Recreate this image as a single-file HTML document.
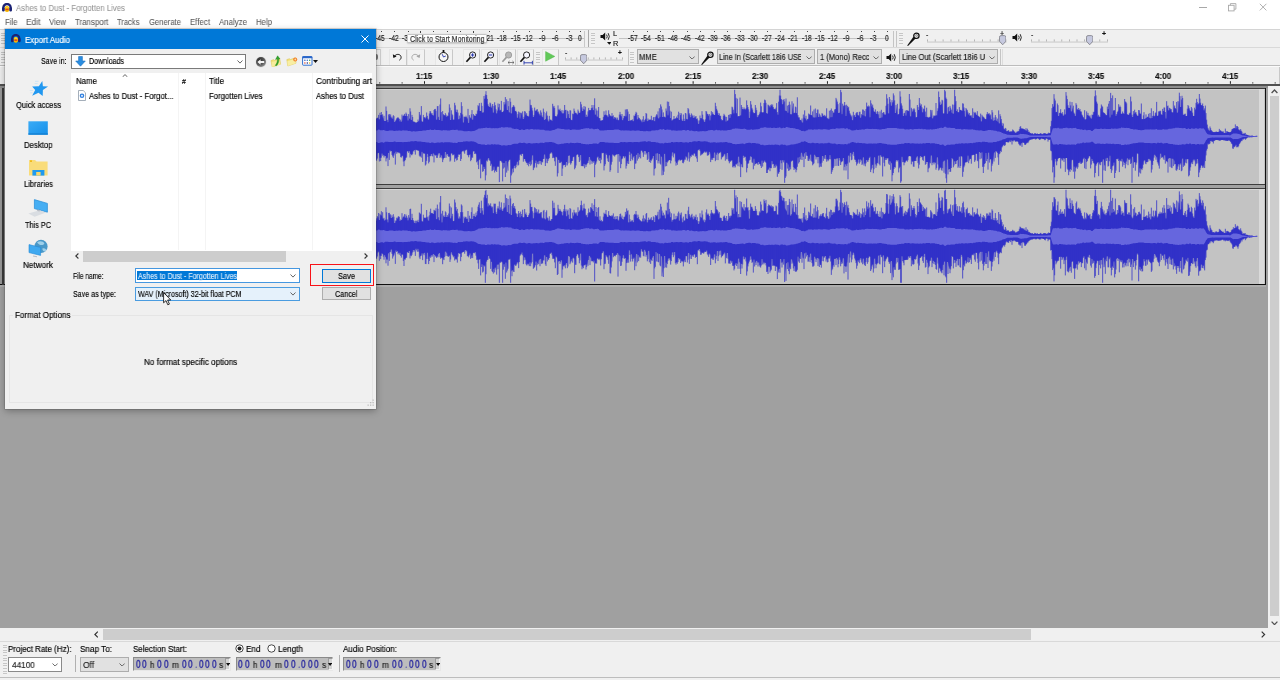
<!DOCTYPE html>
<html><head><meta charset="utf-8"><title>Audacity</title>
<style>
*{box-sizing:border-box;margin:0;padding:0}
html,body{width:1280px;height:680px;overflow:hidden;background:#f0f0f0;font-family:"Liberation Sans",sans-serif;font-size:9px;color:#000}
.a{position:absolute}
.t{position:absolute;white-space:nowrap;line-height:1;will-change:transform;-webkit-text-stroke:0.16px}
#titlebar{left:0;top:0;width:1280px;height:14px;background:#fff}
#menubar{left:0;top:14px;width:1280px;height:15px;background:#fff}
.menu{top:17px;font-size:9px;color:#5a5a5a}
.combo{position:absolute;border:1px solid #adadad;background:#e1e1e1;font-size:9px;line-height:13px;white-space:nowrap;overflow:hidden;padding-left:2px;color:#1a1a1a}
.chev{position:absolute;width:7px;height:4px}
.tb{position:absolute;background:#f0f0f0}
.hl{position:absolute;height:1px;background:#d0d0d0}
.vl{position:absolute;width:1px;background:#b8b8b8}
.btn{position:absolute;width:17.5px;height:17px;background:#f2f2f2;border:1px solid #e6e6e6;border-right-color:#c8c8c8;border-bottom-color:#c0c0c0}
.grab{position:absolute;width:4px;background:repeating-linear-gradient(#f2f2f2 0 1.6px,#c6c6c6 1.6px 2.6px)}
.tc{position:absolute;height:14px;background:#bdbdbd;border:1px solid #8a8a8a;border-right-color:#e8e8e8;border-bottom-color:#e8e8e8;font-size:10px;line-height:12px;white-space:nowrap;color:#222}
.tc b{font-weight:normal;color:#3b3bb5;letter-spacing:1.2px}
#dlg{left:5px;top:29px;width:371px;height:379.8px;background:#f0f0f0;box-shadow:0 0 0 0.6px rgba(60,60,60,.35), 0 2px 7px rgba(0,0,0,.30)}
#dlgtitle{left:0;top:0;width:371px;height:20px;background:#0078d7}
.lbl{font-size:8.5px;color:#000}
.side{font-size:8.5px;color:#000;text-align:center;width:66px}
</style></head><body>
<!-- main window -->
<div class="a" id="titlebar"></div>
<div class="a" id="menubar"></div>
<svg class="a" style="left:1.8px;top:2.9px;" width="10" height="9.2" viewBox="0 0 10 9.2"><path d="M1.3 7.4V4.9A3.7 3.9 0 0 1 8.7 4.9V7.4" fill="none" stroke="#1b2375" stroke-width="2.3" stroke-linecap="butt"/><ellipse cx="5" cy="6" rx="2.4" ry="3" fill="#f5b800"/><ellipse cx="5" cy="4.6" rx="1.6" ry="1.2" fill="#f8cf30"/><ellipse cx="5" cy="6.4" rx="1.7" ry="0.9" fill="#e2481c"/><rect x="0.1" y="4.2" width="2.5" height="4.3" rx="1.1" fill="#1b2375"/><rect x="7.4" y="4.2" width="2.5" height="4.3" rx="1.1" fill="#1b2375"/></svg>
<div class="t" style="left:16.00px;top:4.11px;font-size:8.8px;color:#959595;transform:scaleX(0.8843);transform-origin:0 50%;-webkit-text-stroke:0.05px;">Ashes to Dust - Forgotten Lives</div>
<div class="a" style="left:1199px;top:6.8px;width:7.5px;height:1px;background:#a8a8a8;"></div>
<svg class="a" style="left:1228px;top:3px;" width="9" height="9" viewBox="0 0 9 9"><rect x="0.5" y="2.3" width="5.6" height="5.6" fill="none" stroke="#a8a8a8" stroke-width="0.9"/><path d="M2.4 2.3V0.6H7.9V6.2H6.2" fill="none" stroke="#a8a8a8" stroke-width="0.9"/></svg>
<svg class="a" style="left:1259px;top:3px;" width="9" height="9" viewBox="0 0 9 9"><path d="M0.8 0.8L7.4 7.4M7.4 0.8L0.8 7.4" stroke="#a8a8a8" stroke-width="0.9" fill="none"/></svg>
<div class="t" style="left:5.00px;top:18.11px;font-size:8.8px;color:#585858;transform:scaleX(0.8815);transform-origin:0 50%;-webkit-text-stroke:0.05px;">File</div>
<div class="t" style="left:26.00px;top:18.11px;font-size:8.8px;color:#585858;transform:scaleX(0.9562);transform-origin:0 50%;-webkit-text-stroke:0.05px;">Edit</div>
<div class="t" style="left:49.00px;top:18.11px;font-size:8.8px;color:#585858;transform:scaleX(0.8987);transform-origin:0 50%;-webkit-text-stroke:0.05px;">View</div>
<div class="t" style="left:75.00px;top:18.11px;font-size:8.8px;color:#585858;transform:scaleX(0.8973);transform-origin:0 50%;-webkit-text-stroke:0.05px;">Transport</div>
<div class="t" style="left:117.00px;top:18.11px;font-size:8.8px;color:#585858;transform:scaleX(0.8629);transform-origin:0 50%;-webkit-text-stroke:0.05px;">Tracks</div>
<div class="t" style="left:148.50px;top:18.11px;font-size:8.8px;color:#585858;transform:scaleX(0.8721);transform-origin:0 50%;-webkit-text-stroke:0.05px;">Generate</div>
<div class="t" style="left:189.50px;top:18.11px;font-size:8.8px;color:#585858;transform:scaleX(0.8953);transform-origin:0 50%;-webkit-text-stroke:0.05px;">Effect</div>
<div class="t" style="left:218.50px;top:18.11px;font-size:8.8px;color:#585858;transform:scaleX(0.8943);transform-origin:0 50%;-webkit-text-stroke:0.05px;">Analyze</div>
<div class="t" style="left:255.50px;top:18.11px;font-size:8.8px;color:#585858;transform:scaleX(0.8840);transform-origin:0 50%;-webkit-text-stroke:0.05px;">Help</div>
<div class="a" style="left:0px;top:29px;width:1280px;height:1px;background:#d4d4d4;"></div>
<div class="a" style="left:0px;top:47px;width:1280px;height:1px;background:#d9d9d9;"></div>
<div class="a" style="left:0px;top:66px;width:1280px;height:1px;background:#d4d4d4;"></div>
<div class="a" style="left:376px;top:38px;width:208px;height:1.2px;background:#c2c2c2;"></div>
<div class="t" style="left:375.40px;top:33.91px;font-size:8.8px;color:#1a1a1a;transform:scaleX(0.7705);transform-origin:0 50%;">-45</div>
<div class="a" style="left:380.9px;top:30.8px;width:0.9px;height:1.3px;background:#444;"></div>
<div class="t" style="left:388.70px;top:33.91px;font-size:8.8px;color:#1a1a1a;transform:scaleX(0.7705);transform-origin:0 50%;">-42</div>
<div class="a" style="left:394.2px;top:30.8px;width:0.9px;height:1.3px;background:#444;"></div>
<div class="t" style="left:402.10px;top:33.91px;font-size:8.8px;color:#1a1a1a;transform:scaleX(0.7705);transform-origin:0 50%;">-39</div>
<div class="a" style="left:407.6px;top:30.8px;width:0.9px;height:1.3px;background:#444;"></div>
<div class="t" style="left:483.80px;top:33.91px;font-size:8.8px;color:#1a1a1a;transform:scaleX(0.7705);transform-origin:0 50%;">-21</div>
<div class="a" style="left:489.3px;top:30.8px;width:0.9px;height:1.3px;background:#444;"></div>
<div class="t" style="left:497.30px;top:33.91px;font-size:8.8px;color:#1a1a1a;transform:scaleX(0.7705);transform-origin:0 50%;">-18</div>
<div class="a" style="left:502.8px;top:30.8px;width:0.9px;height:1.3px;background:#444;"></div>
<div class="t" style="left:510.50px;top:33.91px;font-size:8.8px;color:#1a1a1a;transform:scaleX(0.7705);transform-origin:0 50%;">-15</div>
<div class="a" style="left:516px;top:30.8px;width:0.9px;height:1.3px;background:#444;"></div>
<div class="t" style="left:523.10px;top:33.91px;font-size:8.8px;color:#1a1a1a;transform:scaleX(0.7705);transform-origin:0 50%;">-12</div>
<div class="a" style="left:528.6px;top:30.8px;width:0.9px;height:1.3px;background:#444;"></div>
<div class="t" style="left:538.60px;top:33.91px;font-size:8.8px;color:#1a1a1a;transform:scaleX(0.8179);transform-origin:0 50%;">-9</div>
<div class="a" style="left:542.4px;top:30.8px;width:0.9px;height:1.3px;background:#444;"></div>
<div class="t" style="left:551.80px;top:33.91px;font-size:8.8px;color:#1a1a1a;transform:scaleX(0.8179);transform-origin:0 50%;">-6</div>
<div class="a" style="left:555.6px;top:30.8px;width:0.9px;height:1.3px;background:#444;"></div>
<div class="t" style="left:565.60px;top:33.91px;font-size:8.8px;color:#1a1a1a;transform:scaleX(0.8179);transform-origin:0 50%;">-3</div>
<div class="a" style="left:569.4px;top:30.8px;width:0.9px;height:1.3px;background:#444;"></div>
<div class="t" style="left:578.00px;top:33.91px;font-size:8.8px;color:#1a1a1a;transform:scaleX(0.7355);transform-origin:0 50%;">0</div>
<div class="a" style="left:580.4px;top:30.8px;width:0.9px;height:1.3px;background:#444;"></div>
<div class="a" style="left:584px;top:30.5px;width:1px;height:16px;background:#c8c8c8;"></div>
<div class="a" style="left:420px;top:30.8px;width:0.9px;height:2.2px;background:#444;"></div>
<div class="a" style="left:433.4px;top:30.8px;width:0.9px;height:1.3px;background:#444;"></div>
<div class="a" style="left:446.7px;top:30.8px;width:0.9px;height:1.3px;background:#444;"></div>
<div class="a" style="left:460px;top:30.8px;width:0.9px;height:1.3px;background:#444;"></div>
<div class="a" style="left:473.4px;top:30.8px;width:0.9px;height:2.2px;background:#444;"></div>
<div class="a" style="left:406.8px;top:33.6px;width:79.8px;height:9.6px;background:#fff;border:0.6px solid #c4c4c4;border-radius:1.2px;box-shadow:0 0.5px 1.5px rgba(0,0,0,.25)"></div>
<div class="t" style="left:409.50px;top:35.01px;font-size:8.8px;color:#262626;transform:scaleX(0.7975);transform-origin:0 50%;">Click to Start Monitoring</div>
<div class="a" style="left:587.5px;top:30px;width:1.6px;height:17px;background:#a8a8a8;"></div>
<div class="grab" style="left:591px;top:31px;height:15px"></div>
<svg class="a" style="left:599.6px;top:31.8px;" width="11" height="9" viewBox="0 0 11 9"><path d="M0.5 3H2.6L5.2 0.6V8.4L2.6 6H0.5Z" fill="#111"/><path d="M6.6 2.6Q7.8 4.5 6.6 6.4M8.2 1.2Q10.4 4.5 8.2 7.8" fill="none" stroke="#111" stroke-width="0.9"/></svg>
<svg class="a" style="left:606.6px;top:42.1px;" width="4.6" height="2.8" viewBox="0 0 4.6 2.8"><path d="M0 0H4.6L2.3 2.8Z" fill="#111"/></svg>
<div class="t" style="left:613.00px;top:30.37px;font-size:7.4px;color:#222;">L</div>
<div class="t" style="left:612.80px;top:39.57px;font-size:7.4px;color:#222;">R</div>
<div class="a" style="left:619px;top:38px;width:270px;height:1.2px;background:#c2c2c2;"></div>
<div class="t" style="left:627.90px;top:33.91px;font-size:8.8px;color:#1a1a1a;transform:scaleX(0.7705);transform-origin:0 50%;">-57</div>
<div class="a" style="left:633.4px;top:30.8px;width:0.9px;height:1.3px;background:#444;"></div>
<div class="t" style="left:641.26px;top:33.91px;font-size:8.8px;color:#1a1a1a;transform:scaleX(0.7705);transform-origin:0 50%;">-54</div>
<div class="a" style="left:646.76px;top:30.8px;width:0.9px;height:1.3px;background:#444;"></div>
<div class="t" style="left:654.62px;top:33.91px;font-size:8.8px;color:#1a1a1a;transform:scaleX(0.7705);transform-origin:0 50%;">-51</div>
<div class="a" style="left:660.12px;top:30.8px;width:0.9px;height:1.3px;background:#444;"></div>
<div class="t" style="left:667.98px;top:33.91px;font-size:8.8px;color:#1a1a1a;transform:scaleX(0.7705);transform-origin:0 50%;">-48</div>
<div class="a" style="left:673.48px;top:30.8px;width:0.9px;height:1.3px;background:#444;"></div>
<div class="t" style="left:681.34px;top:33.91px;font-size:8.8px;color:#1a1a1a;transform:scaleX(0.7705);transform-origin:0 50%;">-45</div>
<div class="a" style="left:686.84px;top:30.8px;width:0.9px;height:1.3px;background:#444;"></div>
<div class="t" style="left:694.70px;top:33.91px;font-size:8.8px;color:#1a1a1a;transform:scaleX(0.7705);transform-origin:0 50%;">-42</div>
<div class="a" style="left:700.2px;top:30.8px;width:0.9px;height:1.3px;background:#444;"></div>
<div class="t" style="left:708.06px;top:33.91px;font-size:8.8px;color:#1a1a1a;transform:scaleX(0.7705);transform-origin:0 50%;">-39</div>
<div class="a" style="left:713.56px;top:30.8px;width:0.9px;height:1.3px;background:#444;"></div>
<div class="t" style="left:721.42px;top:33.91px;font-size:8.8px;color:#1a1a1a;transform:scaleX(0.7705);transform-origin:0 50%;">-36</div>
<div class="a" style="left:726.92px;top:30.8px;width:0.9px;height:1.3px;background:#444;"></div>
<div class="t" style="left:734.78px;top:33.91px;font-size:8.8px;color:#1a1a1a;transform:scaleX(0.7705);transform-origin:0 50%;">-33</div>
<div class="a" style="left:740.28px;top:30.8px;width:0.9px;height:1.3px;background:#444;"></div>
<div class="t" style="left:748.14px;top:33.91px;font-size:8.8px;color:#1a1a1a;transform:scaleX(0.7705);transform-origin:0 50%;">-30</div>
<div class="a" style="left:753.64px;top:30.8px;width:0.9px;height:1.3px;background:#444;"></div>
<div class="t" style="left:761.50px;top:33.91px;font-size:8.8px;color:#1a1a1a;transform:scaleX(0.7705);transform-origin:0 50%;">-27</div>
<div class="a" style="left:767px;top:30.8px;width:0.9px;height:1.3px;background:#444;"></div>
<div class="t" style="left:774.86px;top:33.91px;font-size:8.8px;color:#1a1a1a;transform:scaleX(0.7705);transform-origin:0 50%;">-24</div>
<div class="a" style="left:780.36px;top:30.8px;width:0.9px;height:1.3px;background:#444;"></div>
<div class="t" style="left:788.22px;top:33.91px;font-size:8.8px;color:#1a1a1a;transform:scaleX(0.7705);transform-origin:0 50%;">-21</div>
<div class="a" style="left:793.72px;top:30.8px;width:0.9px;height:1.3px;background:#444;"></div>
<div class="t" style="left:801.58px;top:33.91px;font-size:8.8px;color:#1a1a1a;transform:scaleX(0.7705);transform-origin:0 50%;">-18</div>
<div class="a" style="left:807.08px;top:30.8px;width:0.9px;height:1.3px;background:#444;"></div>
<div class="t" style="left:814.94px;top:33.91px;font-size:8.8px;color:#1a1a1a;transform:scaleX(0.7705);transform-origin:0 50%;">-15</div>
<div class="a" style="left:820.44px;top:30.8px;width:0.9px;height:1.3px;background:#444;"></div>
<div class="t" style="left:828.30px;top:33.91px;font-size:8.8px;color:#1a1a1a;transform:scaleX(0.7705);transform-origin:0 50%;">-12</div>
<div class="a" style="left:833.8px;top:30.8px;width:0.9px;height:1.3px;background:#444;"></div>
<div class="t" style="left:843.36px;top:33.91px;font-size:8.8px;color:#1a1a1a;transform:scaleX(0.8179);transform-origin:0 50%;">-9</div>
<div class="a" style="left:847.16px;top:30.8px;width:0.9px;height:1.3px;background:#444;"></div>
<div class="t" style="left:856.72px;top:33.91px;font-size:8.8px;color:#1a1a1a;transform:scaleX(0.8179);transform-origin:0 50%;">-6</div>
<div class="a" style="left:860.52px;top:30.8px;width:0.9px;height:1.3px;background:#444;"></div>
<div class="t" style="left:870.08px;top:33.91px;font-size:8.8px;color:#1a1a1a;transform:scaleX(0.8179);transform-origin:0 50%;">-3</div>
<div class="a" style="left:873.88px;top:30.8px;width:0.9px;height:1.3px;background:#444;"></div>
<div class="t" style="left:884.60px;top:33.91px;font-size:8.8px;color:#1a1a1a;transform:scaleX(0.7355);transform-origin:0 50%;">0</div>
<div class="a" style="left:887px;top:30.8px;width:0.9px;height:1.3px;background:#444;"></div>
<div class="a" style="left:893px;top:30.5px;width:1px;height:16px;background:#c4c4c4;"></div>
<div class="a" style="left:895.5px;top:30.5px;width:1px;height:16px;background:#c4c4c4;"></div>
<div class="grab" style="left:898.5px;top:31px;height:15px"></div>
<svg class="a" style="left:905.5px;top:30.8px;" width="15" height="15" viewBox="0 0 15 15"><path d="M1.2 14.6L2 14.9L9.6 7.6L7.6 5.6Z" fill="#111"/><circle cx="10.4" cy="4.8" r="2.7" fill="#d8d8d8" stroke="#111" stroke-width="1.2"/><path d="M8.8 3.6L11.6 6.4M9.9 2.9L12.3 5.3" stroke="#555" stroke-width="0.5"/></svg>
<div class="t" style="left:926.30px;top:30.76px;font-size:7px;color:#111;">-</div>
<svg class="a" style="left:926.5px;top:37.5px;" width="80.5" height="5" viewBox="0 0 80.5 5"><rect x="0.0" y="1.4" width="0.8" height="2.2" fill="#a8a8a8"/><rect x="7.8" y="1.4" width="0.8" height="2.2" fill="#a8a8a8"/><rect x="15.7" y="1.4" width="0.8" height="2.2" fill="#a8a8a8"/><rect x="23.6" y="1.4" width="0.8" height="2.2" fill="#a8a8a8"/><rect x="31.4" y="1.4" width="0.8" height="2.2" fill="#a8a8a8"/><rect x="39.2" y="1.4" width="0.8" height="2.2" fill="#a8a8a8"/><rect x="47.1" y="1.4" width="0.8" height="2.2" fill="#a8a8a8"/><rect x="55.0" y="1.4" width="0.8" height="2.2" fill="#a8a8a8"/><rect x="62.8" y="1.4" width="0.8" height="2.2" fill="#a8a8a8"/><rect x="70.7" y="1.4" width="0.8" height="2.2" fill="#a8a8a8"/><rect x="78.5" y="1.4" width="0.8" height="2.2" fill="#a8a8a8"/><rect x="0" y="3.6" width="79.5" height="0.9" fill="#c4c4c4"/></svg><svg class="a" style="left:998.9px;top:34.9px;" width="7.4" height="10.4" viewBox="0 0 7.4 10.4"><path d="M0.5 2.2Q0.5 0.6 2 0.6H5.4Q6.9 0.6 6.9 2.2V6.2L3.7 9.8L0.5 6.2Z" fill="#c6c9df" stroke="#7c7c84" stroke-width="0.8"/></svg>
<div class="t" style="left:1000.30px;top:30.16px;font-size:7px;color:#111;">+</div>
<svg class="a" style="left:1011.5px;top:32.5px;" width="11" height="9" viewBox="0 0 11 9"><path d="M0.5 3H2.6L5.2 0.6V8.4L2.6 6H0.5Z" fill="#111"/><path d="M6.6 2.6Q7.8 4.5 6.6 6.4M8.2 1.2Q10.4 4.5 8.2 7.8" fill="none" stroke="#111" stroke-width="0.9"/></svg>
<div class="t" style="left:1030.50px;top:30.76px;font-size:7px;color:#111;">-</div>
<svg class="a" style="left:1030.5px;top:37.5px;" width="78" height="5" viewBox="0 0 78 5"><rect x="0.0" y="1.4" width="0.8" height="2.2" fill="#a8a8a8"/><rect x="7.6" y="1.4" width="0.8" height="2.2" fill="#a8a8a8"/><rect x="15.2" y="1.4" width="0.8" height="2.2" fill="#a8a8a8"/><rect x="22.8" y="1.4" width="0.8" height="2.2" fill="#a8a8a8"/><rect x="30.4" y="1.4" width="0.8" height="2.2" fill="#a8a8a8"/><rect x="38.0" y="1.4" width="0.8" height="2.2" fill="#a8a8a8"/><rect x="45.6" y="1.4" width="0.8" height="2.2" fill="#a8a8a8"/><rect x="53.2" y="1.4" width="0.8" height="2.2" fill="#a8a8a8"/><rect x="60.8" y="1.4" width="0.8" height="2.2" fill="#a8a8a8"/><rect x="68.4" y="1.4" width="0.8" height="2.2" fill="#a8a8a8"/><rect x="76.0" y="1.4" width="0.8" height="2.2" fill="#a8a8a8"/><rect x="0" y="3.6" width="77" height="0.9" fill="#c4c4c4"/></svg><svg class="a" style="left:1086px;top:34.9px;" width="7.4" height="10.4" viewBox="0 0 7.4 10.4"><path d="M0.5 2.2Q0.5 0.6 2 0.6H5.4Q6.9 0.6 6.9 2.2V6.2L3.7 9.8L0.5 6.2Z" fill="#c6c9df" stroke="#7c7c84" stroke-width="0.8"/></svg>
<div class="t" style="left:1102.00px;top:30.16px;font-size:7px;color:#111;font-weight:bold;">+</div>
<div class="a" style="left:376px;top:48.5px;width:4.5px;height:17px;background:#f2f2f2;border:1px solid #cfcfcf;border-left:none"></div>
<div class="a" style="left:376.3px;top:54px;width:1.4px;height:6px;background:#777;border-radius:0 2px 2px 0"></div>
<div class="grab" style="left:0.5px;top:31px;height:15px"></div>
<div class="grab" style="left:0.5px;top:49.5px;height:15px"></div>
<div class="btn" style="left:389px;top:48.5px"></div>
<div class="btn" style="left:407px;top:48.5px"></div>
<div class="btn" style="left:435px;top:48.5px"></div>
<div class="btn" style="left:462.5px;top:48.5px"></div>
<div class="btn" style="left:480.5px;top:48.5px"></div>
<div class="btn" style="left:498.5px;top:48.5px"></div>
<div class="btn" style="left:516.5px;top:48.5px"></div>
<svg class="a" style="left:391px;top:50.2px;" width="13" height="12" viewBox="0 0 13 12"><path d="M3.4 6.2C5.4 3.6 9.2 3.8 10 6.6C10.4 8.2 9.6 9.4 8.4 10.2" fill="none" stroke="#111" stroke-width="0.95"/><path d="M1.8 4.2L2.4 8L5.6 6.4Z" fill="#111"/></svg>
<svg class="a" style="left:409px;top:50.2px;" width="13" height="12" viewBox="0 0 13 12"><path d="M9.6 6.2C7.6 3.6 3.8 3.8 3 6.6C2.6 8.2 3.4 9.4 4.6 10.2" fill="none" stroke="#a4a4a4" stroke-width="0.95"/><path d="M11.2 4.2L10.6 8L7.4 6.4Z" fill="#a4a4a4"/></svg>
<svg class="a" style="left:437px;top:49px;" width="13" height="14" viewBox="0 0 13 14"><circle cx="6.5" cy="8" r="4.5" fill="#f6f6f6" stroke="#111" stroke-width="1"/><path d="M6.5 8L5.2 5.2M6.5 8L8.8 7" stroke="#2233aa" stroke-width="0.9"/><rect x="5.6" y="1" width="1.8" height="2.4" fill="#111"/></svg>
<svg class="a" style="left:463.5px;top:49.5px;" width="15" height="15" viewBox="0 0 15 15"><circle cx="8.6" cy="5" r="3.1" fill="#f6f6ff" stroke="#111" stroke-width="0.9"/><path d="M6.4 7.4L2.4 11.8" stroke="#111" stroke-width="1.6"/><path d="M6.9 5H10.3M8.6 3.3V6.7" stroke="#2233aa" stroke-width="1"/></svg>
<svg class="a" style="left:481.5px;top:49.5px;" width="15" height="15" viewBox="0 0 15 15"><circle cx="8.6" cy="5" r="3.1" fill="#f6f6ff" stroke="#111" stroke-width="0.9"/><path d="M6.4 7.4L2.4 11.8" stroke="#111" stroke-width="1.6"/><path d="M6.9 5H10.3" stroke="#2233aa" stroke-width="1"/></svg>
<svg class="a" style="left:499.5px;top:49.5px;" width="15" height="15" viewBox="0 0 15 15"><circle cx="8.6" cy="5" r="3.1" fill="#b8b8b8" stroke="#999" stroke-width="0.9"/><path d="M6.4 7.4L2.4 11.8" stroke="#999" stroke-width="1.6"/><path d="M8 12.5H14M8 12.5L9.6 11M8 12.5L9.6 14M14 12.5L12.4 11M14 12.5L12.4 14" stroke="#555" stroke-width="0.7" fill="none"/></svg>
<svg class="a" style="left:517.5px;top:49.5px;" width="15" height="15" viewBox="0 0 15 15"><circle cx="8.6" cy="5" r="3.1" fill="#f6f6ff" stroke="#111" stroke-width="0.9"/><path d="M6.4 7.4L2.4 11.8" stroke="#111" stroke-width="1.6"/><path d="M6 12.8H14.4M6 10.8V14.6M14.4 10.8V14.6" stroke="#2233aa" stroke-width="0.9" fill="none"/></svg>
<div class="grab" style="left:536px;top:49.5px;height:15px"></div>
<div class="btn" style="left:541.5px;top:48.5px"></div>
<svg class="a" style="left:545.4px;top:51.2px;" width="11" height="11" viewBox="0 0 11 11"><path d="M0.6 0.6L9.8 5.4L0.6 10.2Z" fill="#62c95a" stroke="#52b84a" stroke-width="0.5"/></svg>
<div class="t" style="left:565.00px;top:49.36px;font-size:7px;color:#111;">-</div>
<svg class="a" style="left:565px;top:56.4px;" width="59" height="5" viewBox="0 0 59 5"><rect x="0.0" y="1.4" width="0.8" height="2.2" fill="#a8a8a8"/><rect x="5.7" y="1.4" width="0.8" height="2.2" fill="#a8a8a8"/><rect x="11.4" y="1.4" width="0.8" height="2.2" fill="#a8a8a8"/><rect x="17.1" y="1.4" width="0.8" height="2.2" fill="#a8a8a8"/><rect x="22.8" y="1.4" width="0.8" height="2.2" fill="#a8a8a8"/><rect x="28.5" y="1.4" width="0.8" height="2.2" fill="#a8a8a8"/><rect x="34.2" y="1.4" width="0.8" height="2.2" fill="#a8a8a8"/><rect x="39.9" y="1.4" width="0.8" height="2.2" fill="#a8a8a8"/><rect x="45.6" y="1.4" width="0.8" height="2.2" fill="#a8a8a8"/><rect x="51.3" y="1.4" width="0.8" height="2.2" fill="#a8a8a8"/><rect x="57.0" y="1.4" width="0.8" height="2.2" fill="#a8a8a8"/><rect x="0" y="3.6" width="58" height="0.9" fill="#c4c4c4"/></svg><svg class="a" style="left:579.5px;top:53.8px;" width="7.4" height="10.4" viewBox="0 0 7.4 10.4"><path d="M0.5 2.2Q0.5 0.6 2 0.6H5.4Q6.9 0.6 6.9 2.2V6.2L3.7 9.8L0.5 6.2Z" fill="#c6c9df" stroke="#7c7c84" stroke-width="0.8"/></svg>
<div class="t" style="left:617.60px;top:50.40px;font-size:6.5px;color:#111;font-weight:bold;">+</div>
<div class="a" style="left:627.5px;top:48.5px;width:1px;height:17px;background:#c4c4c4;"></div>
<div class="grab" style="left:629.5px;top:49.5px;height:15px"></div>
<div class="combo" style="left:636.5px;top:49.2px;width:62px;height:15.2px"></div>
<div class="t" style="left:639.30px;top:53.11px;font-size:8.8px;color:#1a1a1a;transform:scaleX(0.8621);transform-origin:0 50%;">MME</div>
<svg class="a" style="left:689.3px;top:55.8px;" width="6.2" height="3.6" viewBox="0 0 6.2 3.6"><path d="M0.5 0.5L3.1 3.1L5.7 0.5" fill="none" stroke="#5a5a5a" stroke-width="0.9"/></svg>
<svg class="a" style="left:700.2px;top:49.8px;" width="15" height="15" viewBox="0 0 15 15"><path d="M1.2 14.6L2 14.9L9.6 7.6L7.6 5.6Z" fill="#111"/><circle cx="10.4" cy="4.8" r="2.7" fill="#d8d8d8" stroke="#111" stroke-width="1.2"/><path d="M8.8 3.6L11.6 6.4M9.9 2.9L12.3 5.3" stroke="#555" stroke-width="0.5"/></svg>
<div class="combo" style="left:716.5px;top:49.2px;width:98.7px;height:15.2px"></div>
<div class="t" style="left:719.30px;top:53.11px;font-size:8.8px;color:#1a1a1a;transform:scaleX(0.8266);transform-origin:0 50%;">Line In (Scarlett 18i6 USB</div>
<svg class="a" style="left:806px;top:55.8px;" width="6.2" height="3.6" viewBox="0 0 6.2 3.6"><path d="M0.5 0.5L3.1 3.1L5.7 0.5" fill="none" stroke="#5a5a5a" stroke-width="0.9"/></svg>
<div class="a" style="left:801.3px;top:51px;width:3.5px;height:12px;background:#e1e1e1;"></div>
<div class="combo" style="left:817px;top:49.2px;width:65px;height:15.2px"></div>
<div class="t" style="left:819.80px;top:53.11px;font-size:8.8px;color:#1a1a1a;transform:scaleX(0.8578);transform-origin:0 50%;">1 (Mono) Recc</div>
<svg class="a" style="left:872.8px;top:55.8px;" width="6.2" height="3.6" viewBox="0 0 6.2 3.6"><path d="M0.5 0.5L3.1 3.1L5.7 0.5" fill="none" stroke="#5a5a5a" stroke-width="0.9"/></svg>
<div class="a" style="left:868.5px;top:51px;width:3px;height:12px;background:#e1e1e1;"></div>
<svg class="a" style="left:885.5px;top:52.5px;" width="11" height="9" viewBox="0 0 11 9"><path d="M0.5 3H2.6L5.2 0.6V8.4L2.6 6H0.5Z" fill="#111"/><path d="M6.6 2.6Q7.8 4.5 6.6 6.4M8.2 1.2Q10.4 4.5 8.2 7.8" fill="none" stroke="#111" stroke-width="0.9"/></svg>
<div class="combo" style="left:899px;top:49.2px;width:98.7px;height:15.2px"></div>
<div class="t" style="left:901.80px;top:53.11px;font-size:8.8px;color:#1a1a1a;transform:scaleX(0.8634);transform-origin:0 50%;">Line Out (Scarlett 18i6 U</div>
<svg class="a" style="left:988.5px;top:55.8px;" width="6.2" height="3.6" viewBox="0 0 6.2 3.6"><path d="M0.5 0.5L3.1 3.1L5.7 0.5" fill="none" stroke="#5a5a5a" stroke-width="0.9"/></svg>
<div class="a" style="left:999.5px;top:48.5px;width:1px;height:17px;background:#c4c4c4;"></div>
<div class="a" style="left:1001.5px;top:48.5px;width:1px;height:17px;background:#dcdcdc;"></div>
<div class="a" style="left:0px;top:67px;width:1280px;height:17px;background:#eeeeee;"></div>
<div class="a" style="left:0px;top:66px;width:1280px;height:1.2px;background:#fafafa;"></div>
<div class="a" style="left:0px;top:65px;width:1280px;height:1px;background:#bcbcbc;"></div>
<div class="a" style="left:1279px;top:67px;width:1px;height:17px;background:#c8c8c8;"></div>
<svg class="a" style="left:0;top:0" width="1280" height="90" viewBox="0 0 1280 90"><rect x="379.23" y="82.2" width="1" height="1.4" fill="#444"/><rect x="401.61" y="82.2" width="1" height="1.4" fill="#444"/><rect x="424.00" y="81.2" width="1" height="2.6" fill="#222"/><rect x="446.39" y="82.2" width="1" height="1.4" fill="#444"/><rect x="468.77" y="82.2" width="1" height="1.4" fill="#444"/><rect x="491.16" y="81.2" width="1" height="2.6" fill="#222"/><rect x="513.54" y="82.2" width="1" height="1.4" fill="#444"/><rect x="535.93" y="82.2" width="1" height="1.4" fill="#444"/><rect x="558.32" y="81.2" width="1" height="2.6" fill="#222"/><rect x="580.70" y="82.2" width="1" height="1.4" fill="#444"/><rect x="603.09" y="82.2" width="1" height="1.4" fill="#444"/><rect x="625.47" y="81.2" width="1" height="2.6" fill="#222"/><rect x="647.86" y="82.2" width="1" height="1.4" fill="#444"/><rect x="670.25" y="82.2" width="1" height="1.4" fill="#444"/><rect x="692.63" y="81.2" width="1" height="2.6" fill="#222"/><rect x="715.02" y="82.2" width="1" height="1.4" fill="#444"/><rect x="737.40" y="82.2" width="1" height="1.4" fill="#444"/><rect x="759.79" y="81.2" width="1" height="2.6" fill="#222"/><rect x="782.18" y="82.2" width="1" height="1.4" fill="#444"/><rect x="804.56" y="82.2" width="1" height="1.4" fill="#444"/><rect x="826.95" y="81.2" width="1" height="2.6" fill="#222"/><rect x="849.33" y="82.2" width="1" height="1.4" fill="#444"/><rect x="871.72" y="82.2" width="1" height="1.4" fill="#444"/><rect x="894.11" y="81.2" width="1" height="2.6" fill="#222"/><rect x="916.49" y="82.2" width="1" height="1.4" fill="#444"/><rect x="938.88" y="82.2" width="1" height="1.4" fill="#444"/><rect x="961.26" y="81.2" width="1" height="2.6" fill="#222"/><rect x="983.65" y="82.2" width="1" height="1.4" fill="#444"/><rect x="1006.04" y="82.2" width="1" height="1.4" fill="#444"/><rect x="1028.42" y="81.2" width="1" height="2.6" fill="#222"/><rect x="1050.81" y="82.2" width="1" height="1.4" fill="#444"/><rect x="1073.19" y="82.2" width="1" height="1.4" fill="#444"/><rect x="1095.58" y="81.2" width="1" height="2.6" fill="#222"/><rect x="1117.97" y="82.2" width="1" height="1.4" fill="#444"/><rect x="1140.35" y="82.2" width="1" height="1.4" fill="#444"/><rect x="1162.74" y="81.2" width="1" height="2.6" fill="#222"/><rect x="1185.12" y="82.2" width="1" height="1.4" fill="#444"/><rect x="1207.51" y="82.2" width="1" height="1.4" fill="#444"/><rect x="1229.90" y="81.2" width="1" height="2.6" fill="#222"/><rect x="1252.28" y="82.2" width="1" height="1.4" fill="#444"/><rect x="1274.67" y="82.2" width="1" height="1.4" fill="#444"/></svg>
<div class="t" style="left:416.10px;top:71.52px;font-size:9px;color:#111;transform:scaleX(0.8993);transform-origin:0 50%;font-weight:bold;">1:15</div>
<div class="t" style="left:483.26px;top:71.52px;font-size:9px;color:#111;transform:scaleX(0.8993);transform-origin:0 50%;font-weight:bold;">1:30</div>
<div class="t" style="left:550.42px;top:71.52px;font-size:9px;color:#111;transform:scaleX(0.8993);transform-origin:0 50%;font-weight:bold;">1:45</div>
<div class="t" style="left:617.57px;top:71.52px;font-size:9px;color:#111;transform:scaleX(0.8993);transform-origin:0 50%;font-weight:bold;">2:00</div>
<div class="t" style="left:684.73px;top:71.52px;font-size:9px;color:#111;transform:scaleX(0.8993);transform-origin:0 50%;font-weight:bold;">2:15</div>
<div class="t" style="left:751.89px;top:71.52px;font-size:9px;color:#111;transform:scaleX(0.8993);transform-origin:0 50%;font-weight:bold;">2:30</div>
<div class="t" style="left:819.05px;top:71.52px;font-size:9px;color:#111;transform:scaleX(0.8993);transform-origin:0 50%;font-weight:bold;">2:45</div>
<div class="t" style="left:886.21px;top:71.52px;font-size:9px;color:#111;transform:scaleX(0.8993);transform-origin:0 50%;font-weight:bold;">3:00</div>
<div class="t" style="left:953.36px;top:71.52px;font-size:9px;color:#111;transform:scaleX(0.8993);transform-origin:0 50%;font-weight:bold;">3:15</div>
<div class="t" style="left:1020.52px;top:71.52px;font-size:9px;color:#111;transform:scaleX(0.8993);transform-origin:0 50%;font-weight:bold;">3:30</div>
<div class="t" style="left:1087.68px;top:71.52px;font-size:9px;color:#111;transform:scaleX(0.8993);transform-origin:0 50%;font-weight:bold;">3:45</div>
<div class="t" style="left:1154.84px;top:71.52px;font-size:9px;color:#111;transform:scaleX(0.8993);transform-origin:0 50%;font-weight:bold;">4:00</div>
<div class="t" style="left:1222.00px;top:71.52px;font-size:9px;color:#111;transform:scaleX(0.8993);transform-origin:0 50%;font-weight:bold;">4:15</div>
<div class="a" style="left:0px;top:84px;width:1280px;height:544px;background:#a0a0a0;"></div>
<div class="a" style="left:0px;top:84px;width:1280px;height:1.9px;background:#505050;"></div>
<div class="a" style="left:0px;top:85.9px;width:1268.4px;height:1.8px;background:#8e8e8e;"></div>
<div class="a" style="left:0px;top:87.7px;width:1266px;height:1.2px;background:#3c3c3c;"></div>
<div class="a" style="left:0px;top:88.9px;width:1265px;height:95px;background:#c3c3c3;"></div>
<div class="a" style="left:0px;top:188.8px;width:1265px;height:95.4px;background:#c3c3c3;"></div>
<div class="a" style="left:0px;top:88.9px;width:1265px;height:0.9px;background:#cfcfcf;"></div>
<div class="a" style="left:0px;top:188.8px;width:1265px;height:0.9px;background:#d6d6d6;"></div>
<div class="a" style="left:1258.5px;top:89px;width:5.5px;height:95px;background:#dadada;"></div>
<div class="a" style="left:1258.5px;top:189px;width:5.5px;height:95px;background:#dadada;"></div>
<div class="a" style="left:0px;top:183.9px;width:1266px;height:1.2px;background:#3e3e3e;"></div>
<div class="a" style="left:0px;top:185.1px;width:1266px;height:2.7px;background:#a2a2a2;"></div>
<div class="a" style="left:0px;top:187.8px;width:1266px;height:1.1px;background:#3e3e3e;"></div>
<div class="a" style="left:0px;top:283.9px;width:1266px;height:1.4px;background:#101010;"></div>
<div class="a" style="left:1264.5px;top:88px;width:1.6px;height:197.3px;background:#101010;"></div>
<div class="a" style="left:0px;top:285.3px;width:1266px;height:1.8px;background:#adadad;"></div>
<div class="a" style="left:0px;top:88px;width:5px;height:196px;background:#989898;"></div>
<div class="a" style="left:2.4px;top:88px;width:1.5px;height:196.5px;background:#3a3a3a;"></div>
<svg class="a" style="left:0;top:0" width="1280" height="290" viewBox="0 0 1280 290"><polygon points="376.0,119.3 376.7,119.3 377.3,118.2 378.0,117.9 378.7,119.5 379.3,119.5 380.0,119.5 380.7,115.1 381.3,115.1 382.0,114.8 382.7,117.4 383.3,117.4 384.0,120.9 384.7,120.9 385.3,120.9 386.0,120.9 386.7,119.8 387.3,122.2 388.0,122.2 388.7,122.2 389.3,115.5 390.0,115.5 390.7,117.6 391.3,117.6 392.0,118.7 392.7,118.7 393.3,118.7 394.0,121.9 394.7,121.9 395.3,121.9 396.0,120.9 396.7,119.8 397.3,118.4 398.0,118.1 398.7,118.9 399.3,121.5 400.0,121.5 400.7,121.8 401.3,121.8 402.0,121.8 402.7,116.1 403.3,116.1 404.0,115.9 404.7,116.0 405.3,116.0 406.0,116.0 406.7,116.1 407.3,120.4 408.0,120.4 408.7,120.4 409.3,118.6 410.0,118.6 410.7,119.9 411.3,119.9 412.0,119.9 412.7,121.5 413.3,121.5 414.0,122.1 414.7,122.1 415.3,123.0 416.0,123.0 416.7,123.0 417.3,122.3 418.0,122.0 418.7,121.3 419.3,121.3 420.0,115.2 420.7,115.2 421.3,121.1 422.0,121.9 422.7,121.9 423.3,121.9 424.0,117.4 424.7,118.5 425.3,118.5 426.0,118.5 426.7,116.7 427.3,118.6 428.0,119.8 428.7,119.8 429.3,119.8 430.0,113.5 430.7,113.3 431.3,113.3 432.0,114.9 432.7,115.6 433.3,115.6 434.0,115.6 434.7,110.0 435.3,110.8 436.0,119.8 436.7,119.8 437.3,119.8 438.0,116.8 438.7,120.0 439.3,120.0 440.0,120.0 440.7,112.1 441.3,121.1 442.0,121.1 442.7,121.1 443.3,115.0 444.0,115.6 444.7,115.6 445.3,115.6 446.0,116.8 446.7,116.8 447.3,116.8 448.0,116.2 448.7,116.2 449.3,112.5 450.0,120.1 450.7,120.1 451.3,120.1 452.0,115.1 452.7,119.7 453.3,119.7 454.0,119.7 454.7,119.6 455.3,109.6 456.0,112.2 456.7,112.2 457.3,112.6 458.0,119.3 458.7,119.3 459.3,119.3 460.0,118.2 460.7,118.2 461.3,112.9 462.0,114.4 462.7,122.4 463.3,122.4 464.0,122.4 464.7,117.2 465.3,117.2 466.0,117.2 466.7,118.5 467.3,118.5 468.0,122.9 468.7,122.9 469.3,122.9 470.0,118.3 470.7,118.3 471.3,118.3 472.0,119.8 472.7,119.8 473.3,119.8 474.0,115.8 474.7,115.9 475.3,115.9 476.0,115.9 476.7,114.2 477.3,114.2 478.0,110.5 478.7,106.1 479.3,111.0 480.0,111.0 480.7,111.0 481.3,110.9 482.0,112.7 482.7,112.7 483.3,112.7 484.0,112.4 484.7,98.8 485.3,98.8 486.0,95.0 486.7,98.9 487.3,104.3 488.0,106.0 488.7,107.0 489.3,107.0 490.0,107.0 490.7,107.6 491.3,107.6 492.0,107.6 492.7,112.7 493.3,112.7 494.0,112.7 494.7,106.0 495.3,109.3 496.0,113.6 496.7,113.6 497.3,113.6 498.0,110.5 498.7,107.2 499.3,110.6 500.0,110.6 500.7,110.6 501.3,112.2 502.0,112.2 502.7,112.2 503.3,112.0 504.0,110.9 504.7,104.5 505.3,104.5 506.0,102.0 506.7,110.1 507.3,110.1 508.0,110.1 508.7,112.5 509.3,112.5 510.0,112.5 510.7,113.6 511.3,113.6 512.0,113.6 512.7,107.6 513.3,106.9 514.0,107.1 514.7,111.1 515.3,111.1 516.0,112.1 516.7,117.7 517.3,117.7 518.0,117.7 518.7,114.1 519.3,118.4 520.0,118.4 520.7,118.4 521.3,114.3 522.0,114.3 522.7,119.0 523.3,119.0 524.0,119.0 524.7,116.9 525.3,114.7 526.0,114.7 526.7,115.9 527.3,115.9 528.0,116.7 528.7,116.7 529.3,116.7 530.0,110.9 530.7,105.2 531.3,107.8 532.0,110.5 532.7,117.1 533.3,117.1 534.0,117.1 534.7,115.1 535.3,110.7 536.0,110.7 536.7,110.7 537.3,112.2 538.0,112.2 538.7,113.7 539.3,115.6 540.0,115.6 540.7,115.6 541.3,115.5 542.0,117.3 542.7,117.3 543.3,117.3 544.0,119.9 544.7,119.9 545.3,119.9 546.0,119.1 546.7,115.6 547.3,119.6 548.0,121.5 548.7,121.5 549.3,121.5 550.0,120.1 550.7,120.1 551.3,120.9 552.0,120.9 552.7,120.9 553.3,106.0 554.0,107.9 554.7,116.0 555.3,116.2 556.0,116.5 556.7,116.5 557.3,116.5 558.0,114.5 558.7,110.2 559.3,110.2 560.0,110.8 560.7,111.5 561.3,111.5 562.0,113.6 562.7,113.6 563.3,113.6 564.0,113.5 564.7,110.4 565.3,110.1 566.0,118.2 566.7,118.2 567.3,118.2 568.0,114.0 568.7,118.0 569.3,118.0 570.0,118.0 570.7,119.8 571.3,120.2 572.0,120.2 572.7,120.2 573.3,114.3 574.0,114.3 574.7,112.8 575.3,112.8 576.0,113.5 576.7,114.6 577.3,114.6 578.0,114.6 578.7,113.0 579.3,113.0 580.0,113.0 580.7,112.6 581.3,107.3 582.0,111.1 582.7,111.1 583.3,111.1 584.0,109.7 584.7,109.7 585.3,117.0 586.0,117.0 586.7,117.0 587.3,116.7 588.0,116.7 588.7,111.4 589.3,110.4 590.0,110.4 590.7,110.4 591.3,110.1 592.0,108.0 592.7,110.2 593.3,110.2 594.0,110.2 594.7,114.7 595.3,114.7 596.0,114.7 596.7,116.7 597.3,116.7 598.0,116.7 598.7,118.0 599.3,118.2 600.0,120.7 600.7,120.8 601.3,120.8 602.0,120.8 602.7,120.2 603.3,120.2 604.0,116.9 604.7,115.1 605.3,115.1 606.0,115.3 606.7,115.5 607.3,117.2 608.0,117.2 608.7,117.2 609.3,115.1 610.0,116.1 610.7,116.5 611.3,116.5 612.0,116.5 612.7,115.7 613.3,118.7 614.0,118.7 614.7,118.7 615.3,117.7 616.0,119.6 616.7,119.6 617.3,119.7 618.0,120.3 618.7,120.3 619.3,120.3 620.0,114.6 620.7,116.3 621.3,116.3 622.0,120.3 622.7,120.3 623.3,120.3 624.0,118.2 624.7,116.1 625.3,116.6 626.0,116.6 626.7,116.6 627.3,111.5 628.0,121.1 628.7,121.1 629.3,121.1 630.0,120.8 630.7,120.8 631.3,120.6 632.0,120.6 632.7,121.3 633.3,121.3 634.0,121.3 634.7,116.1 635.3,116.1 636.0,113.8 636.7,119.4 637.3,119.4 638.0,119.4 638.7,118.0 639.3,119.4 640.0,119.4 640.7,120.5 641.3,122.2 642.0,122.2 642.7,122.2 643.3,121.9 644.0,121.9 644.7,121.9 645.3,120.2 646.0,118.8 646.7,121.2 647.3,121.2 648.0,121.2 648.7,119.8 649.3,119.8 650.0,119.8 650.7,119.8 651.3,120.4 652.0,120.4 652.7,120.4 653.3,120.2 654.0,121.2 654.7,121.2 655.3,121.2 656.0,117.1 656.7,115.6 657.3,114.5 658.0,118.6 658.7,118.6 659.3,118.6 660.0,117.1 660.7,117.1 661.3,109.5 662.0,117.1 662.7,117.1 663.3,117.1 664.0,116.8 664.7,117.6 665.3,117.6 666.0,117.6 666.7,110.7 667.3,115.4 668.0,115.4 668.7,115.4 669.3,110.7 670.0,118.1 670.7,118.1 671.3,120.8 672.0,120.8 672.7,120.8 673.3,119.7 674.0,119.2 674.7,118.8 675.3,118.8 676.0,118.8 676.7,118.2 677.3,118.2 678.0,118.2 678.7,120.1 679.3,120.1 680.0,120.1 680.7,115.0 681.3,119.6 682.0,121.1 682.7,121.1 683.3,121.1 684.0,120.9 684.7,120.9 685.3,120.9 686.0,118.9 686.7,119.5 687.3,119.5 688.0,119.5 688.7,113.3 689.3,115.0 690.0,117.3 690.7,117.3 691.3,117.3 692.0,115.7 692.7,117.9 693.3,117.9 694.0,117.9 694.7,117.2 695.3,117.2 696.0,118.9 696.7,118.9 697.3,120.5 698.0,123.9 698.7,123.9 699.3,123.9 700.0,120.4 700.7,118.4 701.3,118.4 702.0,118.4 702.7,119.3 703.3,120.4 704.0,122.1 704.7,122.1 705.3,122.1 706.0,119.3 706.7,113.8 707.3,114.1 708.0,115.7 708.7,115.7 709.3,120.4 710.0,120.4 710.7,120.4 711.3,115.5 712.0,114.3 712.7,114.3 713.3,114.9 714.0,114.9 714.7,114.9 715.3,114.7 716.0,108.8 716.7,110.5 717.3,112.9 718.0,115.1 718.7,115.1 719.3,115.9 720.0,115.9 720.7,119.1 721.3,120.4 722.0,120.4 722.7,120.4 723.3,120.3 724.0,115.8 724.7,116.6 725.3,121.5 726.0,121.5 726.7,121.5 727.3,120.8 728.0,120.8 728.7,120.2 729.3,118.0 730.0,118.0 730.7,118.0 731.3,114.4 732.0,114.4 732.7,109.7 733.3,113.5 734.0,113.5 734.7,113.5 735.3,97.8 736.0,113.3 736.7,113.3 737.3,116.5 738.0,116.5 738.7,116.5 739.3,116.2 740.0,116.2 740.7,115.4 741.3,115.4 742.0,109.1 742.7,109.3 743.3,109.3 744.0,109.3 744.7,109.6 745.3,109.6 746.0,109.6 746.7,108.4 747.3,107.1 748.0,109.3 748.7,117.9 749.3,117.9 750.0,117.9 750.7,111.7 751.3,107.8 752.0,109.5 752.7,112.3 753.3,113.3 754.0,113.3 754.7,113.3 755.3,113.0 756.0,110.1 756.7,117.2 757.3,117.2 758.0,117.2 758.7,115.1 759.3,115.0 760.0,113.7 760.7,111.8 761.3,112.1 762.0,112.7 762.7,112.7 763.3,112.7 764.0,112.2 764.7,103.0 765.3,102.8 766.0,113.0 766.7,113.8 767.3,113.8 768.0,113.8 768.7,105.8 769.3,107.6 770.0,107.6 770.7,107.6 771.3,105.8 772.0,105.8 772.7,107.1 773.3,109.3 774.0,109.3 774.7,109.6 775.3,109.6 776.0,109.6 776.7,112.1 777.3,114.7 778.0,114.7 778.7,114.7 779.3,101.7 780.0,95.6 780.7,99.1 781.3,99.8 782.0,104.2 782.7,104.2 783.3,104.2 784.0,101.4 784.7,110.7 785.3,110.7 786.0,111.1 786.7,111.1 787.3,112.7 788.0,112.7 788.7,112.7 789.3,104.9 790.0,114.3 790.7,114.4 791.3,114.4 792.0,114.4 792.7,104.9 793.3,113.2 794.0,113.2 794.7,113.2 795.3,112.7 796.0,113.1 796.7,113.1 797.3,115.2 798.0,117.5 798.7,117.5 799.3,119.8 800.0,120.2 800.7,120.2 801.3,120.2 802.0,122.4 802.7,122.4 803.3,122.4 804.0,117.5 804.7,118.6 805.3,118.6 806.0,120.5 806.7,120.5 807.3,120.5 808.0,119.2 808.7,119.2 809.3,115.1 810.0,115.1 810.7,115.1 811.3,115.5 812.0,115.5 812.7,117.6 813.3,117.6 814.0,117.6 814.7,117.6 815.3,117.6 816.0,117.5 816.7,117.5 817.3,113.0 818.0,117.0 818.7,117.0 819.3,117.0 820.0,116.5 820.7,117.2 821.3,117.2 822.0,117.2 822.7,115.5 823.3,116.0 824.0,116.0 824.7,116.5 825.3,116.5 826.0,116.5 826.7,118.1 827.3,118.1 828.0,119.2 828.7,119.2 829.3,119.2 830.0,117.3 830.7,117.3 831.3,117.2 832.0,117.2 832.7,117.2 833.3,112.8 834.0,112.8 834.7,112.8 835.3,109.5 836.0,109.0 836.7,101.6 837.3,104.2 838.0,113.1 838.7,113.1 839.3,113.1 840.0,112.7 840.7,102.8 841.3,114.3 842.0,114.3 842.7,114.3 843.3,106.0 844.0,106.0 844.7,105.3 845.3,116.0 846.0,116.0 846.7,116.0 847.3,107.8 848.0,107.8 848.7,110.7 849.3,113.3 850.0,114.6 850.7,116.6 851.3,116.6 852.0,120.3 852.7,120.3 853.3,120.3 854.0,115.6 854.7,117.0 855.3,117.0 856.0,117.0 856.7,113.3 857.3,114.9 858.0,115.6 858.7,115.6 859.3,115.6 860.0,117.7 860.7,117.7 861.3,117.7 862.0,115.2 862.7,115.2 863.3,115.5 864.0,115.5 864.7,116.6 865.3,116.6 866.0,116.6 866.7,109.0 867.3,107.0 868.0,107.0 868.7,107.0 869.3,117.2 870.0,117.2 870.7,117.2 871.3,106.4 872.0,106.4 872.7,107.8 873.3,111.1 874.0,111.9 874.7,111.9 875.3,112.3 876.0,113.9 876.7,113.9 877.3,113.9 878.0,114.3 878.7,118.3 879.3,118.3 880.0,118.3 880.7,117.7 881.3,117.7 882.0,117.6 882.7,117.6 883.3,113.0 884.0,114.5 884.7,114.7 885.3,114.7 886.0,114.7 886.7,105.8 887.3,103.8 888.0,113.5 888.7,113.5 889.3,113.5 890.0,102.2 890.7,105.8 891.3,105.8 892.0,105.8 892.7,102.4 893.3,102.4 894.0,100.3 894.7,113.0 895.3,113.0 896.0,113.0 896.7,106.8 897.3,114.4 898.0,114.4 898.7,114.4 899.3,114.1 900.0,108.7 900.7,103.3 901.3,105.6 902.0,108.8 902.7,115.9 903.3,115.9 904.0,115.9 904.7,113.3 905.3,115.8 906.0,115.8 906.7,115.8 907.3,110.6 908.0,111.2 908.7,111.2 909.3,111.2 910.0,116.5 910.7,116.5 911.3,116.5 912.0,111.5 912.7,111.5 913.3,111.5 914.0,109.4 914.7,112.2 915.3,117.6 916.0,117.6 916.7,117.6 917.3,117.1 918.0,110.0 918.7,110.0 919.3,110.0 920.0,105.6 920.7,105.6 921.3,107.3 922.0,112.4 922.7,112.4 923.3,112.4 924.0,109.0 924.7,111.6 925.3,117.1 926.0,117.1 926.7,117.1 927.3,117.4 928.0,117.8 928.7,117.8 929.3,117.8 930.0,117.0 930.7,117.0 931.3,110.1 932.0,118.5 932.7,118.5 933.3,118.5 934.0,116.3 934.7,116.0 935.3,116.0 936.0,115.6 936.7,115.5 937.3,115.5 938.0,110.8 938.7,108.3 939.3,101.7 940.0,104.9 940.7,104.9 941.3,104.9 942.0,103.7 942.7,113.5 943.3,113.5 944.0,113.5 944.7,113.5 945.3,97.6 946.0,99.1 946.7,113.7 947.3,113.7 948.0,113.7 948.7,111.2 949.3,111.2 950.0,111.2 950.7,109.6 951.3,112.7 952.0,112.7 952.7,113.8 953.3,113.8 954.0,113.8 954.7,104.8 955.3,101.1 956.0,111.1 956.7,111.1 957.3,112.0 958.0,112.4 958.7,112.4 959.3,112.4 960.0,109.9 960.7,110.2 961.3,111.0 962.0,111.0 962.7,111.0 963.3,107.4 964.0,110.9 964.7,116.8 965.3,116.8 966.0,116.8 966.7,110.2 967.3,112.4 968.0,114.5 968.7,114.5 969.3,115.8 970.0,115.8 970.7,115.8 971.3,117.6 972.0,117.6 972.7,118.1 973.3,118.1 974.0,118.1 974.7,113.0 975.3,113.6 976.0,115.1 976.7,115.1 977.3,115.6 978.0,116.2 978.7,116.8 979.3,117.6 980.0,117.6 980.7,121.6 981.3,121.6 982.0,121.6 982.7,116.8 983.3,117.4 984.0,118.4 984.7,119.0 985.3,119.3 986.0,119.3 986.7,119.3 987.3,114.3 988.0,114.3 988.7,114.3 989.3,115.6 990.0,115.6 990.7,119.4 991.3,119.4 992.0,119.4 992.7,120.8 993.3,120.8 994.0,120.8 994.7,119.9 995.3,119.9 996.0,120.7 996.7,120.7 997.3,121.7 998.0,121.7 998.7,123.6 999.3,123.6 1000.0,123.6 1000.7,119.1 1001.3,122.9 1002.0,125.8 1002.7,125.8 1003.3,128.6 1004.0,129.4 1004.7,129.4 1005.3,129.4 1006.0,131.1 1006.7,131.2 1007.3,131.2 1008.0,131.2 1008.7,131.8 1009.3,131.8 1010.0,131.8 1010.7,131.8 1011.3,131.5 1012.0,131.5 1012.7,131.4 1013.3,131.1 1014.0,131.4 1014.7,132.6 1015.3,132.9 1016.0,132.9 1016.7,132.9 1017.3,131.7 1018.0,131.4 1018.7,131.4 1019.3,131.4 1020.0,129.1 1020.7,128.5 1021.3,128.5 1022.0,128.6 1022.7,128.7 1023.3,129.3 1024.0,129.3 1024.7,130.3 1025.3,130.3 1026.0,130.7 1026.7,130.7 1027.3,130.7 1028.0,131.9 1028.7,131.9 1029.3,132.9 1030.0,133.0 1030.7,133.7 1031.3,133.7 1032.0,133.7 1032.7,134.1 1033.3,134.3 1034.0,134.3 1034.7,134.3 1035.3,133.6 1036.0,134.0 1036.7,134.0 1037.3,134.1 1038.0,134.1 1038.7,134.1 1039.3,134.0 1040.0,134.0 1040.7,133.6 1041.3,134.3 1042.0,134.3 1042.7,134.3 1043.3,134.2 1044.0,133.6 1044.7,133.6 1045.3,133.7 1046.0,134.1 1046.7,134.1 1047.3,134.1 1048.0,133.7 1048.7,133.7 1049.3,133.2 1050.0,133.2 1050.7,133.1 1051.3,126.3 1052.0,120.8 1052.7,108.1 1053.3,106.6 1054.0,106.6 1054.7,100.5 1055.3,112.3 1056.0,112.3 1056.7,112.3 1057.3,111.9 1058.0,115.9 1058.7,115.9 1059.3,115.9 1060.0,113.0 1060.7,112.9 1061.3,114.0 1062.0,114.0 1062.7,115.7 1063.3,115.7 1064.0,115.7 1064.7,114.6 1065.3,114.6 1066.0,114.6 1066.7,99.1 1067.3,105.2 1068.0,107.8 1068.7,108.0 1069.3,108.0 1070.0,108.0 1070.7,111.6 1071.3,111.6 1072.0,111.6 1072.7,106.9 1073.3,112.6 1074.0,113.7 1074.7,115.9 1075.3,115.9 1076.0,115.9 1076.7,108.9 1077.3,110.1 1078.0,110.1 1078.7,110.1 1079.3,110.1 1080.0,111.6 1080.7,111.6 1081.3,114.6 1082.0,115.5 1082.7,117.0 1083.3,118.2 1084.0,118.2 1084.7,119.5 1085.3,119.5 1086.0,119.5 1086.7,119.1 1087.3,115.1 1088.0,115.5 1088.7,116.1 1089.3,116.1 1090.0,117.6 1090.7,118.7 1091.3,118.7 1092.0,118.7 1092.7,115.0 1093.3,115.0 1094.0,111.8 1094.7,111.7 1095.3,96.3 1096.0,101.6 1096.7,103.6 1097.3,116.5 1098.0,116.5 1098.7,116.5 1099.3,116.9 1100.0,116.9 1100.7,116.9 1101.3,108.5 1102.0,106.8 1102.7,112.3 1103.3,112.8 1104.0,113.0 1104.7,114.1 1105.3,115.1 1106.0,115.2 1106.7,115.2 1107.3,115.2 1108.0,109.1 1108.7,109.1 1109.3,117.6 1110.0,117.6 1110.7,117.6 1111.3,114.8 1112.0,114.8 1112.7,114.8 1113.3,110.8 1114.0,110.8 1114.7,110.4 1115.3,116.1 1116.0,116.1 1116.7,116.1 1117.3,114.1 1118.0,112.0 1118.7,110.9 1119.3,107.2 1120.0,107.2 1120.7,113.9 1121.3,113.9 1122.0,113.9 1122.7,113.5 1123.3,113.9 1124.0,113.9 1124.7,113.9 1125.3,101.9 1126.0,103.3 1126.7,114.1 1127.3,115.1 1128.0,115.1 1128.7,115.1 1129.3,114.7 1130.0,113.3 1130.7,112.6 1131.3,114.7 1132.0,116.9 1132.7,116.9 1133.3,116.9 1134.0,113.8 1134.7,113.8 1135.3,112.5 1136.0,114.3 1136.7,115.6 1137.3,116.0 1138.0,116.0 1138.7,116.0 1139.3,112.9 1140.0,114.0 1140.7,114.0 1141.3,119.3 1142.0,119.3 1142.7,119.3 1143.3,119.2 1144.0,118.9 1144.7,118.9 1145.3,118.9 1146.0,118.3 1146.7,117.4 1147.3,117.4 1148.0,116.9 1148.7,117.8 1149.3,117.8 1150.0,118.3 1150.7,118.3 1151.3,118.3 1152.0,118.0 1152.7,118.0 1153.3,115.9 1154.0,116.3 1154.7,116.3 1155.3,116.3 1156.0,112.9 1156.7,115.9 1157.3,115.9 1158.0,115.9 1158.7,115.6 1159.3,111.6 1160.0,111.6 1160.7,114.2 1161.3,115.0 1162.0,115.0 1162.7,115.0 1163.3,111.1 1164.0,111.1 1164.7,112.0 1165.3,118.4 1166.0,118.4 1166.7,118.4 1167.3,106.1 1168.0,110.5 1168.7,110.5 1169.3,110.5 1170.0,109.1 1170.7,109.2 1171.3,112.1 1172.0,112.4 1172.7,112.4 1173.3,112.4 1174.0,106.6 1174.7,108.0 1175.3,109.0 1176.0,109.0 1176.7,112.8 1177.3,112.8 1178.0,112.8 1178.7,101.5 1179.3,101.5 1180.0,106.9 1180.7,106.9 1181.3,106.9 1182.0,99.5 1182.7,115.1 1183.3,115.1 1184.0,115.1 1184.7,114.6 1185.3,116.0 1186.0,116.0 1186.7,116.0 1187.3,116.0 1188.0,108.7 1188.7,108.3 1189.3,110.2 1190.0,111.0 1190.7,111.0 1191.3,111.0 1192.0,112.6 1192.7,115.8 1193.3,115.9 1194.0,115.9 1194.7,115.9 1195.3,109.6 1196.0,109.6 1196.7,102.8 1197.3,104.5 1198.0,104.5 1198.7,104.5 1199.3,103.3 1200.0,102.7 1200.7,105.1 1201.3,105.2 1202.0,105.2 1202.7,106.0 1203.3,110.2 1204.0,110.2 1204.7,110.2 1205.3,113.1 1206.0,119.7 1206.7,124.6 1207.3,127.9 1208.0,129.5 1208.7,130.8 1209.3,130.8 1210.0,130.8 1210.7,130.1 1211.3,130.9 1212.0,131.7 1212.7,132.1 1213.3,132.3 1214.0,132.3 1214.7,132.3 1215.3,132.3 1216.0,131.8 1216.7,131.9 1217.3,131.9 1218.0,131.9 1218.7,131.8 1219.3,131.8 1220.0,130.3 1220.7,131.1 1221.3,131.3 1222.0,131.7 1222.7,131.7 1223.3,132.8 1224.0,132.9 1224.7,132.9 1225.3,133.0 1226.0,133.0 1226.7,133.0 1227.3,131.8 1228.0,131.8 1228.7,132.0 1229.3,132.3 1230.0,132.3 1230.7,132.3 1231.3,132.0 1232.0,130.7 1232.7,129.1 1233.3,128.9 1234.0,128.2 1234.7,128.2 1235.3,128.6 1236.0,128.6 1236.7,128.6 1237.3,127.0 1238.0,129.5 1238.7,129.7 1239.3,130.8 1240.0,130.8 1240.7,130.8 1241.3,131.7 1242.0,133.6 1242.7,133.9 1243.3,133.9 1244.0,133.9 1244.7,133.4 1245.3,134.9 1246.0,134.9 1246.7,135.0 1247.3,135.1 1248.0,135.5 1248.7,135.6 1249.3,135.6 1250.0,135.7 1250.7,135.7 1251.3,135.7 1252.0,135.8 1252.7,135.8 1253.3,135.9 1254.0,135.9 1254.7,135.9 1255.3,135.9 1256.0,135.8 1256.7,135.8 1257.3,135.8 1257.3,136.8 1256.7,136.8 1256.0,136.8 1255.3,136.8 1254.7,136.8 1254.0,136.9 1253.3,136.9 1252.7,136.9 1252.0,137.0 1251.3,137.3 1250.7,137.3 1250.0,137.3 1249.3,137.4 1248.7,137.3 1248.0,137.3 1247.3,137.3 1246.7,137.7 1246.0,138.3 1245.3,138.4 1244.7,138.4 1244.0,138.4 1243.3,138.7 1242.7,139.4 1242.0,139.4 1241.3,140.8 1240.7,140.8 1240.0,142.2 1239.3,143.3 1238.7,144.2 1238.0,146.2 1237.3,146.7 1236.7,144.7 1236.0,144.7 1235.3,144.7 1234.7,146.2 1234.0,146.8 1233.3,146.8 1232.7,144.1 1232.0,143.5 1231.3,142.0 1230.7,141.1 1230.0,140.6 1229.3,140.6 1228.7,140.6 1228.0,140.7 1227.3,140.8 1226.7,140.5 1226.0,140.5 1225.3,140.2 1224.7,140.2 1224.0,140.1 1223.3,140.1 1222.7,140.0 1222.0,140.0 1221.3,140.0 1220.7,140.3 1220.0,140.4 1219.3,140.3 1218.7,140.3 1218.0,140.3 1217.3,140.0 1216.7,140.0 1216.0,140.0 1215.3,140.1 1214.7,140.2 1214.0,140.6 1213.3,141.1 1212.7,141.5 1212.0,140.7 1211.3,140.7 1210.7,140.7 1210.0,141.1 1209.3,143.4 1208.7,143.6 1208.0,143.6 1207.3,143.6 1206.7,148.8 1206.0,150.6 1205.3,155.4 1204.7,161.1 1204.0,165.6 1203.3,165.6 1202.7,165.9 1202.0,165.2 1201.3,165.2 1200.7,165.2 1200.0,167.8 1199.3,170.1 1198.7,163.3 1198.0,158.9 1197.3,158.9 1196.7,158.9 1196.0,163.6 1195.3,159.5 1194.7,159.5 1194.0,159.5 1193.3,159.8 1192.7,159.8 1192.0,162.1 1191.3,162.1 1190.7,163.6 1190.0,167.3 1189.3,170.7 1188.7,159.1 1188.0,159.1 1187.3,159.1 1186.7,159.2 1186.0,159.2 1185.3,159.2 1184.7,162.7 1184.0,165.2 1183.3,158.5 1182.7,158.5 1182.0,158.5 1181.3,163.6 1180.7,163.6 1180.0,163.6 1179.3,164.2 1178.7,164.2 1178.0,164.2 1177.3,166.5 1176.7,169.3 1176.0,164.1 1175.3,164.1 1174.7,160.6 1174.0,160.6 1173.3,158.8 1172.7,158.8 1172.0,158.8 1171.3,158.5 1170.7,158.5 1170.0,157.9 1169.3,157.9 1168.7,157.9 1168.0,158.7 1167.3,161.4 1166.7,161.0 1166.0,161.0 1165.3,155.2 1164.7,155.2 1164.0,155.2 1163.3,156.8 1162.7,156.8 1162.0,156.8 1161.3,153.6 1160.7,153.6 1160.0,153.6 1159.3,159.3 1158.7,163.6 1158.0,162.1 1157.3,157.3 1156.7,157.3 1156.0,155.8 1155.3,154.7 1154.7,154.7 1154.0,154.7 1153.3,157.6 1152.7,160.9 1152.0,165.0 1151.3,160.6 1150.7,160.6 1150.0,159.3 1149.3,158.8 1148.7,158.8 1148.0,158.8 1147.3,161.7 1146.7,161.9 1146.0,161.9 1145.3,160.2 1144.7,160.2 1144.0,160.2 1143.3,161.3 1142.7,164.7 1142.0,168.3 1141.3,169.0 1140.7,168.3 1140.0,168.3 1139.3,168.3 1138.7,154.1 1138.0,153.3 1137.3,153.3 1136.7,153.3 1136.0,162.7 1135.3,162.0 1134.7,162.0 1134.0,162.0 1133.3,156.8 1132.7,156.8 1132.0,156.8 1131.3,163.2 1130.7,158.5 1130.0,158.5 1129.3,158.5 1128.7,159.6 1128.0,158.2 1127.3,158.2 1126.7,158.2 1126.0,161.6 1125.3,162.9 1124.7,162.9 1124.0,161.6 1123.3,161.6 1122.7,158.7 1122.0,158.7 1121.3,158.7 1120.7,160.2 1120.0,160.2 1119.3,160.2 1118.7,158.5 1118.0,158.5 1117.3,158.5 1116.7,158.9 1116.0,158.9 1115.3,170.6 1114.7,162.4 1114.0,162.4 1113.3,162.4 1112.7,165.5 1112.0,166.3 1111.3,169.0 1110.7,155.7 1110.0,155.7 1109.3,155.7 1108.7,161.3 1108.0,157.8 1107.3,157.8 1106.7,157.8 1106.0,158.4 1105.3,158.4 1104.7,165.4 1104.0,159.3 1103.3,159.3 1102.7,159.3 1102.0,161.5 1101.3,161.5 1100.7,162.1 1100.0,162.8 1099.3,162.8 1098.7,162.0 1098.0,162.0 1097.3,162.0 1096.7,162.9 1096.0,164.2 1095.3,165.8 1094.7,163.4 1094.0,163.3 1093.3,161.1 1092.7,159.0 1092.0,159.0 1091.3,159.0 1090.7,156.7 1090.0,156.1 1089.3,156.1 1088.7,156.1 1088.0,157.9 1087.3,158.9 1086.7,161.1 1086.0,159.0 1085.3,159.0 1084.7,157.7 1084.0,157.7 1083.3,157.7 1082.7,159.2 1082.0,162.6 1081.3,162.8 1080.7,161.5 1080.0,161.5 1079.3,161.5 1078.7,163.0 1078.0,163.0 1077.3,166.5 1076.7,166.5 1076.0,166.5 1075.3,168.1 1074.7,166.6 1074.0,166.6 1073.3,159.7 1072.7,159.7 1072.0,159.7 1071.3,160.3 1070.7,169.1 1070.0,169.1 1069.3,171.1 1068.7,169.9 1068.0,168.8 1067.3,157.9 1066.7,157.9 1066.0,157.9 1065.3,157.9 1064.7,158.4 1064.0,158.3 1063.3,158.3 1062.7,158.3 1062.0,158.5 1061.3,158.5 1060.7,157.8 1060.0,157.8 1059.3,157.8 1058.7,158.0 1058.0,158.2 1057.3,159.0 1056.7,161.3 1056.0,158.8 1055.3,158.8 1054.7,158.8 1054.0,167.1 1053.3,167.1 1052.7,160.3 1052.0,151.3 1051.3,150.6 1050.7,139.6 1050.0,139.6 1049.3,139.6 1048.7,139.7 1048.0,139.0 1047.3,138.6 1046.7,138.6 1046.0,138.6 1045.3,138.6 1044.7,139.0 1044.0,139.0 1043.3,139.0 1042.7,138.5 1042.0,138.4 1041.3,138.4 1040.7,138.4 1040.0,139.4 1039.3,138.9 1038.7,138.5 1038.0,138.3 1037.3,138.3 1036.7,138.3 1036.0,139.0 1035.3,138.4 1034.7,138.4 1034.0,138.4 1033.3,139.0 1032.7,139.1 1032.0,139.1 1031.3,139.5 1030.7,139.5 1030.0,139.5 1029.3,140.0 1028.7,140.5 1028.0,141.7 1027.3,142.5 1026.7,142.5 1026.0,143.2 1025.3,144.2 1024.7,142.9 1024.0,142.5 1023.3,142.5 1022.7,142.5 1022.0,142.7 1021.3,143.5 1020.7,143.5 1020.0,144.8 1019.3,143.8 1018.7,141.8 1018.0,141.4 1017.3,141.2 1016.7,141.2 1016.0,141.2 1015.3,140.7 1014.7,139.9 1014.0,139.9 1013.3,139.9 1012.7,140.8 1012.0,140.4 1011.3,140.4 1010.7,140.4 1010.0,140.6 1009.3,140.6 1008.7,141.7 1008.0,142.1 1007.3,141.9 1006.7,141.9 1006.0,141.9 1005.3,142.1 1004.7,144.6 1004.0,144.6 1003.3,144.6 1002.7,145.4 1002.0,146.4 1001.3,147.5 1000.7,150.9 1000.0,150.9 999.3,153.3 998.7,154.2 998.0,153.0 997.3,151.8 996.7,151.1 996.0,151.1 995.3,151.1 994.7,152.6 994.0,152.6 993.3,159.5 992.7,159.5 992.0,163.7 991.3,159.0 990.7,159.0 990.0,159.0 989.3,152.6 988.7,152.6 988.0,152.6 987.3,159.0 986.7,153.1 986.0,153.1 985.3,153.1 984.7,163.1 984.0,164.0 983.3,166.7 982.7,152.2 982.0,152.2 981.3,152.2 980.7,152.9 980.0,151.9 979.3,151.9 978.7,151.9 978.0,160.8 977.3,154.0 976.7,153.8 976.0,153.8 975.3,153.8 974.7,155.0 974.0,154.8 973.3,154.8 972.7,154.8 972.0,155.2 971.3,155.2 970.7,158.8 970.0,158.8 969.3,159.1 968.7,155.6 968.0,155.6 967.3,155.6 966.7,161.8 966.0,161.9 965.3,161.9 964.7,162.7 964.0,165.6 963.3,167.3 962.7,157.1 962.0,156.1 961.3,156.1 960.7,156.1 960.0,156.6 959.3,156.6 958.7,156.6 958.0,159.9 957.3,159.9 956.7,159.9 956.0,161.0 955.3,161.2 954.7,161.2 954.0,161.2 953.3,159.3 952.7,157.9 952.0,157.9 951.3,157.9 950.7,168.0 950.0,168.9 949.3,168.9 948.7,168.9 948.0,159.5 947.3,159.5 946.7,159.5 946.0,173.8 945.3,160.5 944.7,160.5 944.0,160.5 943.3,161.8 942.7,161.8 942.0,168.2 941.3,167.6 940.7,167.6 940.0,167.6 939.3,168.1 938.7,164.4 938.0,157.2 937.3,157.2 936.7,157.2 936.0,162.6 935.3,162.5 934.7,162.5 934.0,162.3 933.3,162.3 932.7,162.3 932.0,155.6 931.3,155.6 930.7,155.6 930.0,162.6 929.3,162.6 928.7,167.7 928.0,162.0 927.3,162.0 926.7,162.0 926.0,162.1 925.3,155.7 924.7,155.7 924.0,155.7 923.3,156.4 922.7,157.1 922.0,157.1 921.3,155.9 920.7,155.9 920.0,155.9 919.3,157.8 918.7,163.1 918.0,156.2 917.3,156.2 916.7,156.2 916.0,157.5 915.3,160.9 914.7,160.9 914.0,161.0 913.3,161.5 912.7,161.5 912.0,161.5 911.3,156.4 910.7,156.1 910.0,156.0 909.3,156.0 908.7,156.0 908.0,156.5 907.3,160.2 906.7,160.3 906.0,160.3 905.3,161.0 904.7,162.4 904.0,162.1 903.3,162.1 902.7,156.7 902.0,156.7 901.3,156.7 900.7,166.8 900.0,166.8 899.3,166.8 898.7,160.1 898.0,160.1 897.3,159.9 896.7,159.9 896.0,159.9 895.3,161.5 894.7,167.1 894.0,167.1 893.3,169.0 892.7,173.0 892.0,163.2 891.3,163.2 890.7,161.2 890.0,161.2 889.3,161.2 888.7,158.1 888.0,158.1 887.3,158.1 886.7,158.1 886.0,158.1 885.3,158.1 884.7,160.0 884.0,156.4 883.3,156.4 882.7,156.4 882.0,156.7 881.3,155.2 880.7,155.2 880.0,155.2 879.3,155.5 878.7,155.5 878.0,155.5 877.3,162.9 876.7,162.9 876.0,164.4 875.3,157.2 874.7,157.2 874.0,157.2 873.3,164.7 872.7,164.7 872.0,164.7 871.3,168.1 870.7,156.7 870.0,156.7 869.3,156.7 868.7,158.1 868.0,160.0 867.3,160.0 866.7,160.0 866.0,160.0 865.3,163.3 864.7,163.6 864.0,157.2 863.3,157.2 862.7,157.2 862.0,160.6 861.3,159.4 860.7,159.4 860.0,159.4 859.3,159.5 858.7,159.5 858.0,159.5 857.3,162.6 856.7,162.0 856.0,160.1 855.3,159.6 854.7,155.9 854.0,151.8 853.3,151.8 852.7,151.8 852.0,154.4 851.3,152.8 850.7,152.8 850.0,152.8 849.3,155.5 848.7,155.5 848.0,155.5 847.3,163.6 846.7,163.6 846.0,164.2 845.3,164.2 844.7,164.2 844.0,158.1 843.3,158.1 842.7,158.1 842.0,161.2 841.3,161.5 840.7,160.5 840.0,158.1 839.3,158.1 838.7,158.1 838.0,158.3 837.3,158.3 836.7,158.3 836.0,158.6 835.3,158.8 834.7,158.8 834.0,158.8 833.3,166.4 832.7,168.0 832.0,170.1 831.3,159.3 830.7,155.1 830.0,155.1 829.3,155.1 828.7,159.1 828.0,159.6 827.3,159.6 826.7,159.2 826.0,155.0 825.3,155.0 824.7,155.0 824.0,158.8 823.3,156.0 822.7,156.0 822.0,156.0 821.3,162.7 820.7,163.5 820.0,163.5 819.3,156.9 818.7,156.9 818.0,156.9 817.3,157.0 816.7,157.0 816.0,156.4 815.3,154.8 814.7,154.8 814.0,154.8 813.3,163.3 812.7,161.9 812.0,160.9 811.3,154.5 810.7,154.5 810.0,154.5 809.3,158.7 808.7,158.7 808.0,156.0 807.3,155.6 806.7,151.9 806.0,151.9 805.3,151.9 804.7,153.3 804.0,153.3 803.3,156.4 802.7,156.4 802.0,152.8 801.3,152.8 800.7,152.8 800.0,156.7 799.3,156.7 798.7,157.4 798.0,157.4 797.3,157.4 796.7,166.8 796.0,169.1 795.3,168.3 794.7,168.3 794.0,167.2 793.3,160.5 792.7,160.5 792.0,160.5 791.3,160.8 790.7,161.6 790.0,167.2 789.3,167.2 788.7,164.6 788.0,164.6 787.3,162.7 786.7,162.7 786.0,162.7 785.3,176.4 784.7,160.3 784.0,160.3 783.3,160.2 782.7,160.2 782.0,160.2 781.3,160.2 780.7,160.2 780.0,160.2 779.3,169.0 778.7,172.1 778.0,173.8 777.3,166.3 776.7,164.4 776.0,164.4 775.3,164.4 774.7,166.3 774.0,163.9 773.3,163.9 772.7,161.1 772.0,161.1 771.3,161.1 770.7,168.1 770.0,167.4 769.3,167.4 768.7,167.4 768.0,169.4 767.3,170.1 766.7,162.7 766.0,162.2 765.3,160.5 764.7,160.5 764.0,160.5 763.3,162.0 762.7,160.6 762.0,160.6 761.3,160.6 760.7,164.2 760.0,163.9 759.3,161.9 758.7,161.9 758.0,161.9 757.3,162.9 756.7,162.9 756.0,162.9 755.3,163.9 754.7,158.7 754.0,158.7 753.3,158.7 752.7,162.4 752.0,157.1 751.3,156.2 750.7,156.2 750.0,156.2 749.3,159.8 748.7,160.5 748.0,163.2 747.3,163.9 746.7,160.7 746.0,156.7 745.3,156.7 744.7,156.7 744.0,155.7 743.3,155.7 742.7,155.7 742.0,164.2 741.3,164.2 740.7,164.2 740.0,162.4 739.3,156.6 738.7,156.6 738.0,156.6 737.3,163.3 736.7,163.3 736.0,164.1 735.3,164.1 734.7,165.8 734.0,165.8 733.3,166.2 732.7,160.2 732.0,160.2 731.3,160.2 730.7,160.5 730.0,161.7 729.3,161.2 728.7,159.3 728.0,153.0 727.3,153.0 726.7,153.0 726.0,157.7 725.3,153.8 724.7,153.8 724.0,153.8 723.3,155.3 722.7,156.3 722.0,157.1 721.3,151.7 720.7,151.7 720.0,151.7 719.3,152.8 718.7,152.8 718.0,152.5 717.3,152.5 716.7,152.5 716.0,154.8 715.3,152.4 714.7,152.4 714.0,152.4 713.3,157.7 712.7,157.7 712.0,158.6 711.3,158.6 710.7,153.8 710.0,151.7 709.3,151.7 708.7,151.7 708.0,155.0 707.3,151.5 706.7,151.5 706.0,151.5 705.3,151.5 704.7,151.5 704.0,151.5 703.3,152.5 702.7,152.9 702.0,153.7 701.3,153.7 700.7,151.0 700.0,149.3 699.3,149.3 698.7,149.3 698.0,149.9 697.3,150.4 696.7,156.0 696.0,156.0 695.3,153.4 694.7,153.4 694.0,153.4 693.3,153.5 692.7,154.5 692.0,154.5 691.3,154.5 690.7,156.2 690.0,156.2 689.3,152.3 688.7,152.3 688.0,152.3 687.3,157.5 686.7,156.3 686.0,156.3 685.3,156.3 684.7,159.7 684.0,159.7 683.3,161.7 682.7,159.4 682.0,159.4 681.3,159.4 680.7,159.8 680.0,159.5 679.3,159.5 678.7,159.5 678.0,160.2 677.3,161.5 676.7,163.1 676.0,161.5 675.3,153.3 674.7,153.3 674.0,153.3 673.3,152.3 672.7,152.3 672.0,152.3 671.3,155.8 670.7,160.0 670.0,159.9 669.3,159.9 668.7,159.9 668.0,160.6 667.3,161.5 666.7,161.9 666.0,161.9 665.3,153.8 664.7,153.8 664.0,153.8 663.3,170.4 662.7,170.4 662.0,156.6 661.3,156.6 660.7,156.6 660.0,154.0 659.3,154.0 658.7,154.0 658.0,153.3 657.3,153.3 656.7,153.3 656.0,153.4 655.3,153.4 654.7,168.2 654.0,156.0 653.3,156.0 652.7,156.0 652.0,158.4 651.3,159.5 650.7,159.9 650.0,159.9 649.3,152.1 648.7,152.1 648.0,152.1 647.3,153.2 646.7,153.2 646.0,151.2 645.3,150.9 644.7,150.9 644.0,150.9 643.3,152.5 642.7,150.9 642.0,150.6 641.3,150.6 640.7,150.6 640.0,154.6 639.3,154.6 638.7,153.1 638.0,153.1 637.3,153.1 636.7,154.8 636.0,154.8 635.3,163.4 634.7,156.1 634.0,156.1 633.3,156.1 632.7,157.5 632.0,153.4 631.3,153.4 630.7,153.4 630.0,151.6 629.3,151.6 628.7,151.6 628.0,161.0 627.3,161.0 626.7,163.5 626.0,156.3 625.3,156.3 624.7,156.3 624.0,156.0 623.3,156.0 622.7,156.0 622.0,158.4 621.3,159.2 620.7,155.7 620.0,155.7 619.3,154.0 618.7,154.0 618.0,154.0 617.3,154.2 616.7,154.2 616.0,154.3 615.3,154.8 614.7,155.3 614.0,155.6 613.3,154.5 612.7,154.5 612.0,154.5 611.3,161.8 610.7,164.7 610.0,155.2 609.3,155.2 608.7,155.2 608.0,158.5 607.3,155.0 606.7,153.5 606.0,153.5 605.3,153.5 604.7,164.3 604.0,152.8 603.3,152.8 602.7,152.7 602.0,152.7 601.3,152.7 600.7,157.9 600.0,157.9 599.3,157.9 598.7,156.4 598.0,156.4 597.3,156.4 596.7,157.6 596.0,161.5 595.3,163.6 594.7,160.9 594.0,160.9 593.3,160.9 592.7,161.5 592.0,161.1 591.3,159.7 590.7,159.7 590.0,156.9 589.3,156.9 588.7,156.9 588.0,160.7 587.3,162.9 586.7,163.4 586.0,164.4 585.3,164.4 584.7,163.8 584.0,163.8 583.3,163.8 582.7,165.8 582.0,165.8 581.3,155.1 580.7,155.1 580.0,155.1 579.3,157.1 578.7,154.8 578.0,154.2 577.3,154.2 576.7,154.2 576.0,155.3 575.3,165.5 574.7,156.5 574.0,156.5 573.3,156.5 572.7,157.2 572.0,160.9 571.3,160.9 570.7,162.8 570.0,155.5 569.3,155.5 568.7,155.5 568.0,155.8 567.3,162.0 566.7,162.0 566.0,162.0 565.3,164.8 564.7,164.7 564.0,164.7 563.3,164.7 562.7,165.5 562.0,161.7 561.3,161.7 560.7,161.7 560.0,162.6 559.3,159.8 558.7,159.8 558.0,159.8 557.3,157.4 556.7,156.8 556.0,156.8 555.3,156.8 554.7,158.0 554.0,157.5 553.3,157.5 552.7,153.5 552.0,152.2 551.3,152.2 550.7,152.2 550.0,153.3 549.3,153.9 548.7,158.1 548.0,159.2 547.3,158.6 546.7,158.6 546.0,158.6 545.3,154.6 544.7,154.6 544.0,154.6 543.3,158.8 542.7,159.0 542.0,162.0 541.3,161.1 540.7,161.1 540.0,160.7 539.3,160.7 538.7,160.7 538.0,162.3 537.3,162.3 536.7,160.4 536.0,160.4 535.3,160.4 534.7,163.2 534.0,167.4 533.3,155.3 532.7,155.3 532.0,155.3 531.3,160.1 530.7,161.6 530.0,161.6 529.3,161.6 528.7,162.8 528.0,162.8 527.3,162.8 526.7,162.2 526.0,161.1 525.3,159.0 524.7,159.0 524.0,159.0 523.3,153.8 522.7,153.8 522.0,153.8 521.3,154.0 520.7,154.5 520.0,154.5 519.3,154.7 518.7,160.3 518.0,161.8 517.3,161.8 516.7,161.8 516.0,164.7 515.3,165.7 514.7,165.7 514.0,165.7 513.3,168.1 512.7,168.6 512.0,168.6 511.3,173.6 510.7,159.6 510.0,159.6 509.3,159.6 508.7,160.2 508.0,161.6 507.3,169.6 506.7,161.0 506.0,161.0 505.3,161.0 504.7,162.9 504.0,162.9 503.3,162.9 502.7,162.7 502.0,161.5 501.3,160.7 500.7,160.7 500.0,160.7 499.3,160.8 498.7,166.1 498.0,166.1 497.3,166.1 496.7,167.2 496.0,170.4 495.3,170.4 494.7,166.4 494.0,166.4 493.3,166.4 492.7,169.9 492.0,164.2 491.3,164.2 490.7,160.7 490.0,160.4 489.3,158.1 488.7,158.1 488.0,158.1 487.3,159.6 486.7,160.5 486.0,160.5 485.3,169.0 484.7,166.8 484.0,166.8 483.3,166.8 482.7,164.3 482.0,164.2 481.3,164.2 480.7,158.7 480.0,158.7 479.3,158.7 478.7,160.1 478.0,161.2 477.3,161.2 476.7,154.2 476.0,153.5 475.3,153.5 474.7,151.1 474.0,151.1 473.3,151.1 472.7,151.5 472.0,157.5 471.3,157.5 470.7,154.2 470.0,154.2 469.3,154.2 468.7,155.1 468.0,155.0 467.3,149.5 466.7,149.5 466.0,149.5 465.3,150.2 464.7,150.5 464.0,150.7 463.3,150.7 462.7,150.7 462.0,150.9 461.3,151.9 460.7,154.0 460.0,154.0 459.3,154.0 458.7,154.6 458.0,154.6 457.3,157.0 456.7,157.8 456.0,157.8 455.3,157.8 454.7,154.3 454.0,154.3 453.3,154.3 452.7,153.6 452.0,153.2 451.3,153.2 450.7,153.2 450.0,156.5 449.3,156.5 448.7,155.9 448.0,154.0 447.3,154.0 446.7,154.0 446.0,152.0 445.3,152.0 444.7,152.0 444.0,157.9 443.3,157.9 442.7,158.3 442.0,155.3 441.3,155.3 440.7,155.3 440.0,153.3 439.3,153.3 438.7,153.3 438.0,153.4 437.3,155.5 436.7,155.1 436.0,155.1 435.3,154.7 434.7,154.7 434.0,153.6 433.3,153.6 432.7,153.6 432.0,154.0 431.3,154.0 430.7,154.0 430.0,156.1 429.3,156.1 428.7,157.1 428.0,153.8 427.3,153.8 426.7,153.8 426.0,160.9 425.3,153.4 424.7,153.4 424.0,153.2 423.3,153.2 422.7,151.8 422.0,151.8 421.3,151.8 420.7,156.7 420.0,155.7 419.3,151.0 418.7,150.0 418.0,150.0 417.3,150.0 416.7,149.7 416.0,149.7 415.3,149.7 414.7,150.1 414.0,150.1 413.3,151.2 412.7,151.2 412.0,154.0 411.3,153.9 410.7,153.9 410.0,151.3 409.3,151.3 408.7,151.2 408.0,151.2 407.3,151.2 406.7,151.2 406.0,157.3 405.3,158.1 404.7,160.1 404.0,161.2 403.3,155.8 402.7,155.8 402.0,155.8 401.3,156.4 400.7,153.6 400.0,152.8 399.3,152.3 398.7,152.3 398.0,152.0 397.3,152.0 396.7,151.6 396.0,151.6 395.3,151.6 394.7,153.5 394.0,153.5 393.3,155.5 392.7,154.9 392.0,150.9 391.3,150.9 390.7,150.6 390.0,150.6 389.3,150.6 388.7,153.0 388.0,153.0 387.3,157.8 386.7,157.8 386.0,155.9 385.3,155.9 384.7,155.9 384.0,155.3 383.3,155.3 382.7,153.4 382.0,153.4 381.3,153.4 380.7,157.7 380.0,157.9 379.3,152.7 378.7,152.7 378.0,152.7 377.3,153.2 376.7,158.6 376.0,160.3" fill="#3232c8"/><path d="M376.00 119.3V161.0M376.67 118.2V160.3M377.33 117.9V158.6M378.00 117.5V153.2M378.67 114.9V152.7M379.33 119.5V161.5M380.00 112.8V157.9M380.67 115.1V161.1M381.33 112.0V157.7M382.67 114.3V155.7M384.00 115.8V157.5M386.00 106.5V161.4M386.67 110.9V158.6M387.33 119.8V157.8M388.00 122.2V166.1M388.67 114.5V153.0M389.33 114.0V159.9M390.67 114.4V151.5M392.00 116.6V154.9M392.67 118.7V156.5M393.33 115.2V157.9M394.00 116.2V155.5M395.33 120.9V164.6M396.00 119.8V151.6M396.67 118.4V153.7M397.33 117.8V152.0M398.00 117.1V153.2M398.67 118.1V152.3M399.33 118.9V152.8M400.00 121.5V153.6M400.67 119.6V157.1M401.33 121.8V157.6M402.00 114.6V156.4M403.33 115.9V161.5M404.00 114.8V166.2M404.67 113.9V161.2M405.33 116.0V160.1M406.00 112.6V158.1M406.67 113.9V157.3M407.33 116.1V151.2M408.67 114.1V152.9M410.00 108.3V157.5M410.67 111.5V153.9M411.33 119.9V155.1M412.00 114.9V155.2M412.67 117.0V154.0M414.00 121.4V151.5M415.33 122.1V154.6M416.67 122.3V150.1M417.33 122.0V150.7M418.00 119.6V150.0M418.67 121.3V151.0M419.33 112.0V155.7M420.00 114.6V156.7M421.33 106.1V157.6M422.00 121.1V151.8M422.67 121.9V161.9M423.33 114.9V153.2M424.00 117.0V153.5M424.67 117.4V153.4M425.33 118.5V165.5M426.00 116.7V164.4M426.67 112.5V160.9M427.33 115.8V153.8M428.00 118.6V157.1M428.67 119.8V163.4M429.33 113.5V161.8M430.00 111.1V156.1M430.67 111.4V156.2M432.00 113.1V155.8M432.67 114.9V156.4M434.00 110.0V162.4M434.67 109.1V154.7M435.33 108.9V155.7M436.00 110.8V155.1M436.67 119.8V157.8M437.33 106.2V157.9M438.00 106.1V155.5M438.67 116.8V153.4M440.00 104.5V157.9M440.67 98.5V157.1M441.33 112.1V155.3M442.00 121.1V158.3M442.67 111.1V162.1M443.33 114.1V159.5M444.00 115.0V157.9M444.67 115.6V157.9M445.33 113.2V152.0M446.00 114.7V157.8M446.67 116.8V154.7M447.33 115.6V154.0M448.00 116.2V155.9M448.67 112.5V156.9M449.33 104.3V156.5M450.00 107.7V161.6M450.67 120.1V160.5M451.33 110.3V153.2M452.00 113.8V153.6M452.67 115.1V155.3M453.33 119.7V155.1M454.67 102.8V161.8M455.33 105.3V158.8M456.00 109.6V157.8M456.67 112.2V160.5M457.33 109.7V159.9M458.00 112.6V157.0M459.33 115.6V155.0M460.67 112.9V161.0M461.33 102.2V158.9M462.00 106.1V151.9M462.67 114.4V150.9M464.00 116.6V152.2M464.67 116.8V153.7M465.33 117.2V150.5M466.00 115.7V150.2M466.67 117.0V149.5M467.33 118.5V155.0M468.00 108.9V155.4M468.67 122.9V157.3M469.33 115.2V155.1M470.00 116.9V154.2M470.67 118.3V161.2M471.33 114.3V159.9M472.00 110.1V157.5M472.67 119.8V157.7M473.33 114.0V151.5M474.00 115.1V151.1M474.67 115.8V154.0M476.00 113.7V154.2M476.67 114.2V162.3M477.33 110.5V161.2M478.00 105.2V164.8M478.67 106.1V169.1M479.33 103.1V160.1M480.67 110.9V178.3M481.33 102.8V164.2M482.00 105.9V164.3M482.67 112.7V171.8M483.33 112.4V171.1M484.00 96.0V166.8M484.67 98.8V169.0M485.33 94.5V180.4M486.00 91.2V175.3M486.67 95.0V160.5M487.33 98.9V161.5M488.00 104.3V159.6M488.67 106.0V158.1M489.33 107.0V160.4M490.00 102.6V160.7M490.67 103.4V165.8M492.00 105.7V171.1M492.67 104.0V170.5M493.33 112.7V169.9M494.00 106.0V166.4M494.67 102.3V172.5M495.33 105.2V170.4M496.00 109.3V170.5M496.67 113.6V172.0M497.33 110.5V167.2M498.00 103.5V166.1M498.67 107.2V167.0M499.33 103.9V182.1M500.67 109.8V160.7M501.33 100.9V161.5M502.00 112.2V162.7M502.67 112.0V181.4M503.33 110.9V168.6M504.00 102.1V162.9M504.67 104.5V167.5M505.33 97.1V177.0M506.67 99.3V172.6M508.00 101.1V170.6M508.67 106.2V161.6M509.33 112.5V160.2M510.00 98.3V159.6M510.67 101.8V182.8M511.33 113.6V175.4M512.00 107.6V173.6M512.67 106.9V168.6M513.33 105.2V172.3M514.00 105.7V168.1M514.67 107.1V165.7M515.33 111.1V168.4M516.00 110.8V167.2M516.67 112.1V164.7M518.00 114.1V165.6M518.67 111.5V164.8M519.33 112.4V160.3M520.67 112.7V154.5M521.33 112.9V155.9M522.67 111.4V153.8M523.33 119.0V161.7M524.00 116.9V159.2M524.67 111.1V159.0M525.33 111.7V161.1M526.00 114.7V162.2M526.67 113.2V163.0M527.33 115.9V164.8M528.00 115.8V162.8M528.67 116.7V166.3M529.33 110.9V164.0M530.00 99.6V161.6M530.67 104.9V165.7M531.33 105.2V164.4M532.00 107.8V160.1M532.67 110.5V155.3M533.33 117.1V170.1M534.00 115.1V168.2M534.67 107.6V167.4M535.33 110.7V163.2M536.67 109.6V167.5M537.33 109.2V163.9M538.67 111.5V164.3M539.33 113.7V160.7M540.00 115.6V163.7M540.67 110.4V161.1M541.33 112.5V164.8M542.00 115.5V162.0M542.67 117.3V162.4M543.33 108.6V159.0M544.00 111.9V158.8M545.33 119.1V166.0M546.00 113.2V162.8M546.67 111.4V158.6M547.33 115.6V163.2M548.00 119.6V160.9M548.67 121.5V159.2M549.33 115.9V158.1M550.00 119.2V153.9M550.67 120.1V153.3M551.33 119.8V152.2M552.00 120.9V153.5M552.67 103.8V158.1M554.00 105.9V158.0M554.67 107.9V161.3M555.33 116.0V165.8M556.67 116.5V157.4M557.33 114.5V176.5M558.00 105.4V173.2M558.67 109.4V159.8M559.33 110.2V162.8M560.00 108.7V163.1M560.67 110.8V162.6M562.00 110.1V176.0M562.67 113.6V168.6M563.33 113.5V165.5M564.00 110.4V164.7M564.67 105.0V164.8M565.33 110.1V167.1M566.00 109.8V165.4M567.33 110.6V165.4M568.00 111.3V163.4M568.67 114.0V155.8M570.00 110.2V162.8M570.67 110.6V164.6M571.33 119.8V163.2M572.67 113.6V161.0M573.33 114.3V157.2M574.00 108.6V156.5M574.67 110.9V169.3M575.33 112.8V167.8M576.00 112.8V165.5M576.67 113.5V155.3M578.00 109.6V154.8M578.67 111.3V157.1M579.33 113.0V162.0M580.00 112.6V160.4M580.67 101.8V155.1M581.33 104.3V166.1M582.00 107.3V165.8M582.67 111.1V166.2M583.33 108.9V166.3M584.00 106.1V163.8M584.67 109.7V168.3M585.33 106.7V164.4M586.00 117.0V166.9M586.67 114.7V164.7M587.33 116.7V163.4M588.00 111.4V162.9M588.67 107.9V160.7M589.33 110.0V156.9M590.00 110.4V164.5M590.67 110.1V159.7M591.33 108.0V161.1M592.00 105.0V163.8M592.67 107.6V161.5M593.33 110.2V162.7M594.00 105.1V160.9M594.67 98.3V177.2M595.33 114.7V164.8M596.00 108.5V163.6M596.67 110.5V161.5M597.33 116.7V157.6M598.00 110.6V156.4M598.67 107.0V159.7M599.33 118.0V161.0M600.00 118.2V157.9M600.67 120.7V163.3M601.33 120.8V159.7M602.00 120.1V152.7M602.67 120.2V153.3M603.33 116.9V152.8M604.00 111.3V170.4M604.67 115.1V166.0M605.33 114.5V164.3M606.00 110.5V153.5M606.67 115.3V155.0M607.33 115.5V158.5M608.00 117.2V161.1M608.67 110.3V162.0M609.33 113.9V155.2M610.00 115.1V171.8M610.67 116.1V170.1M611.33 116.5V164.7M612.00 113.1V161.8M613.33 115.4V155.6M614.67 117.0V156.6M615.33 117.7V155.3M616.00 117.6V154.8M617.33 117.6V154.2M618.00 119.7V172.9M619.33 114.6V161.7M620.00 111.9V155.7M620.67 114.4V168.2M621.33 116.3V164.1M622.00 114.0V159.2M622.67 120.3V158.4M623.33 118.2V156.0M624.00 115.8V156.9M624.67 116.1V158.2M625.33 109.5V156.3M626.00 116.6V168.6M626.67 109.3V165.9M627.33 109.3V163.5M628.00 111.5V161.0M628.67 121.1V164.0M629.33 114.1V151.6M630.00 120.8V155.1M630.67 120.5V161.1M631.33 119.9V153.4M632.00 120.6V159.1M632.67 119.4V160.3M633.33 121.3V157.5M634.00 115.5V156.1M634.67 116.1V169.1M635.33 113.8V163.7M636.00 111.8V163.4M636.67 112.8V154.8M637.33 119.4V160.6M638.00 115.0V153.1M638.67 117.4V158.7M639.33 118.0V157.1M640.67 119.3V158.4M641.33 120.5V150.6M642.67 119.4V152.5M643.33 116.2V156.9M644.00 121.9V154.5M644.67 120.2V150.9M645.33 118.8V151.2M646.00 113.0V154.6M646.67 113.8V153.2M647.33 121.2V160.0M648.00 118.5V158.8M649.33 119.8V162.0M650.67 119.6V162.8M651.33 115.8V160.7M652.00 120.4V159.5M652.67 120.2V158.4M653.33 117.4V156.0M654.00 117.0V175.5M654.67 121.2V169.1M655.33 117.1V168.2M656.00 115.6V153.4M656.67 114.2V160.1M658.00 111.4V163.4M658.67 118.6V161.1M659.33 108.2V154.0M660.00 117.1V163.5M660.67 104.4V164.5M661.33 106.5V156.6M662.00 109.5V175.3M663.33 112.4V174.9M664.00 116.8V171.7M664.67 116.7V153.8M665.33 117.6V166.4M666.00 108.5V161.9M666.67 110.7V166.1M667.33 101.5V162.6M668.00 115.4V161.5M668.67 101.8V160.6M669.33 106.1V159.9M670.00 110.7V160.0M670.67 118.1V163.4M671.33 111.7V160.7M672.00 120.8V155.8M672.67 119.7V152.3M673.33 119.2V157.4M674.00 116.0V154.3M675.33 118.8V161.5M676.00 118.0V165.6M676.67 116.6V163.1M677.33 118.2V164.8M678.00 114.8V161.5M678.67 111.7V160.2M680.00 113.1V160.5M680.67 115.0V160.5M681.33 113.3V159.8M682.00 119.6V159.4M682.67 121.1V162.9M683.33 114.5V163.3M684.00 118.8V161.7M685.33 113.0V159.7M686.00 113.5V156.3M686.67 118.9V157.5M687.33 119.5V160.6M688.00 108.0V158.6M688.67 109.3V152.3M689.33 113.3V161.7M690.00 115.0V158.3M691.33 113.4V156.8M692.00 114.6V154.5M692.67 115.7V155.3M693.33 117.9V155.6M694.00 115.4V153.5M695.33 116.6V156.7M696.00 116.0V156.0M696.67 118.9V158.4M697.33 118.4V161.9M698.00 120.5V150.4M698.67 123.9V149.9M699.33 120.4V149.3M700.00 115.5V151.0M700.67 118.0V155.6M701.33 118.4V154.9M702.00 111.2V153.7M702.67 114.7V154.3M703.33 119.3V152.9M704.00 120.4V152.5M705.33 119.3V152.4M706.00 111.0V152.7M706.67 111.6V151.5M707.33 113.8V155.6M708.00 114.1V155.6M708.67 115.7V155.0M709.33 114.1V151.7M710.00 120.4V153.8M710.67 115.5V162.1M711.33 111.2V159.9M712.67 112.2V159.9M713.33 113.9V157.7M714.00 114.9V158.1M715.33 102.8V161.2M716.00 106.2V160.0M716.67 108.8V154.8M717.33 110.5V152.5M718.00 112.9V160.1M718.67 115.1V154.1M719.33 113.4V152.8M720.00 115.9V153.1M720.67 115.8V151.7M721.33 119.1V159.4M722.00 120.4V157.5M722.67 120.3V157.1M723.33 115.8V156.3M724.00 113.8V155.3M724.67 115.1V153.8M725.33 116.6V160.7M726.67 116.9V159.3M728.00 120.2V159.3M728.67 115.0V161.2M729.33 114.5V163.3M730.67 114.1V161.7M731.33 114.4V160.5M732.00 106.7V160.2M732.67 107.4V167.3M733.33 109.7V166.2M734.00 113.5V167.5M734.67 89.8V165.8M735.33 94.1V167.4M736.00 97.8V164.1M736.67 113.3V164.6M737.33 98.7V163.3M738.00 116.5V166.2M738.67 116.1V156.6M739.33 116.2V162.4M740.00 97.6V166.6M740.67 115.4V177.1M741.33 105.0V164.2M742.00 107.1V166.9M742.67 109.1V167.4M744.00 107.4V158.0M744.67 108.9V156.9M746.00 108.4V160.7M746.67 100.4V172.4M747.33 105.0V168.1M748.00 107.1V163.9M748.67 109.3V163.2M749.33 117.9V160.5M750.00 111.7V159.8M750.67 101.1V156.2M751.33 104.5V157.1M752.00 107.8V162.4M752.67 109.5V162.8M753.33 112.3V169.3M754.67 113.0V165.7M755.33 105.0V164.1M756.00 107.7V163.9M756.67 110.1V162.9M757.33 117.2V163.8M758.00 115.1V165.0M759.33 113.7V163.9M760.00 111.8V164.2M760.67 102.6V165.8M761.33 106.3V168.0M762.00 112.1V160.6M762.67 112.7V166.6M763.33 112.2V163.0M764.00 103.0V162.0M764.67 99.6V160.5M765.33 100.3V162.2M766.00 102.8V162.7M766.67 113.0V173.0M767.33 113.8V173.0M768.00 104.6V170.1M768.67 105.2V169.4M769.33 105.8V167.4M770.00 107.6V171.2M770.67 105.2V168.1M771.33 104.3V168.2M772.67 104.5V164.4M773.33 107.1V163.9M774.00 109.3V168.0M774.67 108.8V166.3M775.33 109.6V167.6M776.00 107.7V164.4M776.67 103.1V166.3M777.33 112.1V176.8M778.67 101.7V173.8M779.33 95.5V172.1M780.00 89.8V169.0M780.67 95.6V160.2M781.33 99.1V163.2M782.00 99.8V169.8M783.33 100.1V162.4M784.00 99.0V160.3M784.67 101.4V182.8M785.33 110.7V177.9M786.00 98.5V176.4M787.33 105.6V168.6M788.67 104.9V170.9M789.33 101.7V170.3M790.00 104.6V167.2M790.67 114.3V169.4M791.33 114.4V161.6M792.00 101.3V160.8M793.33 103.5V167.2M794.00 113.2V170.0M794.67 112.7V168.3M795.33 106.6V169.1M796.00 107.3V172.3M796.67 113.1V170.1M797.33 97.3V166.8M798.00 115.2V157.4M798.67 117.5V163.5M799.33 117.4V162.1M800.00 119.8V156.7M800.67 120.2V159.5M802.00 118.5V160.0M803.33 114.5V156.9M804.00 117.5V167.1M804.67 110.4V153.3M805.33 118.6V158.9M806.00 115.8V151.9M806.67 120.5V155.6M807.33 118.9V156.0M808.00 119.2V160.7M808.67 113.5V161.0M809.33 114.1V158.7M810.00 115.1V160.5M810.67 105.5V154.5M811.33 114.9V160.9M812.00 115.5V161.9M812.67 111.4V165.3M813.33 117.6V164.2M814.00 109.5V163.3M815.33 108.5V156.4M816.00 117.5V159.5M816.67 113.0V157.3M817.33 109.6V157.0M818.00 109.6V163.3M819.33 113.6V167.3M820.00 114.8V163.5M820.67 116.5V166.6M821.33 117.2V166.8M822.00 113.2V162.7M822.67 113.8V156.0M823.33 115.5V160.8M824.67 114.9V158.8M826.00 115.7V159.2M826.67 108.3V161.7M828.00 117.8V161.2M828.67 119.2V160.2M829.33 110.7V159.1M830.67 110.2V159.3M831.33 108.5V173.9M832.00 117.2V171.8M832.67 110.8V170.1M833.33 112.7V168.0M834.00 112.8V166.4M834.67 109.5V158.8M835.33 109.0V159.3M836.00 97.9V165.9M836.67 99.5V158.6M837.33 101.6V158.3M838.00 104.2V165.8M838.67 113.1V165.9M839.33 112.7V158.1M840.00 102.8V160.5M840.67 89.8V165.0M841.33 92.2V162.3M842.00 114.3V161.5M842.67 103.7V161.2M844.00 105.2V170.4M844.67 102.0V166.8M845.33 105.3V164.2M846.00 116.0V170.5M846.67 104.7V165.8M847.33 106.0V163.6M848.00 107.8V179.3M848.67 106.8V155.5M849.33 110.7V162.5M850.00 113.3V156.5M850.67 114.6V152.8M851.33 116.6V160.2M852.00 115.4V159.6M852.67 120.3V154.4M853.33 111.8V151.8M854.00 115.6V155.9M854.67 114.9V159.6M855.33 117.0V160.1M856.00 113.3V162.0M856.67 112.4V165.5M857.33 112.1V163.8M858.00 114.9V162.6M859.33 111.9V163.7M860.00 111.7V162.2M861.33 114.1V160.6M862.00 115.2V165.0M862.67 109.5V163.8M863.33 109.7V157.2M864.00 115.5V165.5M864.67 110.8V163.6M865.33 116.6V166.3M866.00 109.0V163.3M866.67 102.6V160.0M867.33 106.1V161.6M868.00 107.0V161.8M868.67 105.5V160.0M869.33 106.4V158.1M870.67 100.3V172.1M871.33 103.4V169.6M872.00 106.4V168.1M872.67 104.6V164.7M873.33 107.8V173.2M874.00 111.1V169.3M875.33 109.4V164.4M876.00 112.3V167.8M876.67 113.9V165.6M877.33 111.1V162.9M878.00 111.8V163.5M878.67 114.3V155.5M879.33 118.3V164.3M880.00 111.4V165.5M881.33 109.8V156.7M882.00 117.6V157.2M882.67 113.0V176.5M883.33 112.0V156.4M884.00 112.4V162.8M884.67 114.5V166.3M885.33 114.7V160.0M886.00 105.8V158.1M886.67 94.2V159.9M887.33 98.4V158.5M888.00 103.8V158.1M888.67 113.5V163.7M889.33 97.0V164.9M890.00 99.3V161.2M890.67 102.2V169.8M892.00 100.2V181.3M892.67 102.4V175.2M893.33 93.4V173.0M894.00 95.4V169.0M894.67 100.3V167.1M895.33 113.0V167.6M896.00 105.1V161.5M897.33 103.8V161.4M898.67 114.1V172.4M899.33 108.7V168.3M900.00 91.3V166.8M900.67 96.6V182.8M901.33 103.3V181.3M902.00 105.6V156.7M902.67 108.8V162.2M904.00 113.3V165.3M904.67 112.9V162.6M905.33 110.6V162.4M906.00 115.8V161.0M906.67 110.1V160.3M907.33 110.6V161.7M908.00 110.5V160.2M908.67 111.2V156.5M909.33 94.0V156.0M910.00 99.5V156.1M910.67 116.5V156.4M911.33 107.8V164.3M912.00 109.3V161.5M913.33 109.3V166.5M914.00 108.2V166.8M914.67 109.4V161.0M915.33 112.2V160.9M916.00 117.6V161.0M916.67 117.1V157.5M917.33 105.0V156.2M918.00 107.1V163.1M918.67 110.0V168.4M919.33 98.0V164.7M920.00 103.3V157.8M921.33 104.3V157.2M922.00 107.3V157.1M922.67 112.4V159.9M923.33 108.6V160.8M924.00 109.0V156.4M924.67 105.6V155.7M925.33 111.6V164.8M926.00 117.1V164.0M926.67 107.7V162.1M927.33 116.9V162.0M928.00 117.4V172.2M928.67 117.8V168.6M929.33 116.8V167.7M930.67 109.9V163.3M932.00 110.1V165.2M932.67 118.5V162.9M933.33 116.3V162.3M934.00 115.2V164.4M935.33 115.6V162.6M936.00 103.0V169.7M936.67 115.5V167.9M937.33 110.8V157.2M938.00 108.3V164.4M938.67 91.5V170.5M939.33 97.0V169.6M940.00 101.7V168.1M941.33 103.7V169.8M942.00 99.8V170.8M942.67 100.5V168.2M944.00 113.5V172.7M944.67 89.8V160.5M945.33 91.3V173.8M946.00 97.6V178.3M946.67 99.1V182.8M948.00 107.5V174.4M948.67 106.9V169.6M950.00 105.9V171.9M950.67 107.7V171.7M951.33 109.6V168.0M952.67 104.5V159.3M953.33 113.8V167.3M954.00 104.8V165.4M954.67 89.8V161.2M955.33 96.2V164.1M956.00 101.1V163.9M956.67 111.1V161.0M957.33 109.3V159.9M958.00 112.0V167.8M958.67 112.4V166.5M959.33 107.1V156.6M960.00 109.9V168.0M960.67 109.9V166.0M961.33 110.2V156.1M962.00 111.0V157.1M962.67 103.3V176.8M963.33 103.7V171.8M964.00 107.4V167.3M964.67 110.9V165.6M965.33 116.8V162.7M966.00 108.0V161.9M966.67 109.2V162.4M967.33 110.2V161.8M968.00 112.4V155.6M968.67 114.5V163.2M969.33 113.0V160.5M970.00 115.8V159.1M970.67 115.5V158.8M971.33 115.4V163.7M972.67 108.3V155.3M974.00 111.8V155.0M974.67 113.0V161.9M975.33 112.3V160.4M976.00 113.6V153.8M977.33 111.2V160.8M978.00 115.6V161.3M978.67 116.2V168.2M979.33 116.8V151.9M980.00 117.6V159.2M980.67 113.6V152.9M981.33 121.6V158.5M982.00 114.8V152.2M982.67 116.2V166.9M983.33 116.8V173.0M984.00 117.4V166.7M984.67 118.4V164.0M985.33 119.0V163.1M986.67 114.3V161.1M987.33 112.1V159.0M988.00 114.3V169.6M988.67 113.5V152.6M989.33 113.4V162.6M990.00 115.6V159.8M990.67 114.5V159.0M991.33 119.4V171.5M992.00 110.1V165.7M992.67 112.4V163.7M994.00 117.5V161.5M995.33 115.1V157.9M996.00 117.2V151.1M996.67 120.7V151.8M997.33 118.6V153.0M998.00 121.7V157.4M998.67 110.4V164.9M999.33 123.6V154.2M1000.00 114.2V153.3M1000.67 116.2V150.9M1001.33 119.1V151.9M1002.00 122.9V147.5M1002.67 125.8V146.4M1003.33 123.5V145.4M1004.00 128.6V144.6M1004.67 129.4V146.0M1005.33 127.9V145.1M1006.00 128.6V142.1M1007.33 131.2V142.4M1008.00 130.5V142.1M1008.67 130.2V142.6M1009.33 131.8V141.7M1010.67 131.4V142.1M1012.00 131.4V144.5M1012.67 129.5V140.8M1013.33 130.2V141.4M1014.67 131.4V140.7M1015.33 132.6V141.7M1016.00 132.9V141.6M1016.67 131.7V141.2M1018.00 130.9V141.8M1018.67 131.4V143.8M1019.33 129.1V144.8M1020.00 126.8V145.7M1020.67 126.2V145.4M1022.00 128.4V146.9M1023.33 128.7V142.5M1024.00 129.3V142.9M1024.67 129.2V144.7M1025.33 130.3V145.0M1026.00 128.2V144.2M1026.67 130.7V143.2M1027.33 128.7V142.5M1028.00 130.0V143.1M1028.67 131.9V141.7M1029.33 131.7V140.5M1030.00 132.9V140.0M1030.67 133.0V139.5M1032.00 133.1V139.6M1032.67 133.4V139.1M1034.00 134.3V139.0M1034.67 133.1V138.4M1035.33 133.5V139.5M1036.00 133.6V139.4M1036.67 134.0V139.0M1037.33 133.4V138.3M1038.67 134.0V138.9M1039.33 134.0V140.0M1040.00 133.6V139.4M1040.67 133.3V139.4M1041.33 133.6V138.4M1042.67 134.2V139.0M1043.33 133.2V139.2M1044.67 133.2V140.2M1045.33 133.4V140.1M1046.00 133.7V138.6M1047.33 133.7V139.0M1048.00 133.7V141.6M1048.67 132.6V139.7M1049.33 133.2V139.9M1050.67 126.3V150.6M1051.33 120.8V151.3M1052.00 108.1V160.3M1052.67 104.1V172.4M1054.00 94.2V182.8M1054.67 98.6V177.3M1055.33 100.5V158.8M1056.00 112.3V161.6M1056.67 111.9V165.3M1057.33 103.5V161.3M1058.00 105.2V159.0M1059.33 113.0V158.0M1060.00 112.6V157.8M1060.67 109.2V168.5M1061.33 112.9V158.5M1062.00 114.0V160.5M1062.67 112.2V160.3M1064.00 114.5V161.9M1064.67 109.4V158.4M1065.33 114.6V171.9M1066.00 92.1V157.9M1066.67 95.7V157.9M1067.33 99.1V168.8M1068.00 105.2V169.9M1068.67 107.8V175.2M1070.00 101.7V172.0M1070.67 105.4V169.1M1071.33 111.6V170.2M1072.00 102.1V160.3M1073.33 105.7V171.7M1074.00 112.6V166.6M1074.67 113.7V178.7M1075.33 115.9V171.5M1076.00 103.2V168.1M1076.67 104.8V166.5M1077.33 108.9V168.8M1078.00 110.1V167.3M1078.67 108.0V163.0M1079.33 110.1V163.2M1080.00 109.0V161.5M1080.67 111.6V163.7M1081.33 111.6V163.9M1082.00 114.6V162.8M1082.67 115.5V162.6M1083.33 117.0V159.2M1084.67 110.2V168.3M1086.00 119.1V169.1M1086.67 111.4V162.0M1087.33 115.1V161.1M1088.00 112.9V158.9M1088.67 115.5V157.9M1090.00 115.4V156.7M1090.67 117.6V168.4M1091.33 118.7V164.6M1092.00 114.6V159.0M1092.67 115.0V161.1M1093.33 111.8V163.3M1094.67 96.3V177.4M1095.33 90.4V173.0M1096.00 95.4V165.8M1096.67 101.6V164.2M1097.33 103.6V162.9M1098.67 114.8V176.2M1099.33 116.5V164.5M1100.67 108.5V165.2M1101.33 104.5V162.1M1102.00 105.8V161.5M1102.67 106.8V182.8M1103.33 112.3V159.3M1104.00 112.8V170.3M1104.67 113.0V165.4M1105.33 114.1V170.9M1106.67 115.2V161.0M1107.33 106.6V157.8M1108.00 109.1V166.5M1108.67 103.7V165.9M1109.33 101.0V161.3M1110.67 92.9V169.0M1111.33 98.1V172.9M1112.00 114.8V170.4M1112.67 95.4V166.3M1113.33 110.8V165.5M1114.00 110.0V162.4M1114.67 110.4V178.0M1115.33 98.0V173.0M1116.00 116.1V170.6M1116.67 114.1V158.9M1117.33 112.0V159.4M1118.00 110.9V158.5M1118.67 104.2V161.0M1119.33 107.2V172.1M1120.00 105.6V160.2M1120.67 107.0V161.2M1121.33 113.9V161.4M1122.00 113.5V158.7M1122.67 111.5V166.7M1123.33 113.1V161.6M1124.00 113.9V165.0M1124.67 99.0V162.9M1125.33 101.5V168.3M1126.00 101.9V164.2M1126.67 103.3V161.6M1127.33 114.1V158.2M1128.00 115.1V165.2M1128.67 114.7V159.6M1129.33 113.3V160.1M1130.00 112.6V158.5M1130.67 96.6V164.0M1131.33 101.4V163.2M1132.00 114.7V182.8M1133.33 111.1V167.9M1134.00 113.8V162.6M1134.67 109.7V162.0M1135.33 112.5V170.7M1136.00 112.2V164.7M1136.67 114.3V162.7M1137.33 115.6V153.3M1138.00 116.0V154.1M1138.67 110.0V176.6M1139.33 110.3V172.6M1140.00 112.9V168.3M1140.67 114.0V173.5M1141.33 103.5V169.0M1142.00 119.3V170.1M1142.67 119.2V168.3M1143.33 115.4V164.7M1144.00 112.2V161.3M1145.33 118.3V163.6M1146.00 114.4V164.2M1147.33 116.9V162.2M1148.00 116.6V161.7M1148.67 113.8V158.8M1149.33 117.8V159.3M1150.00 113.0V160.7M1151.33 108.3V172.6M1152.00 118.0V169.5M1152.67 115.9V165.0M1153.33 111.1V160.9M1154.00 115.6V157.6M1155.33 112.9V155.8M1156.00 112.3V159.7M1156.67 101.9V157.3M1157.33 115.9V162.1M1158.00 115.6V163.6M1158.67 111.4V165.6M1159.33 111.6V168.6M1160.00 110.7V159.3M1160.67 110.9V153.6M1161.33 114.2V157.7M1162.00 115.0V157.6M1162.67 108.9V156.8M1163.33 111.1V158.6M1164.00 107.5V159.9M1164.67 107.6V155.2M1165.33 112.0V163.6M1166.67 101.2V161.4M1167.33 106.1V162.2M1168.00 105.5V172.6M1168.67 110.5V158.7M1169.33 107.8V157.9M1170.00 108.2V166.8M1171.33 109.2V167.6M1172.00 112.1V168.1M1173.33 101.1V166.1M1174.67 105.5V164.4M1175.33 108.0V164.1M1176.00 109.0V170.2M1176.67 102.0V170.7M1177.33 112.8V169.3M1178.00 101.1V166.5M1179.33 92.7V170.0M1180.00 96.1V164.8M1181.33 99.5V171.2M1182.00 95.8V170.4M1182.67 98.0V158.5M1183.33 115.1V166.9M1184.00 113.8V165.2M1184.67 114.6V165.7M1185.33 113.7V162.7M1186.67 116.0V163.3M1187.33 108.7V159.3M1188.00 105.0V159.1M1188.67 106.2V176.4M1189.33 108.3V175.3M1190.00 110.2V170.7M1190.67 111.0V167.3M1191.33 107.0V163.6M1192.00 108.4V162.1M1192.67 112.6V164.1M1194.00 115.9V161.3M1194.67 107.7V159.5M1195.33 109.6V166.2M1196.00 102.8V164.3M1196.67 98.8V163.6M1197.33 102.1V158.9M1198.00 104.5V163.3M1198.67 103.3V177.1M1199.33 94.0V172.5M1200.00 98.6V170.1M1200.67 102.7V167.8M1202.00 105.2V165.9M1202.67 103.5V167.8M1203.33 106.0V167.5M1204.67 108.4V168.0M1205.33 105.6V161.1M1206.00 113.1V155.4M1206.67 119.7V150.6M1207.33 124.6V148.8M1208.00 127.9V143.6M1208.67 129.5V144.6M1209.33 130.8V144.0M1210.00 126.5V143.4M1210.67 128.2V141.1M1211.33 130.1V140.7M1212.00 130.9V142.0M1212.67 131.7V141.5M1213.33 132.1V143.5M1214.00 132.3V141.1M1214.67 132.3V140.6M1215.33 131.8V140.2M1216.67 131.6V140.0M1219.33 128.9V140.7M1220.67 130.3V140.4M1222.00 131.3V140.0M1223.33 131.4V140.1M1224.00 132.8V140.6M1225.33 128.6V140.8M1226.67 131.2V140.9M1227.33 131.4V140.8M1230.00 132.3V141.1M1230.67 132.0V142.0M1231.33 130.7V143.5M1232.00 129.1V144.1M1232.67 128.9V148.5M1233.33 128.1V148.8M1234.67 128.1V147.2M1235.33 124.4V146.2M1236.67 126.1V147.3M1237.33 126.0V146.7M1238.00 127.0V147.3M1238.67 129.5V146.2M1239.33 129.7V144.2M1240.00 130.8V143.3M1240.67 129.1V142.2M1241.33 130.7V140.8M1242.00 131.7V141.1M1243.33 133.9V139.7M1244.00 132.9V138.7M1245.33 132.9V139.8M1246.00 134.9V139.1M1246.67 134.4V138.3M1247.33 135.0V137.7M1248.00 135.1V137.3M1252.00 135.6V137.4" stroke="#3232c8" stroke-width="0.8" fill="none"/><polygon points="376.0,130.5 376.7,130.5 377.3,130.4 378.0,129.7 378.7,129.5 379.3,129.6 380.0,130.2 380.7,130.2 381.3,130.3 382.0,130.3 382.7,130.3 383.3,129.9 384.0,129.9 384.7,130.5 385.3,130.8 386.0,130.8 386.7,130.9 387.3,130.9 388.0,130.9 388.7,130.7 389.3,130.5 390.0,130.5 390.7,130.6 391.3,130.6 392.0,130.6 392.7,130.6 393.3,130.7 394.0,131.1 394.7,131.1 395.3,131.1 396.0,130.4 396.7,130.7 397.3,130.7 398.0,130.7 398.7,130.6 399.3,130.6 400.0,130.6 400.7,130.7 401.3,130.7 402.0,130.7 402.7,130.3 403.3,130.3 404.0,130.6 404.7,130.6 405.3,130.6 406.0,130.6 406.7,130.6 407.3,130.5 408.0,130.9 408.7,130.9 409.3,130.9 410.0,130.8 410.7,131.3 411.3,131.4 412.0,131.4 412.7,131.4 413.3,131.3 414.0,131.0 414.7,131.6 415.3,131.6 416.0,131.6 416.7,131.3 417.3,131.2 418.0,131.2 418.7,131.1 419.3,131.1 420.0,131.1 420.7,131.1 421.3,130.9 422.0,130.9 422.7,130.5 423.3,130.5 424.0,130.5 424.7,130.5 425.3,130.4 426.0,130.4 426.7,130.0 427.3,130.1 428.0,130.1 428.7,130.1 429.3,129.9 430.0,129.6 430.7,129.6 431.3,130.0 432.0,130.0 432.7,130.0 433.3,129.9 434.0,129.9 434.7,129.3 435.3,129.7 436.0,129.9 436.7,129.9 437.3,130.1 438.0,130.1 438.7,130.1 439.3,129.9 440.0,130.2 440.7,130.2 441.3,130.4 442.0,130.4 442.7,130.4 443.3,129.9 444.0,130.2 444.7,130.3 445.3,130.3 446.0,130.3 446.7,130.3 447.3,130.4 448.0,130.4 448.7,130.4 449.3,130.4 450.0,130.4 450.7,130.1 451.3,130.1 452.0,130.1 452.7,129.8 453.3,129.7 454.0,129.9 454.7,129.9 455.3,129.9 456.0,129.7 456.7,129.7 457.3,129.6 458.0,130.5 458.7,130.5 459.3,130.5 460.0,130.4 460.7,130.6 461.3,130.6 462.0,130.7 462.7,130.7 463.3,131.1 464.0,131.2 464.7,131.2 465.3,131.2 466.0,131.3 466.7,131.3 467.3,131.3 468.0,131.1 468.7,131.1 469.3,131.1 470.0,131.2 470.7,131.3 471.3,131.3 472.0,131.3 472.7,131.0 473.3,131.0 474.0,131.0 474.7,130.7 475.3,130.6 476.0,130.1 476.7,129.8 477.3,129.4 478.0,128.9 478.7,128.6 479.3,128.6 480.0,128.6 480.7,128.4 481.3,128.2 482.0,128.2 482.7,128.2 483.3,128.0 484.0,128.0 484.7,128.0 485.3,127.7 486.0,127.7 486.7,127.5 487.3,128.0 488.0,128.0 488.7,128.0 489.3,128.0 490.0,127.6 490.7,128.2 491.3,128.3 492.0,128.3 492.7,128.3 493.3,127.9 494.0,128.3 494.7,128.3 495.3,128.3 496.0,127.9 496.7,128.2 497.3,128.2 498.0,128.2 498.7,128.1 499.3,127.8 500.0,127.7 500.7,127.7 501.3,127.1 502.0,127.2 502.7,127.2 503.3,127.4 504.0,127.4 504.7,127.4 505.3,127.2 506.0,127.2 506.7,127.2 507.3,127.0 508.0,127.6 508.7,127.6 509.3,127.6 510.0,127.4 510.7,127.5 511.3,127.5 512.0,128.4 512.7,128.4 513.3,128.5 514.0,128.9 514.7,128.9 515.3,128.9 516.0,128.8 516.7,128.8 517.3,128.9 518.0,128.9 518.7,129.5 519.3,129.9 520.0,129.9 520.7,129.9 521.3,129.6 522.0,129.6 522.7,129.6 523.3,129.9 524.0,129.9 524.7,129.9 525.3,129.6 526.0,129.2 526.7,129.2 527.3,129.1 528.0,129.3 528.7,129.5 529.3,129.5 530.0,129.5 530.7,129.1 531.3,129.1 532.0,129.1 532.7,129.0 533.3,129.4 534.0,129.4 534.7,129.4 535.3,129.3 536.0,129.5 536.7,129.5 537.3,129.5 538.0,129.2 538.7,129.4 539.3,129.4 540.0,129.8 540.7,129.8 541.3,129.8 542.0,129.8 542.7,129.8 543.3,129.7 544.0,129.7 544.7,130.2 545.3,130.4 546.0,130.4 546.7,130.4 547.3,130.4 548.0,130.4 548.7,130.4 549.3,130.7 550.0,130.7 550.7,130.7 551.3,130.6 552.0,130.6 552.7,130.0 553.3,130.0 554.0,130.0 554.7,129.7 555.3,129.3 556.0,129.2 556.7,128.7 557.3,128.6 558.0,128.2 558.7,128.4 559.3,128.4 560.0,128.7 560.7,128.7 561.3,128.9 562.0,128.9 562.7,128.9 563.3,128.9 564.0,129.1 564.7,129.4 565.3,129.4 566.0,129.4 566.7,129.6 567.3,129.6 568.0,129.6 568.7,129.2 569.3,129.2 570.0,129.9 570.7,129.9 571.3,129.9 572.0,129.6 572.7,129.6 573.3,129.6 574.0,129.5 574.7,129.4 575.3,129.6 576.0,129.7 576.7,129.8 577.3,129.8 578.0,129.8 578.7,129.7 579.3,129.7 580.0,129.5 580.7,129.5 581.3,128.9 582.0,128.9 582.7,128.9 583.3,128.7 584.0,128.6 584.7,128.6 585.3,128.6 586.0,128.1 586.7,128.3 587.3,128.3 588.0,128.3 588.7,128.1 589.3,128.7 590.0,128.7 590.7,128.7 591.3,128.5 592.0,128.5 592.7,128.8 593.3,129.2 594.0,129.2 594.7,129.2 595.3,129.1 596.0,129.1 596.7,129.1 597.3,128.6 598.0,128.9 598.7,129.1 599.3,129.9 600.0,130.6 600.7,130.6 601.3,130.6 602.0,130.5 602.7,130.5 603.3,130.5 604.0,130.5 604.7,130.3 605.3,130.2 606.0,130.2 606.7,130.2 607.3,130.1 608.0,130.1 608.7,129.9 609.3,129.9 610.0,129.9 610.7,129.9 611.3,129.9 612.0,129.9 612.7,129.9 613.3,129.9 614.0,129.7 614.7,129.6 615.3,129.6 616.0,129.5 616.7,129.5 617.3,129.5 618.0,129.5 618.7,129.6 619.3,129.9 620.0,130.0 620.7,130.6 621.3,130.6 622.0,130.6 622.7,130.3 623.3,130.4 624.0,130.5 624.7,130.5 625.3,130.5 626.0,130.2 626.7,130.4 627.3,130.4 628.0,130.4 628.7,130.5 629.3,130.5 630.0,130.7 630.7,130.7 631.3,130.7 632.0,130.4 632.7,130.4 633.3,130.4 634.0,130.5 634.7,130.7 635.3,130.7 636.0,130.7 636.7,130.6 637.3,130.6 638.0,130.6 638.7,130.4 639.3,130.4 640.0,130.9 640.7,130.9 641.3,130.9 642.0,131.0 642.7,131.0 643.3,131.2 644.0,131.3 644.7,131.3 645.3,131.3 646.0,131.2 646.7,130.7 647.3,130.9 648.0,131.3 648.7,131.3 649.3,131.3 650.0,131.2 650.7,131.2 651.3,130.7 652.0,130.6 652.7,130.6 653.3,130.5 654.0,130.6 654.7,130.6 655.3,130.6 656.0,130.0 656.7,130.2 657.3,130.2 658.0,130.2 658.7,129.7 659.3,129.7 660.0,129.1 660.7,129.3 661.3,129.4 662.0,129.4 662.7,129.4 663.3,129.1 664.0,129.1 664.7,129.9 665.3,129.9 666.0,129.9 666.7,129.6 667.3,129.5 668.0,129.6 668.7,129.8 669.3,129.8 670.0,129.8 670.7,129.8 671.3,130.5 672.0,130.5 672.7,130.5 673.3,130.2 674.0,130.4 674.7,130.4 675.3,130.4 676.0,130.7 676.7,130.7 677.3,130.7 678.0,130.4 678.7,130.4 679.3,130.4 680.0,130.6 680.7,130.6 681.3,130.6 682.0,130.5 682.7,130.1 683.3,130.1 684.0,130.1 684.7,130.1 685.3,130.4 686.0,130.4 686.7,130.4 687.3,130.0 688.0,130.0 688.7,129.9 689.3,130.7 690.0,130.7 690.7,130.7 691.3,130.4 692.0,130.6 692.7,131.0 693.3,131.0 694.0,131.3 694.7,131.3 695.3,131.3 696.0,131.1 696.7,131.1 697.3,131.2 698.0,131.5 698.7,131.5 699.3,131.5 700.0,131.3 700.7,131.2 701.3,131.2 702.0,131.2 702.7,131.1 703.3,131.0 704.0,131.3 704.7,131.3 705.3,131.3 706.0,131.2 706.7,131.0 707.3,131.0 708.0,130.6 708.7,130.3 709.3,130.3 710.0,130.2 710.7,129.9 711.3,130.0 712.0,130.0 712.7,130.0 713.3,130.4 714.0,130.4 714.7,130.4 715.3,130.3 716.0,129.8 716.7,129.8 717.3,130.2 718.0,130.2 718.7,130.2 719.3,130.0 720.0,130.4 720.7,130.4 721.3,130.4 722.0,130.3 722.7,130.2 723.3,130.4 724.0,130.4 724.7,130.4 725.3,130.6 726.0,130.6 726.7,130.6 727.3,130.3 728.0,129.9 728.7,129.9 729.3,129.9 730.0,129.9 730.7,129.7 731.3,129.7 732.0,129.3 732.7,128.7 733.3,128.7 734.0,128.7 734.7,128.7 735.3,128.3 736.0,128.4 736.7,128.4 737.3,128.6 738.0,128.6 738.7,128.7 739.3,128.7 740.0,128.8 740.7,128.9 741.3,128.9 742.0,129.0 742.7,129.0 743.3,129.0 744.0,128.4 744.7,128.7 745.3,129.0 746.0,129.0 746.7,129.7 747.3,129.7 748.0,129.7 748.7,129.8 749.3,129.8 750.0,129.8 750.7,129.6 751.3,129.1 752.0,129.7 752.7,129.7 753.3,129.7 754.0,129.5 754.7,129.5 755.3,129.5 756.0,129.2 756.7,129.2 757.3,129.2 758.0,129.2 758.7,128.9 759.3,128.9 760.0,128.4 760.7,127.7 761.3,127.7 762.0,127.8 762.7,127.8 763.3,127.8 764.0,127.2 764.7,127.3 765.3,127.3 766.0,127.3 766.7,127.7 767.3,127.7 768.0,127.7 768.7,127.8 769.3,127.8 770.0,127.8 770.7,127.5 771.3,127.9 772.0,127.9 772.7,127.9 773.3,127.9 774.0,127.3 774.7,128.1 775.3,128.1 776.0,128.1 776.7,127.9 777.3,127.8 778.0,127.8 778.7,127.7 779.3,127.4 780.0,127.0 780.7,128.2 781.3,128.2 782.0,128.2 782.7,128.0 783.3,127.5 784.0,127.9 784.7,127.9 785.3,127.9 786.0,127.1 786.7,127.1 787.3,127.1 788.0,127.4 788.7,127.4 789.3,127.4 790.0,127.9 790.7,127.9 791.3,128.1 792.0,128.1 792.7,128.1 793.3,128.2 794.0,128.3 794.7,128.3 795.3,128.4 796.0,128.9 796.7,128.9 797.3,128.9 798.0,129.3 798.7,129.3 799.3,129.7 800.0,129.9 800.7,130.2 801.3,130.9 802.0,130.9 802.7,130.9 803.3,130.7 804.0,131.3 804.7,131.3 805.3,131.3 806.0,130.6 806.7,130.6 807.3,130.4 808.0,129.6 808.7,129.6 809.3,129.5 810.0,129.4 810.7,129.4 811.3,129.3 812.0,129.8 812.7,129.8 813.3,129.8 814.0,129.5 814.7,129.3 815.3,129.4 816.0,129.4 816.7,129.5 817.3,129.5 818.0,129.5 818.7,129.0 819.3,129.2 820.0,129.2 820.7,129.4 821.3,129.4 822.0,129.4 822.7,129.4 823.3,129.2 824.0,129.0 824.7,129.3 825.3,129.3 826.0,129.3 826.7,129.4 827.3,129.4 828.0,129.8 828.7,129.8 829.3,129.8 830.0,129.5 830.7,129.0 831.3,129.0 832.0,129.0 832.7,128.8 833.3,128.8 834.0,129.0 834.7,129.0 835.3,129.0 836.0,128.3 836.7,128.3 837.3,128.2 838.0,128.5 838.7,128.5 839.3,128.5 840.0,128.5 840.7,128.3 841.3,128.3 842.0,128.3 842.7,128.3 843.3,128.3 844.0,128.0 844.7,128.7 845.3,128.7 846.0,128.7 846.7,128.1 847.3,128.1 848.0,129.2 848.7,129.2 849.3,129.2 850.0,129.3 850.7,130.1 851.3,130.2 852.0,130.5 852.7,130.5 853.3,130.5 854.0,130.2 854.7,130.2 855.3,130.2 856.0,129.7 856.7,129.4 857.3,129.9 858.0,129.9 858.7,129.9 859.3,129.7 860.0,129.7 860.7,129.7 861.3,129.6 862.0,129.6 862.7,129.2 863.3,129.4 864.0,129.4 864.7,129.4 865.3,129.0 866.0,129.0 866.7,128.8 867.3,128.8 868.0,128.8 868.7,129.1 869.3,129.1 870.0,129.1 870.7,129.0 871.3,129.0 872.0,129.0 872.7,128.8 873.3,129.1 874.0,129.1 874.7,129.1 875.3,129.1 876.0,129.1 876.7,128.9 877.3,129.3 878.0,129.3 878.7,129.3 879.3,129.5 880.0,129.5 880.7,129.5 881.3,129.5 882.0,129.1 882.7,129.1 883.3,129.1 884.0,128.9 884.7,128.9 885.3,128.8 886.0,128.6 886.7,128.6 887.3,128.0 888.0,128.0 888.7,128.1 889.3,128.1 890.0,128.1 890.7,127.9 891.3,127.9 892.0,127.9 892.7,127.9 893.3,127.9 894.0,127.9 894.7,127.9 895.3,127.9 896.0,127.9 896.7,127.9 897.3,128.4 898.0,128.4 898.7,128.4 899.3,128.7 900.0,128.7 900.7,128.7 901.3,128.8 902.0,128.8 902.7,128.8 903.3,128.8 904.0,128.8 904.7,129.5 905.3,129.5 906.0,129.5 906.7,129.3 907.3,129.3 908.0,129.6 908.7,129.6 909.3,129.6 910.0,129.1 910.7,129.1 911.3,129.1 912.0,129.4 912.7,129.4 913.3,129.4 914.0,129.0 914.7,129.0 915.3,129.0 916.0,128.9 916.7,129.0 917.3,129.0 918.0,129.0 918.7,128.8 919.3,128.8 920.0,129.1 920.7,129.1 921.3,129.1 922.0,128.6 922.7,129.3 923.3,129.3 924.0,129.3 924.7,129.0 925.3,129.0 926.0,129.5 926.7,129.5 927.3,129.5 928.0,129.5 928.7,129.5 929.3,129.5 930.0,129.5 930.7,128.9 931.3,129.4 932.0,129.4 932.7,129.4 933.3,129.3 934.0,129.3 934.7,129.3 935.3,128.9 936.0,128.9 936.7,128.9 937.3,128.5 938.0,128.5 938.7,128.5 939.3,128.1 940.0,127.9 940.7,127.7 941.3,127.5 942.0,128.0 942.7,128.0 943.3,128.0 944.0,127.1 944.7,126.8 945.3,126.6 946.0,127.2 946.7,127.6 947.3,127.8 948.0,127.8 948.7,127.8 949.3,127.8 950.0,127.6 950.7,128.0 951.3,128.0 952.0,128.0 952.7,128.0 953.3,128.0 954.0,128.1 954.7,128.1 955.3,128.7 956.0,128.9 956.7,128.9 957.3,128.9 958.0,128.7 958.7,129.0 959.3,129.0 960.0,129.0 960.7,128.8 961.3,129.4 962.0,129.4 962.7,129.4 963.3,129.2 964.0,129.0 964.7,129.0 965.3,129.3 966.0,129.3 966.7,129.3 967.3,129.2 968.0,129.4 968.7,129.4 969.3,129.4 970.0,129.5 970.7,129.5 971.3,129.5 972.0,129.3 972.7,129.3 973.3,129.8 974.0,129.8 974.7,129.8 975.3,129.9 976.0,130.3 976.7,130.3 977.3,130.3 978.0,130.3 978.7,130.6 979.3,130.6 980.0,130.6 980.7,130.3 981.3,130.2 982.0,130.8 982.7,130.8 983.3,130.9 984.0,130.9 984.7,130.9 985.3,130.7 986.0,130.7 986.7,130.5 987.3,130.5 988.0,130.0 988.7,130.0 989.3,130.1 990.0,130.1 990.7,130.1 991.3,130.2 992.0,130.2 992.7,130.2 993.3,130.6 994.0,130.6 994.7,130.7 995.3,130.7 996.0,130.7 996.7,130.9 997.3,131.4 998.0,131.4 998.7,131.4 999.3,131.5 1000.0,132.0 1000.7,132.1 1001.3,132.2 1002.0,132.9 1002.7,133.0 1003.3,133.4 1004.0,133.4 1004.7,133.7 1005.3,133.9 1006.0,134.1 1006.7,134.5 1007.3,134.8 1008.0,134.8 1008.7,134.8 1009.3,134.8 1010.0,134.9 1010.7,134.9 1011.3,134.9 1012.0,134.9 1012.7,134.9 1013.3,135.0 1014.0,135.0 1014.7,135.0 1015.3,135.0 1016.0,135.0 1016.7,135.0 1017.3,135.0 1018.0,134.9 1018.7,134.6 1019.3,134.4 1020.0,134.1 1020.7,133.8 1021.3,133.9 1022.0,133.9 1022.7,134.0 1023.3,134.0 1024.0,134.0 1024.7,134.3 1025.3,134.3 1026.0,134.3 1026.7,134.4 1027.3,134.6 1028.0,134.9 1028.7,135.1 1029.3,135.3 1030.0,135.4 1030.7,135.5 1031.3,135.5 1032.0,135.5 1032.7,135.5 1033.3,135.5 1034.0,135.6 1034.7,135.6 1035.3,135.6 1036.0,135.6 1036.7,135.6 1037.3,135.6 1038.0,135.6 1038.7,135.6 1039.3,135.6 1040.0,135.6 1040.7,135.6 1041.3,135.6 1042.0,135.6 1042.7,135.5 1043.3,135.5 1044.0,135.5 1044.7,135.4 1045.3,135.5 1046.0,135.5 1046.7,135.5 1047.3,135.4 1048.0,135.3 1048.7,135.3 1049.3,135.3 1050.0,135.3 1050.7,135.3 1051.3,133.2 1052.0,130.9 1052.7,128.7 1053.3,128.2 1054.0,128.2 1054.7,128.2 1055.3,128.0 1056.0,128.3 1056.7,128.3 1057.3,128.3 1058.0,127.4 1058.7,128.1 1059.3,128.6 1060.0,128.6 1060.7,128.6 1061.3,128.4 1062.0,128.4 1062.7,128.4 1063.3,128.0 1064.0,128.1 1064.7,128.1 1065.3,128.1 1066.0,127.6 1066.7,127.8 1067.3,127.8 1068.0,128.2 1068.7,128.2 1069.3,128.2 1070.0,127.9 1070.7,127.9 1071.3,128.2 1072.0,128.2 1072.7,128.2 1073.3,128.0 1074.0,128.0 1074.7,128.0 1075.3,127.7 1076.0,128.0 1076.7,128.7 1077.3,129.0 1078.0,129.0 1078.7,129.0 1079.3,128.9 1080.0,129.4 1080.7,129.4 1081.3,129.4 1082.0,129.3 1082.7,130.0 1083.3,130.0 1084.0,130.0 1084.7,129.4 1085.3,129.5 1086.0,130.2 1086.7,130.2 1087.3,130.2 1088.0,129.9 1088.7,130.1 1089.3,130.1 1090.0,130.1 1090.7,130.3 1091.3,130.9 1092.0,130.9 1092.7,130.9 1093.3,130.1 1094.0,129.8 1094.7,128.8 1095.3,128.8 1096.0,128.7 1096.7,128.8 1097.3,129.1 1098.0,129.1 1098.7,129.1 1099.3,129.0 1100.0,129.0 1100.7,128.5 1101.3,128.5 1102.0,128.9 1102.7,128.9 1103.3,128.9 1104.0,128.7 1104.7,128.7 1105.3,128.7 1106.0,129.1 1106.7,129.1 1107.3,129.1 1108.0,128.9 1108.7,128.9 1109.3,128.9 1110.0,128.9 1110.7,128.9 1111.3,128.6 1112.0,128.6 1112.7,128.8 1113.3,128.8 1114.0,128.8 1114.7,128.4 1115.3,128.4 1116.0,128.7 1116.7,128.7 1117.3,128.7 1118.0,128.5 1118.7,128.5 1119.3,128.3 1120.0,128.3 1120.7,128.3 1121.3,127.3 1122.0,127.7 1122.7,127.7 1123.3,127.7 1124.0,127.7 1124.7,128.0 1125.3,128.0 1126.0,128.0 1126.7,127.7 1127.3,128.0 1128.0,128.0 1128.7,128.0 1129.3,128.0 1130.0,128.7 1130.7,128.7 1131.3,128.9 1132.0,128.9 1132.7,129.1 1133.3,129.4 1134.0,129.4 1134.7,129.4 1135.3,129.3 1136.0,129.6 1136.7,129.6 1137.3,129.6 1138.0,129.9 1138.7,130.1 1139.3,130.1 1140.0,130.1 1140.7,130.2 1141.3,130.2 1142.0,130.2 1142.7,130.1 1143.3,130.1 1144.0,129.9 1144.7,129.5 1145.3,129.6 1146.0,129.6 1146.7,129.6 1147.3,129.6 1148.0,129.6 1148.7,129.6 1149.3,129.6 1150.0,129.6 1150.7,129.3 1151.3,129.4 1152.0,129.4 1152.7,129.4 1153.3,129.6 1154.0,129.6 1154.7,129.6 1155.3,129.6 1156.0,129.1 1156.7,129.1 1157.3,129.8 1158.0,129.8 1158.7,129.8 1159.3,129.7 1160.0,129.7 1160.7,129.8 1161.3,129.8 1162.0,129.8 1162.7,129.2 1163.3,128.9 1164.0,129.4 1164.7,129.4 1165.3,129.4 1166.0,129.5 1166.7,129.5 1167.3,129.5 1168.0,129.2 1168.7,128.8 1169.3,128.8 1170.0,128.7 1170.7,128.7 1171.3,128.7 1172.0,128.5 1172.7,128.5 1173.3,128.2 1174.0,128.2 1174.7,128.2 1175.3,127.8 1176.0,127.8 1176.7,127.8 1177.3,127.8 1178.0,127.7 1178.7,127.7 1179.3,127.9 1180.0,127.9 1180.7,127.9 1181.3,127.9 1182.0,128.3 1182.7,128.3 1183.3,128.3 1184.0,128.1 1184.7,128.1 1185.3,128.1 1186.0,128.9 1186.7,128.9 1187.3,128.9 1188.0,128.6 1188.7,128.3 1189.3,129.1 1190.0,129.1 1190.7,129.1 1191.3,128.2 1192.0,128.6 1192.7,128.6 1193.3,128.7 1194.0,128.7 1194.7,128.7 1195.3,128.2 1196.0,128.2 1196.7,128.2 1197.3,128.7 1198.0,128.7 1198.7,128.7 1199.3,128.2 1200.0,128.3 1200.7,128.3 1201.3,128.4 1202.0,128.4 1202.7,128.4 1203.3,128.2 1204.0,128.7 1204.7,129.7 1205.3,130.6 1206.0,132.3 1206.7,132.9 1207.3,134.1 1208.0,134.3 1208.7,134.5 1209.3,134.6 1210.0,134.8 1210.7,134.8 1211.3,134.9 1212.0,135.0 1212.7,135.0 1213.3,135.0 1214.0,134.9 1214.7,135.0 1215.3,135.0 1216.0,135.0 1216.7,135.0 1217.3,135.0 1218.0,135.0 1218.7,135.0 1219.3,135.0 1220.0,135.0 1220.7,135.0 1221.3,135.0 1222.0,135.0 1222.7,135.0 1223.3,135.1 1224.0,135.1 1224.7,135.1 1225.3,135.1 1226.0,135.1 1226.7,135.1 1227.3,135.1 1228.0,135.1 1228.7,135.1 1229.3,135.2 1230.0,135.2 1230.7,135.2 1231.3,134.5 1232.0,134.3 1232.7,133.7 1233.3,133.4 1234.0,133.5 1234.7,133.5 1235.3,133.6 1236.0,133.6 1236.7,133.6 1237.3,133.7 1238.0,133.7 1238.7,133.9 1239.3,134.1 1240.0,134.4 1240.7,134.6 1241.3,134.9 1242.0,135.3 1242.7,135.4 1243.3,135.5 1244.0,135.5 1244.7,135.7 1245.3,135.7 1246.0,135.8 1246.7,135.9 1247.3,136.0 1248.0,136.0 1248.7,136.0 1249.3,136.0 1250.0,136.1 1250.7,136.1 1251.3,136.1 1252.0,136.1 1252.7,136.1 1253.3,136.1 1254.0,136.1 1254.7,136.1 1255.3,136.2 1256.0,136.2 1256.7,136.2 1257.3,136.2 1257.3,136.4 1256.7,136.4 1256.0,136.4 1255.3,136.4 1254.7,136.5 1254.0,136.5 1253.3,136.5 1252.7,136.5 1252.0,136.5 1251.3,136.5 1250.7,136.5 1250.0,136.5 1249.3,136.6 1248.7,136.6 1248.0,136.6 1247.3,136.6 1246.7,136.7 1246.0,136.8 1245.3,136.9 1244.7,136.9 1244.0,137.1 1243.3,137.1 1242.7,137.2 1242.0,137.3 1241.3,137.7 1240.7,138.0 1240.0,138.2 1239.3,138.5 1238.7,138.7 1238.0,138.9 1237.3,138.9 1236.7,139.0 1236.0,139.0 1235.3,139.0 1234.7,139.1 1234.0,139.1 1233.3,139.2 1232.7,138.9 1232.0,138.3 1231.3,138.1 1230.7,137.4 1230.0,137.4 1229.3,137.4 1228.7,137.5 1228.0,137.5 1227.3,137.5 1226.7,137.5 1226.0,137.5 1225.3,137.5 1224.7,137.5 1224.0,137.5 1223.3,137.5 1222.7,137.6 1222.0,137.6 1221.3,137.6 1220.7,137.6 1220.0,137.6 1219.3,137.6 1218.7,137.6 1218.0,137.6 1217.3,137.6 1216.7,137.6 1216.0,137.6 1215.3,137.6 1214.7,137.6 1214.0,137.7 1213.3,137.6 1212.7,137.6 1212.0,137.6 1211.3,137.7 1210.7,137.8 1210.0,137.8 1209.3,138.0 1208.7,138.1 1208.0,138.3 1207.3,138.5 1206.7,139.7 1206.0,140.3 1205.3,142.0 1204.7,142.9 1204.0,143.9 1203.3,144.4 1202.7,144.2 1202.0,144.2 1201.3,144.2 1200.7,144.3 1200.0,144.3 1199.3,144.4 1198.7,143.9 1198.0,143.9 1197.3,143.9 1196.7,144.4 1196.0,144.4 1195.3,144.4 1194.7,143.9 1194.0,143.9 1193.3,143.9 1192.7,144.0 1192.0,144.0 1191.3,144.4 1190.7,143.5 1190.0,143.5 1189.3,143.5 1188.7,144.3 1188.0,144.0 1187.3,143.7 1186.7,143.7 1186.0,143.7 1185.3,144.5 1184.7,144.5 1184.0,144.5 1183.3,144.3 1182.7,144.3 1182.0,144.3 1181.3,144.7 1180.7,144.7 1180.0,144.7 1179.3,144.7 1178.7,144.9 1178.0,144.9 1177.3,144.8 1176.7,144.8 1176.0,144.8 1175.3,144.8 1174.7,144.4 1174.0,144.4 1173.3,144.4 1172.7,144.1 1172.0,144.1 1171.3,143.9 1170.7,143.9 1170.0,143.9 1169.3,143.8 1168.7,143.8 1168.0,143.4 1167.3,143.1 1166.7,143.1 1166.0,143.1 1165.3,143.2 1164.7,143.2 1164.0,143.2 1163.3,143.7 1162.7,143.4 1162.0,142.8 1161.3,142.8 1160.7,142.8 1160.0,142.9 1159.3,142.9 1158.7,142.8 1158.0,142.8 1157.3,142.8 1156.7,143.5 1156.0,143.5 1155.3,143.0 1154.7,143.0 1154.0,143.0 1153.3,143.0 1152.7,143.2 1152.0,143.2 1151.3,143.2 1150.7,143.3 1150.0,143.0 1149.3,143.0 1148.7,143.0 1148.0,143.0 1147.3,143.0 1146.7,143.0 1146.0,143.0 1145.3,143.0 1144.7,143.1 1144.0,142.7 1143.3,142.5 1142.7,142.5 1142.0,142.4 1141.3,142.4 1140.7,142.4 1140.0,142.5 1139.3,142.5 1138.7,142.5 1138.0,142.7 1137.3,143.0 1136.7,143.0 1136.0,143.0 1135.3,143.3 1134.7,143.2 1134.0,143.2 1133.3,143.2 1132.7,143.5 1132.0,143.7 1131.3,143.7 1130.7,143.9 1130.0,143.9 1129.3,144.6 1128.7,144.6 1128.0,144.6 1127.3,144.6 1126.7,144.9 1126.0,144.6 1125.3,144.6 1124.7,144.6 1124.0,144.9 1123.3,144.9 1122.7,144.9 1122.0,144.9 1121.3,145.3 1120.7,144.3 1120.0,144.3 1119.3,144.3 1118.7,144.1 1118.0,144.1 1117.3,143.9 1116.7,143.9 1116.0,143.9 1115.3,144.2 1114.7,144.2 1114.0,143.8 1113.3,143.8 1112.7,143.8 1112.0,144.0 1111.3,144.0 1110.7,143.7 1110.0,143.7 1109.3,143.7 1108.7,143.7 1108.0,143.7 1107.3,143.5 1106.7,143.5 1106.0,143.5 1105.3,143.9 1104.7,143.9 1104.0,143.9 1103.3,143.7 1102.7,143.7 1102.0,143.7 1101.3,144.1 1100.7,144.1 1100.0,143.6 1099.3,143.6 1098.7,143.5 1098.0,143.5 1097.3,143.5 1096.7,143.8 1096.0,143.9 1095.3,143.8 1094.7,143.8 1094.0,142.8 1093.3,142.5 1092.7,141.7 1092.0,141.7 1091.3,141.7 1090.7,142.3 1090.0,142.5 1089.3,142.5 1088.7,142.5 1088.0,142.7 1087.3,142.4 1086.7,142.4 1086.0,142.4 1085.3,143.1 1084.7,143.2 1084.0,142.6 1083.3,142.6 1082.7,142.6 1082.0,143.3 1081.3,143.2 1080.7,143.2 1080.0,143.2 1079.3,143.7 1078.7,143.6 1078.0,143.6 1077.3,143.6 1076.7,143.9 1076.0,144.6 1075.3,144.9 1074.7,144.6 1074.0,144.6 1073.3,144.6 1072.7,144.4 1072.0,144.4 1071.3,144.4 1070.7,144.7 1070.0,144.7 1069.3,144.4 1068.7,144.4 1068.0,144.4 1067.3,144.8 1066.7,144.8 1066.0,145.0 1065.3,144.5 1064.7,144.5 1064.0,144.5 1063.3,144.6 1062.7,144.2 1062.0,144.2 1061.3,144.2 1060.7,144.0 1060.0,144.0 1059.3,144.0 1058.7,144.5 1058.0,145.2 1057.3,144.3 1056.7,144.3 1056.0,144.3 1055.3,144.6 1054.7,144.4 1054.0,144.4 1053.3,144.4 1052.7,143.9 1052.0,141.7 1051.3,139.4 1050.7,137.3 1050.0,137.3 1049.3,137.3 1048.7,137.3 1048.0,137.3 1047.3,137.2 1046.7,137.1 1046.0,137.1 1045.3,137.1 1044.7,137.2 1044.0,137.1 1043.3,137.1 1042.7,137.1 1042.0,137.0 1041.3,137.0 1040.7,137.0 1040.0,137.0 1039.3,137.0 1038.7,137.0 1038.0,137.0 1037.3,137.0 1036.7,137.0 1036.0,137.0 1035.3,137.0 1034.7,137.0 1034.0,137.0 1033.3,137.1 1032.7,137.1 1032.0,137.1 1031.3,137.1 1030.7,137.1 1030.0,137.2 1029.3,137.3 1028.7,137.5 1028.0,137.7 1027.3,138.0 1026.7,138.2 1026.0,138.3 1025.3,138.3 1024.7,138.3 1024.0,138.6 1023.3,138.6 1022.7,138.6 1022.0,138.7 1021.3,138.7 1020.7,138.8 1020.0,138.5 1019.3,138.2 1018.7,138.0 1018.0,137.7 1017.3,137.6 1016.7,137.6 1016.0,137.6 1015.3,137.6 1014.7,137.6 1014.0,137.6 1013.3,137.6 1012.7,137.7 1012.0,137.7 1011.3,137.7 1010.7,137.7 1010.0,137.7 1009.3,137.8 1008.7,137.8 1008.0,137.8 1007.3,137.8 1006.7,138.1 1006.0,138.5 1005.3,138.7 1004.7,138.9 1004.0,139.2 1003.3,139.2 1002.7,139.6 1002.0,139.7 1001.3,140.4 1000.7,140.5 1000.0,140.6 999.3,141.1 998.7,141.2 998.0,141.2 997.3,141.2 996.7,141.7 996.0,141.9 995.3,141.9 994.7,141.9 994.0,142.0 993.3,142.0 992.7,142.4 992.0,142.4 991.3,142.4 990.7,142.5 990.0,142.5 989.3,142.5 988.7,142.6 988.0,142.6 987.3,142.1 986.7,142.1 986.0,141.9 985.3,141.9 984.7,141.7 984.0,141.7 983.3,141.7 982.7,141.8 982.0,141.8 981.3,142.4 980.7,142.3 980.0,142.0 979.3,142.0 978.7,142.0 978.0,142.3 977.3,142.3 976.7,142.3 976.0,142.3 975.3,142.7 974.7,142.8 974.0,142.8 973.3,142.8 972.7,143.3 972.0,143.3 971.3,143.1 970.7,143.1 970.0,143.1 969.3,143.2 968.7,143.2 968.0,143.2 967.3,143.4 966.7,143.3 966.0,143.3 965.3,143.3 964.7,143.6 964.0,143.6 963.3,143.4 962.7,143.2 962.0,143.2 961.3,143.2 960.7,143.8 960.0,143.6 959.3,143.6 958.7,143.6 958.0,143.9 957.3,143.7 956.7,143.7 956.0,143.7 955.3,143.9 954.7,144.5 954.0,144.5 953.3,144.6 952.7,144.6 952.0,144.6 951.3,144.6 950.7,144.6 950.0,145.0 949.3,144.8 948.7,144.8 948.0,144.8 947.3,144.8 946.7,145.0 946.0,145.4 945.3,146.0 944.7,145.8 944.0,145.5 943.3,144.6 942.7,144.6 942.0,144.6 941.3,145.1 940.7,144.9 940.0,144.7 939.3,144.5 938.7,144.1 938.0,144.1 937.3,144.1 936.7,143.7 936.0,143.7 935.3,143.7 934.7,143.3 934.0,143.3 933.3,143.3 932.7,143.2 932.0,143.2 931.3,143.2 930.7,143.7 930.0,143.1 929.3,143.1 928.7,143.1 928.0,143.1 927.3,143.1 926.7,143.1 926.0,143.1 925.3,143.6 924.7,143.6 924.0,143.3 923.3,143.3 922.7,143.3 922.0,144.0 921.3,143.5 920.7,143.5 920.0,143.5 919.3,143.8 918.7,143.8 918.0,143.6 917.3,143.6 916.7,143.6 916.0,143.7 915.3,143.6 914.7,143.6 914.0,143.6 913.3,143.2 912.7,143.2 912.0,143.2 911.3,143.5 910.7,143.5 910.0,143.5 909.3,143.0 908.7,143.0 908.0,143.0 907.3,143.3 906.7,143.3 906.0,143.1 905.3,143.1 904.7,143.1 904.0,143.8 903.3,143.8 902.7,143.8 902.0,143.8 901.3,143.8 900.7,143.9 900.0,143.9 899.3,143.9 898.7,144.2 898.0,144.2 897.3,144.2 896.7,144.7 896.0,144.7 895.3,144.7 894.7,144.7 894.0,144.7 893.3,144.7 892.7,144.7 892.0,144.7 891.3,144.7 890.7,144.7 890.0,144.5 889.3,144.5 888.7,144.5 888.0,144.6 887.3,144.6 886.7,144.0 886.0,144.0 885.3,143.8 884.7,143.7 884.0,143.7 883.3,143.5 882.7,143.5 882.0,143.5 881.3,143.1 880.7,143.1 880.0,143.1 879.3,143.1 878.7,143.3 878.0,143.3 877.3,143.3 876.7,143.7 876.0,143.5 875.3,143.5 874.7,143.5 874.0,143.5 873.3,143.5 872.7,143.8 872.0,143.6 871.3,143.6 870.7,143.6 870.0,143.5 869.3,143.5 868.7,143.5 868.0,143.8 867.3,143.8 866.7,143.8 866.0,143.6 865.3,143.6 864.7,143.2 864.0,143.2 863.3,143.2 862.7,143.4 862.0,143.0 861.3,143.0 860.7,142.9 860.0,142.9 859.3,142.9 858.7,142.7 858.0,142.7 857.3,142.7 856.7,143.2 856.0,142.9 855.3,142.4 854.7,142.4 854.0,142.4 853.3,142.1 852.7,142.1 852.0,142.1 851.3,142.4 850.7,142.5 850.0,143.3 849.3,143.4 848.7,143.4 848.0,143.4 847.3,144.5 846.7,144.5 846.0,143.9 845.3,143.9 844.7,143.9 844.0,144.6 843.3,144.3 842.7,144.3 842.0,144.3 841.3,144.3 840.7,144.3 840.0,144.1 839.3,144.1 838.7,144.1 838.0,144.1 837.3,144.4 836.7,144.3 836.0,144.3 835.3,143.6 834.7,143.6 834.0,143.6 833.3,143.8 832.7,143.8 832.0,143.6 831.3,143.6 830.7,143.6 830.0,143.1 829.3,142.8 828.7,142.8 828.0,142.8 827.3,143.2 826.7,143.2 826.0,143.3 825.3,143.3 824.7,143.3 824.0,143.6 823.3,143.4 822.7,143.2 822.0,143.2 821.3,143.2 820.7,143.2 820.0,143.4 819.3,143.4 818.7,143.6 818.0,143.1 817.3,143.1 816.7,143.1 816.0,143.2 815.3,143.2 814.7,143.3 814.0,143.1 813.3,142.8 812.7,142.8 812.0,142.8 811.3,143.3 810.7,143.2 810.0,143.2 809.3,143.1 808.7,143.0 808.0,143.0 807.3,142.2 806.7,142.0 806.0,142.0 805.3,141.3 804.7,141.3 804.0,141.3 803.3,141.9 802.7,141.7 802.0,141.7 801.3,141.7 800.7,142.4 800.0,142.7 799.3,142.9 798.7,143.3 798.0,143.3 797.3,143.7 796.7,143.7 796.0,143.7 795.3,144.2 794.7,144.3 794.0,144.3 793.3,144.4 792.7,144.5 792.0,144.5 791.3,144.5 790.7,144.7 790.0,144.7 789.3,145.2 788.7,145.2 788.0,145.2 787.3,145.5 786.7,145.5 786.0,145.5 785.3,144.7 784.7,144.7 784.0,144.7 783.3,145.1 782.7,144.6 782.0,144.4 781.3,144.4 780.7,144.4 780.0,145.6 779.3,145.2 778.7,144.9 778.0,144.8 777.3,144.8 776.7,144.7 776.0,144.5 775.3,144.5 774.7,144.5 774.0,145.3 773.3,144.7 772.7,144.7 772.0,144.7 771.3,144.7 770.7,145.1 770.0,144.8 769.3,144.8 768.7,144.8 768.0,144.9 767.3,144.9 766.7,144.9 766.0,145.3 765.3,145.3 764.7,145.3 764.0,145.4 763.3,144.8 762.7,144.8 762.0,144.8 761.3,144.9 760.7,144.9 760.0,144.2 759.3,143.7 758.7,143.7 758.0,143.4 757.3,143.4 756.7,143.4 756.0,143.4 755.3,143.1 754.7,143.1 754.0,143.1 753.3,142.9 752.7,142.9 752.0,142.9 751.3,143.5 750.7,143.0 750.0,142.8 749.3,142.8 748.7,142.8 748.0,142.9 747.3,142.9 746.7,142.9 746.0,143.6 745.3,143.6 744.7,143.9 744.0,144.2 743.3,143.6 742.7,143.6 742.0,143.6 741.3,143.7 740.7,143.7 740.0,143.8 739.3,143.9 738.7,143.9 738.0,144.0 737.3,144.0 736.7,144.2 736.0,144.2 735.3,144.3 734.7,143.9 734.0,143.9 733.3,143.9 732.7,143.9 732.0,143.3 731.3,142.9 730.7,142.9 730.0,142.7 729.3,142.7 728.7,142.7 728.0,142.7 727.3,142.3 726.7,142.0 726.0,142.0 725.3,142.0 724.7,142.2 724.0,142.2 723.3,142.2 722.7,142.4 722.0,142.3 721.3,142.2 720.7,142.2 720.0,142.2 719.3,142.6 718.7,142.4 718.0,142.4 717.3,142.4 716.7,142.8 716.0,142.8 715.3,142.3 714.7,142.2 714.0,142.2 713.3,142.2 712.7,142.6 712.0,142.6 711.3,142.6 710.7,142.7 710.0,142.4 709.3,142.3 708.7,142.3 708.0,142.0 707.3,141.6 706.7,141.6 706.0,141.4 705.3,141.3 704.7,141.3 704.0,141.3 703.3,141.6 702.7,141.5 702.0,141.4 701.3,141.4 700.7,141.4 700.0,141.3 699.3,141.1 698.7,141.1 698.0,141.1 697.3,141.4 696.7,141.5 696.0,141.5 695.3,141.3 694.7,141.3 694.0,141.3 693.3,141.6 692.7,141.6 692.0,142.0 691.3,142.2 690.7,141.9 690.0,141.9 689.3,141.9 688.7,142.7 688.0,142.6 687.3,142.6 686.7,142.2 686.0,142.2 685.3,142.2 684.7,142.5 684.0,142.5 683.3,142.5 682.7,142.5 682.0,142.1 681.3,142.0 680.7,142.0 680.0,142.0 679.3,142.2 678.7,142.2 678.0,142.2 677.3,141.9 676.7,141.9 676.0,141.9 675.3,142.2 674.7,142.2 674.0,142.2 673.3,142.4 672.7,142.1 672.0,142.1 671.3,142.1 670.7,142.8 670.0,142.8 669.3,142.8 668.7,142.8 668.0,143.0 667.3,143.1 666.7,143.0 666.0,142.7 665.3,142.7 664.7,142.7 664.0,143.5 663.3,143.5 662.7,143.2 662.0,143.2 661.3,143.2 660.7,143.3 660.0,143.5 659.3,142.9 658.7,142.9 658.0,142.4 657.3,142.4 656.7,142.4 656.0,142.6 655.3,142.0 654.7,142.0 654.0,142.0 653.3,142.1 652.7,142.0 652.0,142.0 651.3,141.9 650.7,141.4 650.0,141.4 649.3,141.3 648.7,141.3 648.0,141.3 647.3,141.7 646.7,141.9 646.0,141.4 645.3,141.3 644.7,141.3 644.0,141.3 643.3,141.4 642.7,141.6 642.0,141.6 641.3,141.7 640.7,141.7 640.0,141.7 639.3,142.2 638.7,142.2 638.0,142.0 637.3,142.0 636.7,142.0 636.0,141.9 635.3,141.9 634.7,141.9 634.0,142.1 633.3,142.2 632.7,142.2 632.0,142.2 631.3,141.9 630.7,141.9 630.0,141.9 629.3,142.1 628.7,142.1 628.0,142.2 627.3,142.2 626.7,142.2 626.0,142.4 625.3,142.1 624.7,142.1 624.0,142.1 623.3,142.2 622.7,142.3 622.0,142.0 621.3,142.0 620.7,142.0 620.0,142.6 619.3,142.7 618.7,143.0 618.0,143.1 617.3,143.1 616.7,143.1 616.0,143.1 615.3,143.0 614.7,143.0 614.0,142.9 613.3,142.7 612.7,142.7 612.0,142.7 611.3,142.7 610.7,142.7 610.0,142.7 609.3,142.7 608.7,142.7 608.0,142.5 607.3,142.5 606.7,142.4 606.0,142.4 605.3,142.4 604.7,142.3 604.0,142.1 603.3,142.1 602.7,142.1 602.0,142.1 601.3,142.0 600.7,142.0 600.0,142.0 599.3,142.7 598.7,143.5 598.0,143.7 597.3,144.0 596.7,143.5 596.0,143.5 595.3,143.5 594.7,143.4 594.0,143.4 593.3,143.4 592.7,143.8 592.0,144.1 591.3,144.1 590.7,143.9 590.0,143.9 589.3,143.9 588.7,144.5 588.0,144.3 587.3,144.3 586.7,144.3 586.0,144.5 585.3,144.0 584.7,144.0 584.0,144.0 583.3,143.9 582.7,143.7 582.0,143.7 581.3,143.7 580.7,143.1 580.0,143.1 579.3,142.9 578.7,142.9 578.0,142.8 577.3,142.8 576.7,142.8 576.0,142.9 575.3,143.0 574.7,143.2 574.0,143.1 573.3,143.0 572.7,143.0 572.0,143.0 571.3,142.7 570.7,142.7 570.0,142.7 569.3,143.4 568.7,143.4 568.0,143.0 567.3,143.0 566.7,143.0 566.0,143.2 565.3,143.2 564.7,143.2 564.0,143.5 563.3,143.7 562.7,143.7 562.0,143.7 561.3,143.7 560.7,143.9 560.0,143.9 559.3,144.2 558.7,144.2 558.0,144.4 557.3,144.0 556.7,143.9 556.0,143.4 555.3,143.3 554.7,142.9 554.0,142.6 553.3,142.6 552.7,142.6 552.0,142.0 551.3,142.0 550.7,141.9 550.0,141.9 549.3,141.9 548.7,142.2 548.0,142.2 547.3,142.2 546.7,142.2 546.0,142.2 545.3,142.2 544.7,142.4 544.0,142.9 543.3,142.9 542.7,142.8 542.0,142.8 541.3,142.8 540.7,142.8 540.0,142.8 539.3,143.2 538.7,143.2 538.0,143.4 537.3,143.1 536.7,143.1 536.0,143.1 535.3,143.3 534.7,143.2 534.0,143.2 533.3,143.2 532.7,143.6 532.0,143.5 531.3,143.5 530.7,143.5 530.0,143.1 529.3,143.1 528.7,143.1 528.0,143.3 527.3,143.5 526.7,143.4 526.0,143.4 525.3,143.0 524.7,142.7 524.0,142.7 523.3,142.7 522.7,143.0 522.0,143.0 521.3,143.0 520.7,142.7 520.0,142.7 519.3,142.7 518.7,143.1 518.0,143.7 517.3,143.7 516.7,143.8 516.0,143.8 515.3,143.7 514.7,143.7 514.0,143.7 513.3,144.1 512.7,144.2 512.0,144.2 511.3,145.1 510.7,145.1 510.0,145.2 509.3,145.0 508.7,145.0 508.0,145.0 507.3,145.6 506.7,145.4 506.0,145.4 505.3,145.4 504.7,145.2 504.0,145.2 503.3,145.2 502.7,145.4 502.0,145.4 501.3,145.5 500.7,144.9 500.0,144.9 499.3,144.8 498.7,144.5 498.0,144.4 497.3,144.4 496.7,144.4 496.0,144.7 495.3,144.3 494.7,144.3 494.0,144.3 493.3,144.7 492.7,144.3 492.0,144.3 491.3,144.3 490.7,144.4 490.0,145.0 489.3,144.6 488.7,144.6 488.0,144.6 487.3,144.6 486.7,145.1 486.0,144.9 485.3,144.9 484.7,144.6 484.0,144.6 483.3,144.6 482.7,144.4 482.0,144.4 481.3,144.4 480.7,144.2 480.0,144.0 479.3,144.0 478.7,144.0 478.0,143.7 477.3,143.2 476.7,142.8 476.0,142.5 475.3,142.0 474.7,141.9 474.0,141.6 473.3,141.6 472.7,141.6 472.0,141.3 471.3,141.3 470.7,141.3 470.0,141.4 469.3,141.5 468.7,141.5 468.0,141.5 467.3,141.3 466.7,141.3 466.0,141.3 465.3,141.4 464.7,141.4 464.0,141.4 463.3,141.5 462.7,141.9 462.0,141.9 461.3,142.0 460.7,142.0 460.0,142.2 459.3,142.1 458.7,142.1 458.0,142.1 457.3,143.0 456.7,142.9 456.0,142.9 455.3,142.7 454.7,142.7 454.0,142.7 453.3,142.9 452.7,142.8 452.0,142.5 451.3,142.5 450.7,142.5 450.0,142.2 449.3,142.2 448.7,142.2 448.0,142.2 447.3,142.2 446.7,142.3 446.0,142.3 445.3,142.3 444.7,142.3 444.0,142.4 443.3,142.7 442.7,142.2 442.0,142.2 441.3,142.2 440.7,142.4 440.0,142.4 439.3,142.7 438.7,142.5 438.0,142.5 437.3,142.5 436.7,142.7 436.0,142.7 435.3,142.9 434.7,143.3 434.0,142.7 433.3,142.7 432.7,142.6 432.0,142.6 431.3,142.6 430.7,143.0 430.0,143.0 429.3,142.7 428.7,142.5 428.0,142.5 427.3,142.5 426.7,142.6 426.0,142.2 425.3,142.2 424.7,142.1 424.0,142.1 423.3,142.1 422.7,142.1 422.0,141.7 421.3,141.7 420.7,141.5 420.0,141.5 419.3,141.5 418.7,141.5 418.0,141.4 417.3,141.4 416.7,141.3 416.0,141.0 415.3,141.0 414.7,141.0 414.0,141.6 413.3,141.3 412.7,141.2 412.0,141.2 411.3,141.2 410.7,141.3 410.0,141.8 409.3,141.7 408.7,141.7 408.0,141.7 407.3,142.1 406.7,142.0 406.0,142.0 405.3,142.0 404.7,142.0 404.0,142.0 403.3,142.3 402.7,142.3 402.0,141.9 401.3,141.9 400.7,141.9 400.0,142.0 399.3,142.0 398.7,142.0 398.0,141.9 397.3,141.9 396.7,141.9 396.0,142.2 395.3,141.5 394.7,141.5 394.0,141.5 393.3,141.9 392.7,142.0 392.0,142.0 391.3,142.0 390.7,142.0 390.0,142.1 389.3,142.1 388.7,141.9 388.0,141.7 387.3,141.7 386.7,141.7 386.0,141.8 385.3,141.8 384.7,142.1 384.0,142.7 383.3,142.7 382.7,142.3 382.0,142.3 381.3,142.3 380.7,142.4 380.0,142.4 379.3,143.0 378.7,143.1 378.0,142.9 377.3,142.2 376.7,142.1 376.0,142.1" fill="#6666de"/><polygon points="376.0,220.8 376.7,220.8 377.3,218.4 378.0,217.2 378.7,220.0 379.3,220.0 380.0,220.0 380.7,215.2 381.3,215.4 382.0,215.4 382.7,218.7 383.3,218.7 384.0,220.5 384.7,220.5 385.3,220.5 386.0,219.6 386.7,219.5 387.3,222.6 388.0,222.6 388.7,222.6 389.3,214.5 390.0,214.5 390.7,217.9 391.3,217.9 392.0,217.9 392.7,217.2 393.3,217.2 394.0,223.1 394.7,223.1 395.3,223.1 396.0,220.8 396.7,220.8 397.3,218.2 398.0,218.2 398.7,216.9 399.3,220.9 400.0,220.9 400.7,220.9 401.3,220.1 402.0,220.1 402.7,217.5 403.3,217.5 404.0,216.8 404.7,217.7 405.3,217.7 406.0,217.7 406.7,217.7 407.3,220.5 408.0,220.5 408.7,220.5 409.3,217.5 410.0,217.5 410.7,220.1 411.3,220.1 412.0,220.1 412.7,220.1 413.3,221.2 414.0,223.1 414.7,223.1 415.3,223.2 416.0,223.2 416.7,223.2 417.3,221.5 418.0,222.3 418.7,222.3 419.3,222.3 420.0,214.2 420.7,214.2 421.3,220.9 422.0,221.7 422.7,221.7 423.3,221.7 424.0,217.9 424.7,218.3 425.3,218.3 426.0,218.3 426.7,217.3 427.3,216.9 428.0,220.7 428.7,220.7 429.3,220.7 430.0,215.3 430.7,212.9 431.3,212.9 432.0,213.4 432.7,213.9 433.3,213.9 434.0,213.9 434.7,210.8 435.3,210.8 436.0,219.2 436.7,219.2 437.3,219.2 438.0,217.2 438.7,220.2 439.3,220.2 440.0,220.2 440.7,213.6 441.3,222.4 442.0,222.4 442.7,222.4 443.3,215.5 444.0,217.1 444.7,217.1 445.3,217.1 446.0,217.1 446.7,217.1 447.3,217.1 448.0,216.8 448.7,216.8 449.3,213.5 450.0,218.5 450.7,218.5 451.3,218.5 452.0,216.0 452.7,221.2 453.3,221.2 454.0,221.2 454.7,220.8 455.3,207.0 456.0,210.5 456.7,210.5 457.3,213.3 458.0,218.4 458.7,218.4 459.3,218.4 460.0,218.4 460.7,218.4 461.3,212.1 462.0,212.1 462.7,222.9 463.3,222.9 464.0,222.9 464.7,218.3 465.3,218.3 466.0,218.6 466.7,218.7 467.3,218.7 468.0,222.0 468.7,222.0 469.3,222.0 470.0,219.1 470.7,219.1 471.3,219.1 472.0,219.1 472.7,219.1 473.3,219.1 474.0,216.0 474.7,217.1 475.3,217.1 476.0,217.1 476.7,215.4 477.3,215.4 478.0,211.1 478.7,206.7 479.3,208.1 480.0,213.2 480.7,213.2 481.3,213.2 482.0,210.5 482.7,214.7 483.3,214.7 484.0,214.7 484.7,197.5 485.3,194.8 486.0,198.3 486.7,198.3 487.3,206.6 488.0,206.6 488.7,206.6 489.3,205.8 490.0,205.8 490.7,206.3 491.3,207.7 492.0,207.7 492.7,213.2 493.3,213.2 494.0,213.2 494.7,203.9 495.3,211.9 496.0,213.9 496.7,213.9 497.3,213.9 498.0,208.4 498.7,208.2 499.3,209.7 500.0,209.7 500.7,209.7 501.3,209.4 502.0,211.1 502.7,211.1 503.3,211.1 504.0,208.5 504.7,207.6 505.3,207.6 506.0,204.8 506.7,212.1 507.3,212.1 508.0,212.1 508.7,213.8 509.3,213.8 510.0,213.8 510.7,215.0 511.3,215.0 512.0,215.0 512.7,205.9 513.3,208.1 514.0,208.1 514.7,208.7 515.3,213.0 516.0,213.8 516.7,217.0 517.3,217.0 518.0,217.0 518.7,213.7 519.3,217.6 520.0,217.6 520.7,217.6 521.3,215.9 522.0,215.9 522.7,217.6 523.3,217.6 524.0,217.6 524.7,217.3 525.3,214.1 526.0,214.8 526.7,217.1 527.3,217.1 528.0,217.1 528.7,217.1 529.3,215.1 530.0,213.3 530.7,207.0 531.3,207.0 532.0,211.2 532.7,218.4 533.3,218.4 534.0,218.4 534.7,212.8 535.3,212.4 536.0,212.4 536.7,212.4 537.3,213.6 538.0,213.6 538.7,213.6 539.3,213.4 540.0,213.4 540.7,213.4 541.3,217.5 542.0,218.6 542.7,218.6 543.3,218.6 544.0,218.3 544.7,219.6 545.3,219.6 546.0,219.6 546.7,217.5 547.3,218.3 548.0,220.7 548.7,220.7 549.3,220.7 550.0,221.1 550.7,221.1 551.3,221.1 552.0,219.1 552.7,219.1 553.3,208.0 554.0,208.0 554.7,215.2 555.3,216.1 556.0,216.1 556.7,216.1 557.3,215.0 558.0,213.6 558.7,210.9 559.3,210.9 560.0,210.9 560.7,211.6 561.3,212.1 562.0,215.5 562.7,215.5 563.3,215.5 564.0,210.9 564.7,211.4 565.3,211.4 566.0,216.3 566.7,216.3 567.3,216.3 568.0,214.6 568.7,218.9 569.3,218.9 570.0,218.9 570.7,218.1 571.3,219.0 572.0,219.0 572.7,219.0 573.3,215.6 574.0,215.6 574.7,212.6 575.3,214.3 576.0,214.3 576.7,215.7 577.3,215.7 578.0,215.7 578.7,212.1 579.3,212.1 580.0,210.9 580.7,209.9 581.3,205.2 582.0,210.6 582.7,210.6 583.3,210.6 584.0,208.4 584.7,208.9 585.3,215.5 586.0,215.5 586.7,217.2 587.3,217.2 588.0,217.2 588.7,213.2 589.3,212.7 590.0,212.7 590.7,212.7 591.3,207.8 592.0,209.3 592.7,211.0 593.3,211.0 594.0,211.0 594.7,216.4 595.3,216.4 596.0,216.4 596.7,216.8 597.3,216.8 598.0,216.8 598.7,219.7 599.3,219.7 600.0,220.9 600.7,220.9 601.3,221.5 602.0,221.5 602.7,221.5 603.3,221.4 604.0,216.7 604.7,214.0 605.3,214.0 606.0,214.6 606.7,216.7 607.3,217.1 608.0,217.1 608.7,217.1 609.3,215.7 610.0,216.1 610.7,216.6 611.3,216.6 612.0,216.6 612.7,215.7 613.3,219.0 614.0,219.0 614.7,219.4 615.3,219.4 616.0,219.4 616.7,219.0 617.3,219.5 618.0,220.5 618.7,220.5 619.3,220.5 620.0,216.4 620.7,217.6 621.3,217.6 622.0,219.0 622.7,219.4 623.3,219.4 624.0,219.4 624.7,216.8 625.3,216.8 626.0,214.5 626.7,214.5 627.3,211.0 628.0,222.5 628.7,222.5 629.3,222.5 630.0,221.7 630.7,221.7 631.3,221.7 632.0,221.3 632.7,222.2 633.3,222.2 634.0,222.2 634.7,214.9 635.3,214.5 636.0,214.5 636.7,218.3 637.3,218.3 638.0,218.3 638.7,219.1 639.3,220.2 640.0,220.6 640.7,221.4 641.3,221.4 642.0,221.4 642.7,221.4 643.3,221.4 644.0,221.4 644.7,221.4 645.3,219.5 646.0,219.5 646.7,222.6 647.3,222.6 648.0,222.6 648.7,220.0 649.3,219.8 650.0,219.8 650.7,219.8 651.3,220.4 652.0,220.4 652.7,220.4 653.3,220.1 654.0,222.0 654.7,222.0 655.3,222.0 656.0,216.3 656.7,216.3 657.3,216.3 658.0,219.6 658.7,219.6 659.3,219.6 660.0,218.4 660.7,218.4 661.3,210.6 662.0,215.5 662.7,215.5 663.3,215.8 664.0,215.8 664.7,218.6 665.3,218.6 666.0,218.6 666.7,210.8 667.3,214.5 668.0,214.5 668.7,214.5 669.3,211.7 670.0,217.3 670.7,217.3 671.3,221.8 672.0,221.8 672.7,221.8 673.3,219.9 674.0,219.5 674.7,219.6 675.3,219.6 676.0,219.6 676.7,218.2 677.3,218.2 678.0,216.2 678.7,220.8 679.3,220.8 680.0,220.8 680.7,214.8 681.3,218.4 682.0,222.2 682.7,222.2 683.3,222.2 684.0,220.8 684.7,220.8 685.3,220.8 686.0,218.3 686.7,218.9 687.3,218.9 688.0,218.9 688.7,214.1 689.3,215.8 690.0,217.6 690.7,217.6 691.3,217.6 692.0,217.3 692.7,219.5 693.3,219.5 694.0,219.5 694.7,216.9 695.3,216.9 696.0,220.0 696.7,220.0 697.3,221.0 698.0,223.9 698.7,223.9 699.3,223.9 700.0,221.3 700.7,217.7 701.3,217.7 702.0,217.7 702.7,220.5 703.3,220.5 704.0,222.2 704.7,222.2 705.3,222.2 706.0,220.2 706.7,214.8 707.3,214.8 708.0,214.8 708.7,216.0 709.3,219.9 710.0,219.9 710.7,219.9 711.3,213.5 712.0,213.5 712.7,213.5 713.3,214.5 714.0,214.5 714.7,214.5 715.3,213.2 716.0,209.3 716.7,209.8 717.3,211.3 718.0,213.6 718.7,213.6 719.3,217.9 720.0,217.9 720.7,218.1 721.3,220.8 722.0,221.0 722.7,221.0 723.3,221.0 724.0,216.8 724.7,217.9 725.3,220.6 726.0,220.6 726.7,220.9 727.3,220.9 728.0,220.9 728.7,219.5 729.3,217.7 730.0,217.7 730.7,217.7 731.3,215.8 732.0,215.8 732.7,209.7 733.3,213.9 734.0,213.9 734.7,213.9 735.3,198.2 736.0,211.7 736.7,211.7 737.3,217.4 738.0,217.4 738.7,217.4 739.3,217.3 740.0,217.3 740.7,217.3 741.3,217.3 742.0,207.5 742.7,208.8 743.3,208.8 744.0,210.7 744.7,210.7 745.3,210.7 746.0,207.4 746.7,207.7 747.3,207.7 748.0,210.4 748.7,218.7 749.3,218.7 750.0,218.7 750.7,209.9 751.3,206.8 752.0,208.6 752.7,210.8 753.3,211.1 754.0,211.1 754.7,211.1 755.3,210.9 756.0,210.9 756.7,215.4 757.3,215.4 758.0,215.6 758.7,215.6 759.3,215.6 760.0,212.8 760.7,212.8 761.3,210.8 762.0,210.8 762.7,211.0 763.3,211.0 764.0,211.0 764.7,203.2 765.3,203.2 766.0,213.6 766.7,213.6 767.3,213.6 768.0,212.6 768.7,206.0 769.3,205.6 770.0,206.5 770.7,206.5 771.3,207.4 772.0,207.4 772.7,207.4 773.3,211.2 774.0,211.2 774.7,211.2 775.3,211.1 776.0,210.9 776.7,214.4 777.3,214.8 778.0,214.8 778.7,214.8 779.3,202.9 780.0,191.8 780.7,195.8 781.3,196.7 782.0,200.4 782.7,200.4 783.3,200.4 784.0,201.4 784.7,208.6 785.3,208.6 786.0,210.5 786.7,210.5 787.3,214.8 788.0,214.8 788.7,214.8 789.3,204.9 790.0,215.7 790.7,215.7 791.3,215.7 792.0,214.2 792.7,206.3 793.3,211.7 794.0,212.2 794.7,212.2 795.3,212.2 796.0,214.7 796.7,214.7 797.3,215.2 798.0,218.8 798.7,218.8 799.3,218.9 800.0,218.9 800.7,219.2 801.3,219.2 802.0,222.5 802.7,222.5 803.3,222.5 804.0,216.9 804.7,219.5 805.3,219.5 806.0,220.8 806.7,220.8 807.3,220.8 808.0,219.9 808.7,218.0 809.3,215.3 810.0,215.3 810.7,216.5 811.3,216.5 812.0,216.5 812.7,217.8 813.3,217.8 814.0,217.8 814.7,217.2 815.3,217.8 816.0,217.8 816.7,217.8 817.3,211.4 818.0,218.7 818.7,218.7 819.3,218.7 820.0,216.2 820.7,216.3 821.3,216.3 822.0,216.3 822.7,214.2 823.3,216.7 824.0,216.9 824.7,218.2 825.3,218.2 826.0,218.2 826.7,216.0 827.3,217.6 828.0,218.9 828.7,218.9 829.3,218.9 830.0,217.4 830.7,217.4 831.3,215.0 832.0,215.0 832.7,215.0 833.3,213.4 834.0,213.4 834.7,213.4 835.3,212.0 836.0,206.4 836.7,200.5 837.3,206.6 838.0,210.8 838.7,210.8 839.3,210.8 840.0,210.0 840.7,202.4 841.3,212.8 842.0,212.8 842.7,212.8 843.3,206.9 844.0,206.9 844.7,205.0 845.3,215.4 846.0,215.4 846.7,215.4 847.3,205.5 848.0,208.0 848.7,212.3 849.3,214.8 850.0,215.0 850.7,215.1 851.3,215.9 852.0,218.5 852.7,218.5 853.3,218.5 854.0,213.3 854.7,214.7 855.3,214.7 856.0,214.8 856.7,214.8 857.3,215.9 858.0,215.9 858.7,215.9 859.3,214.4 860.0,217.8 860.7,217.8 861.3,217.8 862.0,214.4 862.7,214.4 863.3,217.2 864.0,217.2 864.7,217.2 865.3,215.0 866.0,215.0 866.7,211.4 867.3,208.7 868.0,208.7 868.7,208.7 869.3,217.2 870.0,217.2 870.7,217.2 871.3,206.1 872.0,206.1 872.7,207.5 873.3,211.7 874.0,211.7 874.7,211.7 875.3,214.3 876.0,214.3 876.7,214.3 877.3,213.9 878.0,216.3 878.7,217.1 879.3,217.1 880.0,217.1 880.7,216.4 881.3,218.5 882.0,218.5 882.7,218.5 883.3,214.4 884.0,214.4 884.7,214.4 885.3,214.0 886.0,212.7 886.7,203.0 887.3,203.8 888.0,213.8 888.7,213.8 889.3,213.8 890.0,204.8 890.7,204.8 891.3,204.8 892.0,202.7 892.7,198.9 893.3,198.9 894.0,203.2 894.7,214.6 895.3,214.6 896.0,214.6 896.7,206.3 897.3,212.7 898.0,212.7 898.7,212.7 899.3,212.5 900.0,207.5 900.7,206.5 901.3,207.4 902.0,207.4 902.7,216.3 903.3,216.3 904.0,216.3 904.7,213.5 905.3,214.8 906.0,214.8 906.7,214.8 907.3,212.5 908.0,212.5 908.7,209.5 909.3,208.3 910.0,216.2 910.7,216.2 911.3,216.2 912.0,210.0 912.7,210.0 913.3,210.0 914.0,208.3 914.7,214.0 915.3,217.6 916.0,217.6 916.7,217.6 917.3,215.1 918.0,211.9 918.7,211.9 919.3,211.9 920.0,202.9 920.7,204.2 921.3,205.1 922.0,211.1 922.7,211.1 923.3,211.1 924.0,209.6 924.7,209.6 925.3,216.6 926.0,216.6 926.7,216.9 927.3,217.1 928.0,217.1 928.7,217.7 929.3,217.7 930.0,217.7 930.7,217.4 931.3,212.7 932.0,218.5 932.7,218.5 933.3,218.5 934.0,214.4 934.7,214.8 935.3,214.8 936.0,216.1 936.7,216.1 937.3,216.1 938.0,211.7 938.7,209.1 939.3,200.9 940.0,207.9 940.7,207.9 941.3,207.9 942.0,200.3 942.7,210.8 943.3,214.3 944.0,214.3 944.7,214.3 945.3,199.0 946.0,199.0 946.7,213.2 947.3,213.2 948.0,213.2 948.7,209.4 949.3,209.4 950.0,208.8 950.7,211.5 951.3,213.8 952.0,213.8 952.7,216.1 953.3,216.1 954.0,216.1 954.7,204.5 955.3,204.1 956.0,210.4 956.7,210.4 957.3,210.9 958.0,212.1 958.7,212.1 959.3,212.1 960.0,211.8 960.7,211.8 961.3,213.2 962.0,213.2 962.7,213.2 963.3,207.2 964.0,212.4 964.7,217.3 965.3,217.3 966.0,217.3 966.7,209.5 967.3,213.6 968.0,213.6 968.7,213.6 969.3,215.7 970.0,215.7 970.7,215.7 971.3,215.8 972.0,215.8 972.7,216.7 973.3,216.7 974.0,216.7 974.7,214.6 975.3,214.6 976.0,214.6 976.7,214.4 977.3,214.1 978.0,215.0 978.7,216.8 979.3,216.8 980.0,216.8 980.7,222.9 981.3,222.9 982.0,222.9 982.7,217.4 983.3,217.9 984.0,217.9 984.7,219.9 985.3,219.9 986.0,219.9 986.7,218.2 987.3,216.0 988.0,216.0 988.7,216.0 989.3,216.0 990.0,216.0 990.7,219.4 991.3,219.4 992.0,219.4 992.7,219.7 993.3,219.7 994.0,220.2 994.7,220.2 995.3,220.2 996.0,220.5 996.7,220.5 997.3,223.0 998.0,223.0 998.7,224.3 999.3,224.3 1000.0,224.3 1000.7,219.5 1001.3,222.0 1002.0,226.2 1002.7,226.2 1003.3,229.0 1004.0,230.1 1004.7,230.1 1005.3,230.1 1006.0,230.8 1006.7,230.8 1007.3,230.8 1008.0,230.8 1008.7,231.7 1009.3,231.9 1010.0,231.9 1010.7,231.9 1011.3,231.3 1012.0,231.3 1012.7,231.3 1013.3,231.5 1014.0,231.5 1014.7,232.3 1015.3,232.8 1016.0,232.8 1016.7,232.8 1017.3,231.9 1018.0,231.4 1018.7,231.4 1019.3,230.9 1020.0,228.8 1020.7,228.2 1021.3,228.2 1022.0,228.5 1022.7,228.5 1023.3,228.5 1024.0,229.7 1024.7,230.5 1025.3,230.5 1026.0,230.9 1026.7,230.9 1027.3,230.9 1028.0,232.3 1028.7,232.3 1029.3,232.7 1030.0,233.0 1030.7,233.4 1031.3,233.4 1032.0,233.4 1032.7,234.0 1033.3,234.1 1034.0,234.1 1034.7,234.1 1035.3,233.4 1036.0,233.9 1036.7,233.9 1037.3,234.1 1038.0,234.1 1038.7,234.1 1039.3,234.1 1040.0,233.8 1040.7,233.6 1041.3,234.3 1042.0,234.3 1042.7,234.3 1043.3,234.1 1044.0,233.4 1044.7,233.4 1045.3,233.5 1046.0,233.9 1046.7,233.9 1047.3,233.9 1048.0,233.5 1048.7,233.5 1049.3,233.0 1050.0,233.0 1050.7,233.0 1051.3,226.2 1052.0,221.7 1052.7,210.0 1053.3,206.2 1054.0,206.2 1054.7,199.2 1055.3,210.0 1056.0,210.9 1056.7,210.9 1057.3,210.9 1058.0,215.2 1058.7,215.2 1059.3,215.2 1060.0,214.1 1060.7,214.1 1061.3,213.9 1062.0,213.9 1062.7,214.1 1063.3,214.1 1064.0,214.1 1064.7,216.8 1065.3,216.8 1066.0,216.8 1066.7,198.7 1067.3,205.5 1068.0,208.5 1068.7,208.8 1069.3,208.8 1070.0,208.8 1070.7,209.0 1071.3,209.0 1072.0,209.0 1072.7,205.9 1073.3,212.6 1074.0,213.3 1074.7,214.3 1075.3,214.3 1076.0,214.3 1076.7,209.2 1077.3,209.2 1078.0,209.2 1078.7,209.3 1079.3,209.3 1080.0,210.5 1080.7,212.9 1081.3,215.6 1082.0,216.2 1082.7,218.3 1083.3,219.2 1084.0,219.2 1084.7,219.2 1085.3,219.3 1086.0,219.3 1086.7,219.3 1087.3,214.9 1088.0,215.9 1088.7,215.9 1089.3,215.9 1090.0,218.7 1090.7,219.2 1091.3,219.2 1092.0,219.2 1092.7,216.0 1093.3,212.8 1094.0,211.0 1094.7,211.0 1095.3,196.1 1096.0,203.9 1096.7,203.9 1097.3,215.5 1098.0,215.5 1098.7,215.5 1099.3,218.8 1100.0,218.8 1100.7,218.8 1101.3,207.8 1102.0,209.2 1102.7,212.0 1103.3,212.0 1104.0,214.2 1104.7,214.2 1105.3,215.2 1106.0,215.2 1106.7,215.2 1107.3,212.8 1108.0,211.2 1108.7,211.2 1109.3,215.4 1110.0,215.4 1110.7,215.4 1111.3,212.7 1112.0,212.7 1112.7,212.7 1113.3,212.1 1114.0,212.1 1114.7,212.1 1115.3,214.8 1116.0,214.8 1116.7,214.8 1117.3,214.4 1118.0,213.1 1118.7,213.1 1119.3,205.9 1120.0,207.4 1120.7,214.7 1121.3,214.7 1122.0,214.7 1122.7,213.1 1123.3,215.9 1124.0,215.9 1124.7,215.9 1125.3,203.6 1126.0,203.6 1126.7,214.1 1127.3,214.7 1128.0,214.7 1128.7,214.7 1129.3,214.7 1130.0,214.7 1130.7,214.7 1131.3,216.7 1132.0,218.3 1132.7,218.3 1133.3,218.3 1134.0,215.4 1134.7,215.4 1135.3,212.9 1136.0,216.2 1136.7,216.2 1137.3,216.2 1138.0,215.0 1138.7,215.0 1139.3,213.2 1140.0,214.3 1140.7,214.3 1141.3,220.3 1142.0,220.3 1142.7,220.3 1143.3,220.1 1144.0,217.1 1144.7,217.1 1145.3,217.1 1146.0,216.7 1146.7,218.3 1147.3,218.3 1148.0,218.3 1148.7,217.4 1149.3,217.4 1150.0,219.5 1150.7,219.5 1151.3,219.5 1152.0,216.6 1152.7,216.6 1153.3,217.4 1154.0,217.4 1154.7,217.4 1155.3,215.7 1156.0,211.0 1156.7,217.6 1157.3,217.6 1158.0,217.6 1158.7,215.9 1159.3,213.8 1160.0,213.8 1160.7,213.4 1161.3,213.4 1162.0,213.4 1162.7,213.4 1163.3,213.2 1164.0,213.2 1164.7,212.7 1165.3,218.6 1166.0,218.6 1166.7,218.6 1167.3,209.0 1168.0,209.1 1168.7,209.1 1169.3,209.1 1170.0,211.2 1170.7,211.2 1171.3,213.9 1172.0,213.9 1172.7,213.9 1173.3,213.6 1174.0,204.9 1174.7,207.5 1175.3,209.2 1176.0,209.2 1176.7,212.1 1177.3,212.1 1178.0,212.1 1178.7,203.0 1179.3,203.0 1180.0,209.6 1180.7,209.6 1181.3,209.6 1182.0,201.5 1182.7,215.0 1183.3,215.6 1184.0,215.6 1184.7,215.6 1185.3,214.4 1186.0,216.9 1186.7,216.9 1187.3,216.9 1188.0,209.9 1188.7,207.7 1189.3,212.2 1190.0,212.2 1190.7,212.2 1191.3,211.4 1192.0,213.4 1192.7,216.4 1193.3,217.9 1194.0,217.9 1194.7,217.9 1195.3,210.6 1196.0,210.6 1196.7,200.6 1197.3,206.5 1198.0,206.5 1198.7,206.5 1199.3,203.6 1200.0,199.5 1200.7,202.8 1201.3,205.5 1202.0,205.5 1202.7,205.5 1203.3,209.0 1204.0,210.4 1204.7,210.4 1205.3,214.5 1206.0,221.2 1206.7,225.5 1207.3,227.6 1208.0,229.7 1208.7,231.2 1209.3,231.2 1210.0,231.2 1210.7,229.5 1211.3,230.3 1212.0,232.1 1212.7,232.2 1213.3,232.2 1214.0,232.7 1214.7,232.7 1215.3,232.7 1216.0,231.8 1216.7,232.2 1217.3,232.2 1218.0,232.2 1218.7,232.2 1219.3,231.8 1220.0,229.9 1220.7,231.0 1221.3,231.3 1222.0,231.5 1222.7,231.7 1223.3,232.8 1224.0,233.1 1224.7,233.1 1225.3,233.1 1226.0,232.8 1226.7,232.8 1227.3,231.5 1228.0,231.6 1228.7,232.3 1229.3,232.5 1230.0,232.5 1230.7,232.5 1231.3,232.1 1232.0,230.3 1232.7,229.6 1233.3,229.5 1234.0,228.6 1234.7,228.6 1235.3,228.0 1236.0,227.8 1236.7,227.8 1237.3,226.5 1238.0,229.3 1238.7,229.5 1239.3,230.6 1240.0,230.6 1240.7,230.6 1241.3,231.7 1242.0,233.7 1242.7,233.7 1243.3,233.7 1244.0,233.7 1244.7,233.4 1245.3,235.0 1246.0,235.0 1246.7,235.0 1247.3,235.0 1248.0,235.6 1248.7,235.6 1249.3,235.6 1250.0,235.6 1250.7,235.6 1251.3,235.6 1252.0,235.8 1252.7,235.8 1253.3,235.9 1254.0,235.9 1254.7,235.9 1255.3,235.9 1256.0,235.8 1256.7,235.8 1257.3,235.8 1257.3,236.8 1256.7,236.8 1256.0,236.8 1255.3,236.8 1254.7,236.8 1254.0,236.9 1253.3,236.9 1252.7,236.9 1252.0,237.0 1251.3,237.4 1250.7,237.4 1250.0,237.4 1249.3,237.4 1248.7,237.3 1248.0,237.3 1247.3,237.3 1246.7,237.6 1246.0,238.3 1245.3,238.3 1244.7,238.3 1244.0,238.3 1243.3,238.9 1242.7,239.5 1242.0,239.5 1241.3,240.3 1240.7,240.3 1240.0,242.5 1239.3,243.4 1238.7,244.2 1238.0,246.4 1237.3,246.2 1236.7,245.1 1236.0,245.1 1235.3,245.1 1234.7,246.4 1234.0,246.9 1233.3,246.9 1232.7,244.5 1232.0,243.4 1231.3,242.6 1230.7,241.5 1230.0,240.2 1229.3,240.2 1228.7,240.2 1228.0,240.4 1227.3,240.4 1226.7,240.2 1226.0,240.2 1225.3,240.2 1224.7,240.3 1224.0,239.8 1223.3,239.8 1222.7,239.8 1222.0,239.8 1221.3,239.8 1220.7,240.3 1220.0,240.3 1219.3,240.4 1218.7,240.4 1218.0,240.3 1217.3,240.3 1216.7,240.2 1216.0,240.2 1215.3,240.2 1214.7,240.6 1214.0,240.7 1213.3,241.4 1212.7,241.9 1212.0,240.9 1211.3,240.9 1210.7,240.9 1210.0,241.5 1209.3,243.3 1208.7,243.4 1208.0,244.2 1207.3,244.2 1206.7,249.7 1206.0,250.4 1205.3,257.6 1204.7,260.1 1204.0,265.6 1203.3,265.6 1202.7,265.6 1202.0,264.4 1201.3,264.4 1200.7,264.4 1200.0,270.5 1199.3,270.6 1198.7,266.2 1198.0,258.0 1197.3,258.0 1196.7,258.0 1196.0,261.3 1195.3,261.5 1194.7,261.5 1194.0,258.1 1193.3,258.1 1192.7,258.1 1192.0,263.1 1191.3,263.1 1190.7,263.1 1190.0,266.1 1189.3,271.8 1188.7,257.7 1188.0,257.7 1187.3,257.7 1186.7,259.4 1186.0,259.4 1185.3,259.4 1184.7,263.4 1184.0,265.4 1183.3,257.2 1182.7,257.2 1182.0,257.2 1181.3,261.1 1180.7,261.1 1180.0,261.1 1179.3,266.3 1178.7,266.3 1178.0,266.1 1177.3,266.1 1176.7,266.1 1176.0,265.6 1175.3,265.6 1174.7,263.3 1174.0,263.3 1173.3,258.5 1172.7,258.5 1172.0,258.5 1171.3,259.9 1170.7,259.9 1170.0,256.5 1169.3,256.5 1168.7,256.5 1168.0,258.4 1167.3,259.1 1166.7,259.1 1166.0,259.1 1165.3,254.3 1164.7,254.3 1164.0,254.3 1163.3,255.6 1162.7,255.5 1162.0,255.5 1161.3,253.7 1160.7,253.7 1160.0,253.7 1159.3,261.7 1158.7,262.0 1158.0,260.5 1157.3,257.2 1156.7,257.2 1156.0,255.5 1155.3,253.9 1154.7,253.9 1154.0,253.9 1153.3,258.7 1152.7,262.2 1152.0,262.3 1151.3,263.2 1150.7,261.9 1150.0,261.6 1149.3,259.3 1148.7,259.3 1148.0,259.3 1147.3,259.5 1146.7,259.5 1146.0,259.5 1145.3,261.4 1144.7,259.0 1144.0,259.0 1143.3,259.0 1142.7,265.6 1142.0,268.8 1141.3,268.8 1140.7,266.7 1140.0,266.7 1139.3,266.7 1138.7,254.9 1138.0,253.5 1137.3,253.5 1136.7,253.5 1136.0,260.0 1135.3,261.0 1134.7,261.0 1134.0,261.0 1133.3,258.9 1132.7,258.9 1132.0,258.9 1131.3,264.6 1130.7,259.3 1130.0,259.3 1129.3,258.6 1128.7,258.6 1128.0,258.6 1127.3,259.9 1126.7,259.9 1126.0,263.2 1125.3,262.6 1124.7,262.6 1124.0,262.6 1123.3,263.8 1122.7,260.2 1122.0,260.2 1121.3,260.2 1120.7,259.7 1120.0,259.7 1119.3,258.8 1118.7,258.8 1118.0,258.0 1117.3,258.0 1116.7,258.0 1116.0,259.2 1115.3,269.6 1114.7,261.5 1114.0,261.5 1113.3,261.5 1112.7,266.4 1112.0,266.4 1111.3,267.8 1110.7,257.4 1110.0,257.4 1109.3,257.4 1108.7,259.3 1108.0,256.3 1107.3,256.3 1106.7,256.3 1106.0,259.5 1105.3,259.5 1104.7,267.2 1104.0,257.8 1103.3,257.8 1102.7,257.8 1102.0,260.1 1101.3,260.1 1100.7,260.1 1100.0,260.4 1099.3,260.4 1098.7,261.2 1098.0,260.6 1097.3,260.6 1096.7,260.6 1096.0,263.5 1095.3,268.1 1094.7,260.8 1094.0,260.8 1093.3,260.8 1092.7,259.0 1092.0,259.0 1091.3,259.0 1090.7,258.0 1090.0,254.7 1089.3,254.7 1088.7,254.7 1088.0,256.8 1087.3,256.8 1086.7,262.5 1086.0,259.2 1085.3,259.2 1084.7,256.3 1084.0,256.3 1083.3,256.3 1082.7,257.8 1082.0,263.1 1081.3,262.2 1080.7,261.8 1080.0,261.8 1079.3,261.2 1078.7,261.2 1078.0,261.2 1077.3,264.3 1076.7,264.3 1076.0,264.3 1075.3,268.1 1074.7,268.3 1074.0,268.3 1073.3,261.2 1072.7,261.2 1072.0,261.2 1071.3,262.0 1070.7,266.8 1070.0,266.8 1069.3,268.4 1068.7,268.4 1068.0,271.2 1067.3,256.5 1066.7,256.5 1066.0,256.5 1065.3,259.9 1064.7,260.3 1064.0,257.3 1063.3,257.3 1062.7,257.3 1062.0,256.8 1061.3,256.8 1060.7,256.7 1060.0,256.7 1059.3,256.7 1058.7,257.1 1058.0,260.4 1057.3,260.4 1056.7,261.5 1056.0,260.6 1055.3,260.6 1054.7,260.6 1054.0,268.4 1053.3,268.4 1052.7,259.1 1052.0,250.0 1051.3,250.0 1050.7,239.8 1050.0,239.6 1049.3,239.5 1048.7,239.5 1048.0,238.8 1047.3,238.5 1046.7,238.5 1046.0,238.5 1045.3,238.7 1044.7,239.0 1044.0,239.0 1043.3,238.9 1042.7,238.3 1042.0,238.3 1041.3,238.3 1040.7,238.6 1040.0,239.3 1039.3,239.1 1038.7,238.6 1038.0,238.5 1037.3,238.5 1036.7,238.5 1036.0,239.2 1035.3,238.6 1034.7,238.6 1034.0,238.6 1033.3,239.0 1032.7,239.0 1032.0,239.3 1031.3,239.4 1030.7,239.4 1030.0,239.7 1029.3,240.3 1028.7,240.7 1028.0,241.3 1027.3,242.5 1026.7,242.5 1026.0,244.0 1025.3,244.8 1024.7,243.3 1024.0,242.2 1023.3,242.2 1022.7,242.2 1022.0,242.5 1021.3,243.0 1020.7,243.0 1020.0,244.4 1019.3,244.4 1018.7,242.0 1018.0,241.8 1017.3,241.7 1016.7,241.7 1016.0,241.5 1015.3,240.8 1014.7,240.0 1014.0,240.0 1013.3,240.0 1012.7,241.0 1012.0,240.3 1011.3,240.3 1010.7,240.3 1010.0,240.4 1009.3,240.4 1008.7,241.2 1008.0,241.9 1007.3,241.4 1006.7,241.4 1006.0,241.4 1005.3,242.4 1004.7,244.7 1004.0,244.9 1003.3,244.9 1002.7,245.7 1002.0,247.2 1001.3,248.3 1000.7,252.2 1000.0,252.2 999.3,252.5 998.7,253.8 998.0,252.8 997.3,250.8 996.7,250.8 996.0,250.8 995.3,252.2 994.7,252.3 994.0,252.3 993.3,259.2 992.7,259.2 992.0,262.0 991.3,261.1 990.7,261.1 990.0,260.2 989.3,251.2 988.7,251.2 988.0,251.2 987.3,257.1 986.7,252.9 986.0,252.9 985.3,252.9 984.7,261.8 984.0,261.8 983.3,263.9 982.7,251.8 982.0,251.8 981.3,251.8 980.7,251.8 980.0,251.8 979.3,253.4 978.7,253.4 978.0,258.7 977.3,252.8 976.7,252.8 976.0,252.8 975.3,252.8 974.7,253.4 974.0,253.4 973.3,253.4 972.7,254.6 972.0,254.6 971.3,255.2 970.7,257.9 970.0,257.9 969.3,257.9 968.7,257.2 968.0,257.2 967.3,257.2 966.7,262.0 966.0,260.4 965.3,260.4 964.7,260.4 964.0,264.7 963.3,264.7 962.7,256.8 962.0,254.7 961.3,254.7 960.7,254.7 960.0,259.0 959.3,259.0 958.7,259.0 958.0,258.8 957.3,258.8 956.7,258.8 956.0,260.9 955.3,259.9 954.7,259.9 954.0,259.9 953.3,257.0 952.7,256.1 952.0,256.1 951.3,256.1 950.7,266.2 950.0,268.7 949.3,266.6 948.7,266.6 948.0,262.1 947.3,262.1 946.7,262.1 946.0,276.3 945.3,261.4 944.7,261.4 944.0,261.4 943.3,264.8 942.7,264.8 942.0,270.0 941.3,271.3 940.7,269.1 940.0,267.7 939.3,267.7 938.7,263.5 938.0,257.5 937.3,257.5 936.7,257.5 936.0,265.0 935.3,262.0 934.7,262.0 934.0,260.7 933.3,260.7 932.7,260.7 932.0,257.4 931.3,257.4 930.7,257.4 930.0,260.7 929.3,260.7 928.7,266.4 928.0,262.8 927.3,259.7 926.7,259.7 926.0,259.7 925.3,253.8 924.7,253.8 924.0,253.8 923.3,257.1 922.7,256.1 922.0,256.1 921.3,256.1 920.7,256.8 920.0,257.8 919.3,258.0 918.7,263.5 918.0,254.4 917.3,254.4 916.7,254.4 916.0,256.4 915.3,258.9 914.7,258.9 914.0,258.9 913.3,264.1 912.7,260.3 912.0,260.3 911.3,256.0 910.7,256.0 910.0,256.0 909.3,256.3 908.7,256.3 908.0,256.3 907.3,259.4 906.7,259.7 906.0,259.7 905.3,259.9 904.7,260.1 904.0,260.1 903.3,261.2 902.7,256.2 902.0,256.2 901.3,256.2 900.7,269.1 900.0,269.1 899.3,269.1 898.7,258.0 898.0,258.0 897.3,257.8 896.7,257.8 896.0,257.8 895.3,263.6 894.7,267.2 894.0,267.2 893.3,267.2 892.7,276.5 892.0,260.9 891.3,260.9 890.7,260.9 890.0,262.3 889.3,261.8 888.7,257.4 888.0,256.6 887.3,256.6 886.7,256.6 886.0,258.5 885.3,259.4 884.7,261.3 884.0,255.3 883.3,255.3 882.7,255.3 882.0,256.9 881.3,254.8 880.7,254.8 880.0,254.8 879.3,255.4 878.7,255.4 878.0,255.4 877.3,262.9 876.7,263.6 876.0,263.9 875.3,258.6 874.7,258.6 874.0,258.6 873.3,264.5 872.7,264.5 872.0,264.5 871.3,266.5 870.7,257.0 870.0,256.2 869.3,256.2 868.7,256.2 868.0,258.1 867.3,257.7 866.7,257.7 866.0,257.7 865.3,261.9 864.7,263.6 864.0,258.5 863.3,258.5 862.7,258.5 862.0,262.6 861.3,258.3 860.7,258.3 860.0,258.3 859.3,259.8 858.7,260.2 858.0,260.2 857.3,260.2 856.7,263.1 856.0,260.4 855.3,258.5 854.7,254.7 854.0,252.6 853.3,252.6 852.7,252.6 852.0,255.3 851.3,251.4 850.7,251.4 850.0,251.4 849.3,254.1 848.7,254.1 848.0,254.1 847.3,262.6 846.7,262.6 846.0,266.5 845.3,266.1 844.7,266.1 844.0,258.3 843.3,258.3 842.7,258.3 842.0,262.1 841.3,262.1 840.7,259.8 840.0,257.2 839.3,257.2 838.7,257.2 838.0,259.6 837.3,258.1 836.7,258.1 836.0,258.1 835.3,258.8 834.7,258.8 834.0,258.9 833.3,265.2 832.7,265.2 832.0,268.8 831.3,261.5 830.7,255.8 830.0,255.8 829.3,255.8 828.7,258.5 828.0,258.5 827.3,259.4 826.7,259.4 826.0,256.1 825.3,256.1 824.7,256.1 824.0,256.8 823.3,256.2 822.7,256.2 822.0,256.2 821.3,261.0 820.7,264.7 820.0,264.7 819.3,258.7 818.7,258.7 818.0,258.0 817.3,258.0 816.7,258.0 816.0,258.6 815.3,256.8 814.7,256.8 814.0,256.8 813.3,265.7 812.7,263.1 812.0,260.1 811.3,253.5 810.7,253.5 810.0,253.5 809.3,257.3 808.7,257.3 808.0,255.0 807.3,255.0 806.7,252.4 806.0,252.4 805.3,252.4 804.7,253.3 804.0,253.3 803.3,257.8 802.7,257.8 802.0,251.9 801.3,251.9 800.7,251.9 800.0,258.6 799.3,258.6 798.7,256.6 798.0,256.6 797.3,256.6 796.7,269.8 796.0,271.2 795.3,266.3 794.7,266.3 794.0,266.3 793.3,262.8 792.7,262.8 792.0,259.2 791.3,259.2 790.7,259.2 790.0,267.6 789.3,267.6 788.7,262.3 788.0,262.3 787.3,262.3 786.7,263.3 786.0,263.3 785.3,275.1 784.7,259.0 784.0,259.0 783.3,259.0 782.7,262.5 782.0,262.5 781.3,259.0 780.7,259.0 780.0,259.0 779.3,268.9 778.7,268.9 778.0,271.5 777.3,266.7 776.7,266.3 776.0,266.3 775.3,265.7 774.7,265.7 774.0,265.3 773.3,265.3 772.7,259.1 772.0,259.1 771.3,259.1 770.7,269.7 770.0,266.8 769.3,266.5 768.7,266.5 768.0,266.5 767.3,271.7 766.7,265.4 766.0,263.1 765.3,262.4 764.7,262.4 764.0,262.4 763.3,263.0 762.7,259.0 762.0,259.0 761.3,259.0 760.7,265.5 760.0,265.4 759.3,262.4 758.7,262.4 758.0,262.4 757.3,260.8 756.7,260.8 756.0,260.8 755.3,262.6 754.7,259.6 754.0,259.6 753.3,259.6 752.7,262.0 752.0,259.5 751.3,256.3 750.7,256.3 750.0,256.3 749.3,259.9 748.7,261.6 748.0,263.5 747.3,266.4 746.7,261.4 746.0,257.3 745.3,257.3 744.7,257.3 744.0,256.6 743.3,256.6 742.7,256.6 742.0,263.8 741.3,263.8 740.7,263.8 740.0,262.3 739.3,258.4 738.7,258.4 738.0,258.4 737.3,263.7 736.7,263.0 736.0,263.0 735.3,263.0 734.7,264.7 734.0,265.7 733.3,265.7 732.7,261.1 732.0,261.1 731.3,260.4 730.7,260.4 730.0,260.4 729.3,263.3 728.7,258.7 728.0,253.1 727.3,253.1 726.7,253.1 726.0,258.2 725.3,252.6 724.7,252.6 724.0,252.6 723.3,254.3 722.7,254.4 722.0,255.9 721.3,250.4 720.7,250.4 720.0,250.4 719.3,251.2 718.7,251.2 718.0,251.0 717.3,251.0 716.7,251.0 716.0,255.9 715.3,254.3 714.7,254.3 714.0,254.3 713.3,257.5 712.7,258.0 712.0,258.0 711.3,258.0 710.7,254.8 710.0,253.5 709.3,253.5 708.7,253.5 708.0,254.3 707.3,250.4 706.7,250.4 706.0,250.4 705.3,251.7 704.7,251.7 704.0,251.7 703.3,252.8 702.7,252.5 702.0,252.5 701.3,252.5 700.7,251.4 700.0,248.9 699.3,248.9 698.7,248.9 698.0,250.3 697.3,250.3 696.7,256.9 696.0,256.9 695.3,254.2 694.7,254.2 694.0,254.2 693.3,254.7 692.7,255.2 692.0,255.2 691.3,254.8 690.7,254.8 690.0,254.8 689.3,252.9 688.7,252.9 688.0,252.9 687.3,256.3 686.7,256.0 686.0,256.0 685.3,256.0 684.7,260.5 684.0,260.5 683.3,261.3 682.7,261.3 682.0,260.7 681.3,260.7 680.7,258.7 680.0,258.7 679.3,258.1 678.7,258.1 678.0,258.1 677.3,262.0 676.7,262.6 676.0,262.6 675.3,252.1 674.7,252.1 674.0,252.1 673.3,252.3 672.7,252.3 672.0,252.3 671.3,255.0 670.7,260.2 670.0,258.2 669.3,258.2 668.7,258.2 668.0,258.4 667.3,260.8 666.7,262.7 666.0,262.7 665.3,255.9 664.7,255.9 664.0,255.9 663.3,268.2 662.7,274.3 662.0,256.2 661.3,256.2 660.7,256.2 660.0,254.0 659.3,254.0 658.7,254.0 658.0,253.3 657.3,253.3 656.7,252.0 656.0,252.0 655.3,252.0 654.7,266.8 654.0,256.1 653.3,256.1 652.7,256.1 652.0,257.7 651.3,260.0 650.7,259.2 650.0,259.2 649.3,250.7 648.7,250.7 648.0,250.7 647.3,255.1 646.7,255.1 646.0,251.6 645.3,249.7 644.7,249.7 644.0,249.7 643.3,251.7 642.7,251.4 642.0,249.2 641.3,249.2 640.7,249.2 640.0,256.4 639.3,256.4 638.7,255.1 638.0,255.1 637.3,253.9 636.7,253.9 636.0,253.9 635.3,263.6 634.7,257.4 634.0,257.4 633.3,257.4 632.7,258.9 632.0,254.2 631.3,254.2 630.7,254.2 630.0,250.3 629.3,250.3 628.7,250.3 628.0,259.4 627.3,259.4 626.7,262.7 626.0,258.1 625.3,258.1 624.7,258.1 624.0,255.2 623.3,255.2 622.7,255.2 622.0,258.2 621.3,261.8 620.7,255.7 620.0,255.7 619.3,255.1 618.7,255.1 618.0,253.1 617.3,253.1 616.7,253.1 616.0,254.8 615.3,254.8 614.7,255.6 614.0,255.6 613.3,253.1 612.7,253.1 612.0,253.1 611.3,261.4 610.7,267.5 610.0,255.3 609.3,255.3 608.7,255.3 608.0,257.4 607.3,256.5 606.7,255.1 606.0,255.1 605.3,255.1 604.7,263.7 604.0,251.3 603.3,251.3 602.7,251.3 602.0,253.2 601.3,253.2 600.7,259.2 600.0,258.8 599.3,258.8 598.7,258.5 598.0,258.5 597.3,258.5 596.7,258.5 596.0,263.1 595.3,263.1 594.7,260.6 594.0,260.6 593.3,260.6 592.7,260.9 592.0,260.9 591.3,257.4 590.7,257.4 590.0,255.8 589.3,255.8 588.7,255.8 588.0,260.0 587.3,264.6 586.7,264.6 586.0,264.4 585.3,264.4 584.7,264.4 584.0,265.3 583.3,265.3 582.7,267.7 582.0,265.5 581.3,253.4 580.7,253.4 580.0,253.4 579.3,257.9 578.7,254.9 578.0,254.1 577.3,254.1 576.7,254.1 576.0,256.1 575.3,264.7 574.7,258.7 574.0,257.7 573.3,257.7 572.7,257.7 572.0,259.3 571.3,259.3 570.7,261.3 570.0,256.7 569.3,256.0 568.7,256.0 568.0,256.0 567.3,263.0 566.7,263.0 566.0,263.0 565.3,264.6 564.7,265.2 564.0,265.2 563.3,265.8 562.7,265.8 562.0,260.2 561.3,260.2 560.7,260.2 560.0,261.1 559.3,261.1 558.7,261.1 558.0,261.5 557.3,257.5 556.7,256.4 556.0,256.4 555.3,256.4 554.7,258.7 554.0,258.7 553.3,258.7 552.7,255.3 552.0,252.5 551.3,252.5 550.7,252.5 550.0,253.6 549.3,253.8 548.7,258.0 548.0,259.2 547.3,256.9 546.7,256.9 546.0,256.9 545.3,255.2 544.7,255.2 544.0,255.2 543.3,260.3 542.7,260.3 542.0,263.3 541.3,258.8 540.7,258.8 540.0,258.8 539.3,260.2 538.7,260.2 538.0,263.0 537.3,263.0 536.7,261.5 536.0,261.5 535.3,261.5 534.7,265.3 534.0,267.1 533.3,253.5 532.7,253.5 532.0,253.5 531.3,261.9 530.7,262.3 530.0,262.3 529.3,262.3 528.7,263.7 528.0,263.7 527.3,263.7 526.7,263.7 526.0,259.8 525.3,257.3 524.7,257.3 524.0,257.3 523.3,255.3 522.7,252.6 522.0,252.6 521.3,252.6 520.7,254.4 520.0,254.4 519.3,255.9 518.7,262.1 518.0,262.2 517.3,262.2 516.7,262.2 516.0,264.5 515.3,264.5 514.7,264.5 514.0,264.5 513.3,270.2 512.7,270.2 512.0,270.2 511.3,271.7 510.7,258.7 510.0,258.7 509.3,258.7 508.7,259.5 508.0,259.5 507.3,268.7 506.7,262.4 506.0,262.4 505.3,262.4 504.7,264.3 504.0,264.3 503.3,264.3 502.7,262.2 502.0,261.4 501.3,261.4 500.7,261.4 500.0,262.5 499.3,262.5 498.7,264.8 498.0,264.5 497.3,264.5 496.7,264.5 496.0,267.6 495.3,267.6 494.7,267.6 494.0,268.8 493.3,268.8 492.7,271.2 492.0,261.8 491.3,261.8 490.7,259.0 490.0,258.4 489.3,255.9 488.7,255.9 488.0,255.9 487.3,259.7 486.7,259.9 486.0,261.7 485.3,266.5 484.7,265.2 484.0,265.2 483.3,265.2 482.7,264.3 482.0,264.3 481.3,264.3 480.7,258.9 480.0,258.9 479.3,258.9 478.7,259.8 478.0,259.6 477.3,259.6 476.7,255.7 476.0,252.2 475.3,252.2 474.7,252.2 474.0,252.5 473.3,252.5 472.7,253.1 472.0,255.5 471.3,255.5 470.7,253.3 470.0,253.3 469.3,253.3 468.7,255.3 468.0,255.9 467.3,250.9 466.7,250.9 466.0,250.0 465.3,250.0 464.7,250.0 464.0,251.6 463.3,251.6 462.7,252.0 462.0,252.1 461.3,253.0 460.7,253.8 460.0,253.8 459.3,253.0 458.7,253.0 458.0,253.0 457.3,256.7 456.7,259.6 456.0,258.8 455.3,258.8 454.7,256.0 454.0,256.0 453.3,255.4 452.7,254.4 452.0,252.2 451.3,252.2 450.7,252.2 450.0,255.6 449.3,255.6 448.7,255.6 448.0,256.0 447.3,253.3 446.7,253.3 446.0,251.5 445.3,251.5 444.7,251.5 444.0,257.0 443.3,260.0 442.7,258.1 442.0,257.5 441.3,257.5 440.7,257.3 440.0,252.9 439.3,252.9 438.7,252.9 438.0,254.2 437.3,256.4 436.7,256.4 436.0,256.4 435.3,254.9 434.7,254.9 434.0,254.1 433.3,254.1 432.7,254.1 432.0,255.3 431.3,255.3 430.7,255.3 430.0,256.5 429.3,256.5 428.7,259.1 428.0,252.8 427.3,252.8 426.7,252.8 426.0,258.9 425.3,252.7 424.7,252.7 424.0,252.7 423.3,253.5 422.7,253.2 422.0,253.2 421.3,253.2 420.7,255.6 420.0,256.2 419.3,251.7 418.7,248.8 418.0,248.8 417.3,248.8 416.7,248.7 416.0,248.7 415.3,248.7 414.7,250.8 414.0,249.9 413.3,249.9 412.7,249.9 412.0,252.5 411.3,254.8 410.7,255.6 410.0,250.9 409.3,250.9 408.7,250.9 408.0,252.0 407.3,252.0 406.7,252.0 406.0,257.7 405.3,258.0 404.7,259.3 404.0,259.3 403.3,254.7 402.7,254.6 402.0,254.6 401.3,254.6 400.7,252.8 400.0,252.8 399.3,252.8 398.7,253.0 398.0,251.2 397.3,251.2 396.7,250.4 396.0,250.4 395.3,250.4 394.7,253.5 394.0,253.5 393.3,255.3 392.7,253.8 392.0,249.5 391.3,249.5 390.7,249.5 390.0,252.0 389.3,252.0 388.7,253.2 388.0,253.2 387.3,259.4 386.7,259.4 386.0,257.2 385.3,255.3 384.7,255.3 384.0,255.3 383.3,254.2 382.7,253.3 382.0,253.3 381.3,253.3 380.7,255.7 380.0,255.7 379.3,251.6 378.7,251.6 378.0,251.6 377.3,252.7 376.7,256.5 376.0,258.5" fill="#3232c8"/><path d="M376.00 220.8V259.0M376.67 218.4V258.5M377.33 216.1V256.5M378.00 217.2V252.7M378.67 213.0V251.6M379.33 220.0V260.8M380.00 213.9V255.7M380.67 215.2V259.1M381.33 211.2V255.9M382.67 212.2V254.2M383.33 218.7V256.7M384.00 217.8V259.7M385.33 219.6V257.2M386.00 207.3V263.3M386.67 212.3V259.4M387.33 219.5V259.5M388.00 222.6V265.7M388.67 213.0V253.2M389.33 212.8V260.9M390.67 214.3V252.2M392.00 215.3V253.8M392.67 217.2V258.6M393.33 214.2V256.5M394.00 216.7V255.3M395.33 220.5V263.9M396.67 217.7V252.0M398.00 216.7V254.2M398.67 216.2V253.0M399.33 216.9V254.7M400.67 219.5V255.9M401.33 220.1V257.6M402.00 213.2V254.6M403.33 216.8V261.0M404.00 215.7V266.0M404.67 214.1V259.3M405.33 217.7V259.6M406.00 214.5V258.0M406.67 216.1V257.7M407.33 217.7V252.0M408.00 220.5V252.9M408.67 215.1V253.0M410.00 209.0V258.4M410.67 208.7V255.6M411.33 220.1V256.2M412.00 213.8V254.8M412.67 218.0V252.5M413.33 220.1V249.9M414.00 221.2V251.8M415.33 220.7V255.9M416.67 220.7V250.3M417.33 221.5V251.8M418.00 219.8V248.8M418.67 222.3V251.7M419.33 212.5V257.5M420.00 213.2V259.1M420.67 214.2V256.2M421.33 203.8V255.6M422.00 220.9V253.2M422.67 221.7V260.1M423.33 214.7V253.5M424.00 217.4V255.2M424.67 217.9V252.7M425.33 218.3V263.9M426.00 217.3V264.1M426.67 210.0V258.9M428.00 216.5V259.1M428.67 220.7V264.1M429.33 215.3V261.0M430.00 211.7V256.5M430.67 208.7V257.8M432.00 212.9V256.9M432.67 213.4V255.5M434.00 209.8V262.1M434.67 210.5V254.9M435.33 210.8V256.4M436.00 208.3V256.5M436.67 219.2V258.0M437.33 204.6V256.4M438.00 208.8V257.3M438.67 217.2V254.2M440.00 202.3V257.3M440.67 196.0V258.8M441.33 213.6V257.5M442.00 222.4V258.1M442.67 210.8V264.2M444.00 215.4V260.1M444.67 217.1V257.0M445.33 211.4V251.5M446.00 212.4V255.9M447.33 215.1V256.0M448.00 216.8V256.7M448.67 213.5V256.8M449.33 203.5V255.6M450.00 206.3V261.9M450.67 218.5V259.5M451.33 207.5V252.2M452.00 216.0V254.4M452.67 213.8V255.4M453.33 221.2V257.3M454.00 220.8V256.0M454.67 199.5V260.5M455.33 202.5V258.8M456.00 207.0V259.8M457.33 208.9V262.6M458.00 213.3V256.7M459.33 216.5V253.8M460.67 212.1V261.2M461.33 204.4V256.9M462.00 205.6V253.0M462.67 212.1V252.1M463.33 222.9V252.0M464.00 216.6V251.6M464.67 218.3V253.7M465.33 216.8V250.0M466.00 216.9V251.6M467.33 218.7V256.3M468.00 211.0V255.9M468.67 222.0V257.3M469.33 215.7V255.3M470.00 218.0V253.3M470.67 219.1V258.9M471.33 212.1V257.9M472.00 207.4V255.5M472.67 219.1V258.1M473.33 216.0V253.1M474.00 213.8V252.5M474.67 215.9V253.3M476.00 212.6V255.7M476.67 215.4V259.8M477.33 211.1V259.6M478.00 206.7V263.3M478.67 204.7V268.9M479.33 202.3V259.8M480.00 208.1V258.9M480.67 213.2V275.4M481.33 200.7V267.0M482.00 208.1V264.3M482.67 210.5V272.5M483.33 214.7V271.6M484.00 197.5V265.2M484.67 194.8V266.5M485.33 191.0V282.8M486.00 189.9V274.2M486.67 198.3V261.7M487.33 194.8V259.9M488.00 206.6V259.7M488.67 203.4V255.9M489.33 204.8V258.4M490.00 205.8V259.0M490.67 203.4V268.9M491.33 206.3V261.8M492.00 207.7V271.2M492.67 206.6V272.1M493.33 213.2V273.6M494.00 203.6V268.8M494.67 203.9V272.4M495.33 203.7V267.6M496.00 211.9V269.6M496.67 213.9V274.6M497.33 208.4V264.5M498.00 206.3V269.2M499.33 201.5V282.8M500.67 207.4V262.8M501.33 202.4V261.4M502.00 209.4V262.2M502.67 211.1V282.8M503.33 208.5V269.7M504.00 202.9V264.3M504.67 207.6V266.8M505.33 194.5V278.8M506.67 198.0V272.5M507.33 212.1V270.6M508.00 198.9V268.7M508.67 205.0V259.5M509.33 213.8V259.7M510.00 195.6V258.7M510.67 198.5V282.8M512.00 205.9V276.2M512.67 204.1V270.2M513.33 203.0V271.6M514.00 208.1V272.0M514.67 206.1V264.5M515.33 208.7V265.7M516.00 213.0V265.8M516.67 213.8V264.5M518.00 213.7V263.4M518.67 211.0V268.1M519.33 213.1V262.1M520.00 217.6V255.9M520.67 211.6V254.4M521.33 214.0V254.4M522.67 209.7V255.3M523.33 217.6V264.1M524.00 217.3V260.3M524.67 209.0V257.3M525.33 214.1V259.8M526.00 212.5V264.2M526.67 214.8V265.4M528.00 217.1V265.3M528.67 215.1V263.7M529.33 213.3V266.1M530.00 200.1V262.3M530.67 203.6V266.2M531.33 207.0V263.5M532.00 206.9V261.9M532.67 211.2V253.5M533.33 218.4V268.8M534.00 212.8V268.0M534.67 207.3V267.1M535.33 208.3V265.3M536.67 209.1V270.5M537.33 211.6V264.7M538.67 209.5V264.2M540.00 213.4V266.2M540.67 212.4V258.8M541.33 212.1V263.9M542.00 217.5V263.3M542.67 218.6V263.5M543.33 210.8V260.3M544.00 209.9V260.4M544.67 218.3V255.2M545.33 219.6V264.3M546.00 212.2V265.9M546.67 210.3V256.9M547.33 217.5V261.4M548.00 218.3V259.2M548.67 220.7V259.9M549.33 216.3V258.0M550.00 219.9V253.8M550.67 221.1V253.6M551.33 219.1V252.5M552.00 219.1V255.3M552.67 200.7V258.8M554.00 202.7V258.7M554.67 207.9V262.4M555.33 215.2V268.2M556.67 215.0V257.5M557.33 213.6V275.0M558.00 204.8V274.1M558.67 208.6V261.5M560.00 209.2V263.9M560.67 210.6V262.2M561.33 211.6V260.2M562.00 212.1V277.8M562.67 215.5V269.5M563.33 210.9V265.8M564.00 209.0V266.7M564.67 204.8V265.2M565.33 211.4V268.3M566.00 209.3V264.6M567.33 210.9V268.2M568.00 209.6V266.5M568.67 214.6V256.0M569.33 218.9V256.7M570.00 208.0V264.2M570.67 209.1V262.6M571.33 218.1V261.3M572.67 212.5V262.6M574.00 209.8V258.7M574.67 212.4V273.2M575.33 212.6V264.7M576.00 214.3V264.8M576.67 212.4V256.1M578.00 207.3V254.9M578.67 212.1V257.9M579.33 210.9V263.3M580.00 209.9V260.4M580.67 205.1V253.4M581.33 200.7V265.5M582.00 205.2V269.2M583.33 208.3V268.2M584.00 203.7V265.3M584.67 208.4V265.3M585.33 208.9V264.4M586.00 215.5V269.5M586.67 214.8V267.1M588.00 213.2V265.8M588.67 208.5V260.0M589.33 212.2V255.8M590.00 212.7V265.1M590.67 207.1V257.4M591.33 207.8V260.9M592.00 203.3V261.5M592.67 209.3V260.9M593.33 211.0V262.4M594.00 204.9V260.6M594.67 199.1V281.5M595.33 216.4V263.6M596.00 207.0V263.1M596.67 212.0V263.7M598.00 208.0V258.5M598.67 207.1V259.7M600.00 216.3V260.2M600.67 220.9V265.5M601.33 219.9V259.2M602.67 221.4V253.2M603.33 216.7V251.3M604.00 212.7V269.2M604.67 214.0V264.1M605.33 213.7V263.7M606.00 210.1V255.1M606.67 214.6V256.5M607.33 216.7V257.4M608.00 217.1V259.8M608.67 211.1V263.8M609.33 215.2V255.3M610.00 215.7V273.1M610.67 216.1V273.5M611.33 216.6V267.5M612.00 215.0V261.4M613.33 213.4V257.2M614.00 219.0V256.1M614.67 216.7V255.6M615.33 219.4V256.4M616.00 216.2V254.8M616.67 219.0V254.9M617.33 216.2V253.1M618.00 219.5V276.6M619.33 216.4V261.3M620.00 214.0V255.7M620.67 213.6V266.0M621.33 217.6V265.6M622.00 215.6V261.8M622.67 219.0V258.2M624.00 216.8V258.5M624.67 216.8V258.8M625.33 211.9V258.1M626.00 214.5V270.8M626.67 208.4V263.1M627.33 211.0V262.7M628.00 210.3V259.4M628.67 222.5V262.7M629.33 214.6V250.3M630.00 219.2V255.0M630.67 221.7V261.6M631.33 221.3V254.2M632.00 219.9V258.9M632.67 220.5V261.5M633.33 222.2V258.9M634.00 214.9V257.4M634.67 213.9V270.2M636.00 211.0V266.2M636.67 214.4V253.9M637.33 218.3V262.4M638.00 214.7V255.1M638.67 216.9V261.1M639.33 219.1V257.5M640.00 220.2V256.4M640.67 220.6V257.7M642.00 221.4V251.4M642.67 218.6V251.7M643.33 215.4V255.8M644.00 221.4V256.4M644.67 218.3V249.7M645.33 219.5V251.6M646.00 213.9V256.7M646.67 213.0V255.1M647.33 222.6V261.3M648.00 220.0V259.1M648.67 217.6V250.7M649.33 219.7V262.3M650.67 218.5V263.9M651.33 217.2V260.0M652.00 220.4V261.0M652.67 220.1V257.7M653.33 216.4V256.1M654.00 217.4V278.9M654.67 222.0V268.4M655.33 215.2V266.8M656.00 215.1V252.0M656.67 216.3V261.5M657.33 214.8V253.3M658.00 211.8V261.8M658.67 219.6V262.3M659.33 209.7V254.0M660.00 218.4V265.4M660.67 203.8V266.3M661.33 206.7V256.2M662.00 210.6V276.3M663.33 212.7V277.0M664.00 215.8V268.2M664.67 214.7V255.9M665.33 218.6V267.4M666.00 210.3V262.7M666.67 210.8V267.7M667.33 202.6V264.1M668.00 214.5V260.8M668.67 197.8V258.4M669.33 208.9V258.2M670.00 211.7V260.2M670.67 217.3V264.6M671.33 213.3V261.1M672.00 221.8V255.0M672.67 219.9V252.3M673.33 219.5V257.2M674.00 213.7V255.3M674.67 219.2V252.1M675.33 219.6V263.2M676.00 215.8V264.6M677.33 216.2V263.7M678.00 213.3V262.0M678.67 211.6V258.1M679.33 220.8V259.5M680.00 213.3V258.7M680.67 214.8V263.0M681.33 212.5V260.7M682.00 218.4V262.0M683.33 216.6V266.4M684.00 220.2V262.2M685.33 213.9V262.1M686.00 214.1V256.0M686.67 218.3V256.3M687.33 218.9V262.5M688.00 210.6V259.7M688.67 206.8V252.9M689.33 214.1V263.9M690.00 215.8V258.7M691.33 214.9V259.0M692.00 213.8V256.5M692.67 217.3V255.2M693.33 219.5V256.8M694.00 215.8V254.7M695.33 216.9V257.9M696.00 214.6V256.9M697.33 217.2V264.2M698.00 221.0V250.3M698.67 223.9V250.4M699.33 221.3V248.9M700.00 213.3V251.4M700.67 216.8V254.8M701.33 217.7V254.5M702.00 210.5V252.5M702.67 214.5V252.8M703.33 220.5V253.6M704.00 219.4V253.3M705.33 220.2V251.9M706.00 212.4V251.9M706.67 209.4V250.4M707.33 214.8V254.3M708.00 213.4V255.3M708.67 214.4V256.9M709.33 216.0V253.5M710.00 219.9V254.8M710.67 213.5V265.0M711.33 210.0V258.8M712.00 212.3V258.0M712.67 213.5V259.5M713.33 213.4V259.8M714.00 214.5V257.5M714.67 213.2V254.3M715.33 201.0V263.3M716.00 206.4V259.3M716.67 209.3V255.9M717.33 209.8V251.0M718.00 211.3V261.0M718.67 213.6V256.2M719.33 212.1V251.2M720.00 217.9V254.8M720.67 217.6V250.4M721.33 218.1V257.5M722.00 220.8V256.3M722.67 221.0V255.9M723.33 216.8V254.4M724.00 215.7V254.3M724.67 215.7V252.6M725.33 217.9V263.4M726.67 216.0V258.2M728.00 219.5V258.7M728.67 213.0V263.5M729.33 216.0V263.3M730.00 217.7V264.0M730.67 215.7V260.4M731.33 215.8V262.7M732.00 207.9V261.1M732.67 209.7V265.8M733.33 208.4V265.7M734.00 213.9V270.4M734.67 189.8V268.8M735.33 198.2V264.7M736.00 195.4V263.0M736.67 211.7V266.0M737.33 197.1V263.7M738.00 217.4V268.8M738.67 214.0V258.4M739.33 217.3V262.3M740.00 201.2V268.8M740.67 217.3V274.0M741.33 201.9V263.8M742.00 206.7V268.5M742.67 207.5V264.4M744.00 204.1V259.3M744.67 210.7V259.2M745.33 207.3V257.3M746.00 207.4V261.4M746.67 198.5V275.6M747.33 207.7V271.4M748.00 207.2V266.4M748.67 210.4V263.5M749.33 218.7V261.6M750.00 209.9V259.9M750.67 203.6V256.3M751.33 206.8V259.5M752.00 206.8V262.9M752.67 208.6V262.0M753.33 210.8V272.6M754.67 210.9V266.5M755.33 206.1V262.6M756.00 209.2V265.0M756.67 210.9V260.8M757.33 215.4V262.5M758.00 215.4V266.5M759.33 211.4V265.4M760.00 212.8V266.8M760.67 201.6V267.6M761.33 204.5V265.5M762.67 210.4V264.5M764.00 199.4V264.3M764.67 201.0V262.4M765.33 203.2V263.1M766.00 199.9V265.4M766.67 213.6V271.9M767.33 212.6V271.7M768.00 206.0V274.0M768.67 204.4V266.5M769.33 205.3V266.8M770.00 205.6V272.5M770.67 206.5V270.9M771.33 205.4V269.7M772.67 206.1V265.8M773.33 206.8V265.3M774.00 211.2V266.1M775.33 210.9V271.0M776.00 205.5V266.3M776.67 206.4V266.7M777.33 214.4V279.1M778.67 202.9V272.5M779.33 191.0V268.9M780.00 189.8V272.7M780.67 191.8V259.0M781.33 195.8V262.7M782.00 196.7V267.5M783.33 197.8V264.6M784.00 198.0V259.0M784.67 201.4V282.0M786.00 201.1V280.9M787.33 205.1V269.1M788.67 204.9V271.1M789.33 198.9V274.2M790.00 201.9V267.6M790.67 215.7V269.2M791.33 214.2V259.2M792.00 199.5V263.7M793.33 204.0V268.4M794.00 211.7V270.9M795.33 203.7V271.5M796.00 207.0V271.9M796.67 214.7V271.2M797.33 194.5V269.8M798.00 215.2V256.6M798.67 218.8V261.5M799.33 218.4V262.8M800.67 218.6V259.0M802.00 218.3V262.7M803.33 213.0V258.5M804.00 216.9V269.1M804.67 207.5V253.3M805.33 219.5V258.6M806.00 215.3V252.4M806.67 220.8V256.5M807.33 219.9V255.0M808.00 218.0V261.7M808.67 211.7V261.4M809.33 212.6V257.3M810.00 215.3V262.1M810.67 203.5V253.5M811.33 216.5V260.1M812.00 216.4V263.1M812.67 213.8V266.6M813.33 217.8V266.5M814.00 208.4V265.7M815.33 205.2V258.6M816.00 217.8V262.1M816.67 211.4V259.6M817.33 206.9V258.0M818.00 210.2V266.0M819.33 215.8V267.0M820.67 214.4V265.0M821.33 216.3V267.7M822.00 214.2V261.0M822.67 213.4V256.2M823.33 213.0V261.3M824.00 216.7V258.0M824.67 216.9V256.8M826.00 213.5V261.5M826.67 207.8V259.4M827.33 216.0V262.4M828.00 217.6V262.0M829.33 211.7V258.5M830.67 209.6V261.5M831.33 210.0V274.9M832.00 215.0V270.2M832.67 212.4V268.8M833.33 211.8V265.2M834.00 213.4V266.8M834.67 212.0V258.9M835.33 206.4V258.8M836.00 198.8V265.1M836.67 198.8V258.1M837.33 200.5V259.6M838.00 206.6V267.3M838.67 210.8V264.1M839.33 210.0V257.2M840.00 202.4V259.8M840.67 189.8V266.3M841.33 192.1V263.8M842.67 202.8V263.5M844.00 204.1V273.4M844.67 202.3V266.1M845.33 205.0V266.7M846.00 215.4V271.9M846.67 201.6V266.5M848.00 204.9V279.6M848.67 208.0V254.1M849.33 212.3V262.7M850.00 214.8V257.5M851.33 215.1V262.3M852.00 215.9V259.5M852.67 218.5V255.3M853.33 211.9V252.6M854.00 213.3V254.7M854.67 212.8V258.5M855.33 214.7V260.4M856.00 214.7V263.1M856.67 214.8V268.7M857.33 209.3V265.7M858.67 214.4V261.8M859.33 211.8V263.2M860.00 213.2V259.8M861.33 213.8V262.6M862.67 208.4V264.3M863.33 212.3V258.5M864.00 217.2V263.6M864.67 208.4V265.1M865.33 215.0V266.0M866.00 211.4V261.9M866.67 201.3V257.7M867.33 206.5V263.8M868.00 208.7V262.1M868.67 202.7V258.1M869.33 207.5V256.2M870.00 217.2V257.0M870.67 200.2V271.0M871.33 206.1V269.4M872.00 204.5V266.5M872.67 203.6V264.5M873.33 207.5V272.6M874.00 211.7V268.5M874.67 210.9V258.6M875.33 207.2V263.9M876.00 214.3V268.2M876.67 213.5V264.7M877.33 210.9V263.6M878.00 213.9V262.9M878.67 216.3V255.4M879.33 217.1V263.8M880.00 211.4V264.4M881.33 207.7V256.9M882.00 218.5V257.3M882.67 211.9V273.2M883.33 212.7V255.3M884.00 214.4V261.3M884.67 214.0V267.1M885.33 212.7V261.3M886.00 203.0V259.4M886.67 194.0V258.5M887.33 194.5V256.6M888.00 203.8V257.4M888.67 213.8V261.8M889.33 199.3V263.8M890.00 195.4V262.3M890.67 204.8V273.1M891.33 202.7V260.9M892.00 196.1V280.1M893.33 194.1V277.3M894.00 196.7V267.2M894.67 203.2V269.7M895.33 214.6V269.8M896.00 206.3V263.6M896.67 203.3V257.8M897.33 206.1V262.3M898.67 212.5V269.9M899.33 207.5V269.7M900.00 195.2V269.1M900.67 196.9V282.8M901.33 206.5V282.8M902.67 206.0V261.2M903.33 216.3V262.8M904.00 213.5V265.3M904.67 212.6V260.1M905.33 210.8V260.1M906.67 211.8V259.7M907.33 212.5V259.9M908.00 209.5V259.4M908.67 208.3V256.3M909.33 193.3V257.6M910.00 198.7V257.8M911.33 205.3V266.2M912.00 207.7V260.3M912.67 210.0V264.3M913.33 208.0V264.6M914.00 206.0V264.1M914.67 208.3V258.9M915.33 214.0V259.7M916.00 217.6V259.1M916.67 215.1V256.4M917.33 202.0V254.4M918.00 206.1V263.5M918.67 211.9V270.0M919.33 198.5V265.6M920.00 202.1V258.0M920.67 202.9V257.8M921.33 204.2V256.8M922.00 205.1V256.1M922.67 211.1V260.9M923.33 206.8V262.9M924.00 209.6V257.1M924.67 208.2V253.8M925.33 209.2V267.6M926.00 216.6V266.9M926.67 207.5V259.7M927.33 216.9V262.8M928.00 217.1V274.1M928.67 216.7V267.6M929.33 217.7V266.4M930.00 217.4V260.7M930.67 210.2V260.7M931.33 211.5V257.4M932.00 212.7V267.1M932.67 218.5V263.2M933.33 214.3V260.7M934.00 214.4V264.0M934.67 214.1V262.0M935.33 214.8V265.0M936.00 202.4V269.0M936.67 216.1V269.7M937.33 211.7V257.5M938.00 209.1V263.5M938.67 193.3V272.8M939.33 197.7V267.7M940.00 200.9V269.1M940.67 207.9V271.3M941.33 200.3V272.5M942.00 196.9V273.3M942.67 197.9V270.0M943.33 210.8V264.8M944.00 214.3V275.2M944.67 190.7V261.4M945.33 189.8V276.3M946.00 199.0V277.4M946.67 199.0V282.8M948.00 209.4V274.0M949.33 208.8V268.7M950.00 208.3V273.2M950.67 204.5V269.4M951.33 211.5V266.2M952.67 205.2V257.0M953.33 216.1V268.4M954.00 204.5V263.2M954.67 189.8V259.9M955.33 197.4V262.7M956.00 204.1V266.9M956.67 210.4V260.9M957.33 206.2V258.8M958.00 210.9V265.4M958.67 212.1V265.3M959.33 206.2V259.0M960.00 210.9V267.1M960.67 211.8V267.6M961.33 207.4V254.7M962.00 213.2V256.8M962.67 203.1V278.5M963.33 201.6V270.2M964.00 207.2V264.7M964.67 212.4V266.4M966.00 209.5V263.6M966.67 209.0V263.2M967.33 207.7V262.0M968.67 213.0V262.7M969.33 212.9V262.0M970.67 214.3V259.7M971.33 215.4V264.0M972.00 215.8V255.2M972.67 207.4V254.6M973.33 216.7V255.3M974.00 212.4V253.4M974.67 212.3V259.6M975.33 214.6V261.7M976.67 213.3V252.8M977.33 208.6V258.7M978.00 214.1V262.9M978.67 215.0V269.4M980.00 216.1V261.6M980.67 213.7V251.8M981.33 222.9V260.6M982.00 216.8V251.8M982.67 217.4V263.9M983.33 215.1V270.3M984.00 217.9V265.6M984.67 216.3V261.8M985.33 219.9V263.9M986.00 218.2V252.9M986.67 213.5V264.0M987.33 213.5V257.1M988.00 216.0V268.0M988.67 214.6V251.2M989.33 212.5V260.2M990.00 216.0V261.5M990.67 212.7V261.1M991.33 219.4V270.9M992.00 209.3V266.5M992.67 210.7V262.0M994.00 218.1V260.8M995.33 213.1V257.0M996.00 218.0V252.2M997.33 219.9V252.8M998.00 223.0V257.7M998.67 212.0V264.2M999.33 224.3V253.8M1000.00 214.0V252.5M1000.67 214.8V252.2M1001.33 219.5V253.2M1002.00 222.0V248.3M1002.67 226.2V247.2M1003.33 224.5V245.7M1004.00 229.0V244.9M1004.67 230.1V246.6M1005.33 227.0V244.7M1006.00 228.7V242.4M1007.33 230.8V242.5M1008.00 230.2V241.9M1008.67 230.6V243.0M1009.33 231.7V241.2M1010.67 231.1V242.1M1012.00 231.3V244.8M1012.67 229.8V241.0M1013.33 230.6V241.2M1014.67 230.8V240.8M1015.33 232.3V241.5M1016.67 231.9V241.7M1017.33 231.4V241.8M1018.67 230.9V244.6M1019.33 228.8V244.4M1020.00 226.6V245.7M1020.67 227.1V245.4M1022.00 228.0V248.1M1024.00 228.4V243.3M1024.67 229.7V245.7M1025.33 230.5V245.9M1026.00 227.3V244.8M1026.67 230.9V244.0M1027.33 229.4V242.5M1028.00 230.3V242.5M1028.67 232.3V241.3M1029.33 231.9V240.7M1030.00 232.7V240.3M1030.67 233.0V239.7M1032.00 233.2V239.7M1032.67 233.2V239.3M1034.00 234.1V239.2M1034.67 232.9V238.6M1035.33 233.3V239.3M1036.00 233.4V239.4M1036.67 233.9V239.2M1037.33 233.1V238.5M1038.67 234.1V239.1M1039.33 233.8V239.6M1040.67 232.9V239.6M1041.33 233.6V238.6M1042.67 234.1V238.9M1043.33 233.0V239.0M1044.67 233.0V240.0M1045.33 233.3V240.4M1046.00 233.5V238.7M1047.33 233.4V238.8M1048.00 233.5V241.2M1048.67 232.4V239.5M1050.67 226.2V250.5M1051.33 221.7V250.0M1052.00 210.0V259.1M1052.67 202.2V270.1M1054.00 197.2V281.4M1054.67 197.5V275.3M1055.33 199.2V260.6M1056.00 210.0V264.3M1056.67 210.9V262.7M1057.33 205.2V261.5M1058.00 201.5V260.4M1058.67 215.2V260.8M1059.33 211.4V257.1M1060.67 209.2V268.7M1061.33 212.4V256.8M1062.00 213.9V260.0M1062.67 211.5V258.5M1064.00 213.3V264.1M1064.67 209.1V260.3M1065.33 216.8V275.4M1066.00 189.8V259.9M1066.67 197.6V256.5M1067.33 198.7V271.2M1068.00 205.5V271.8M1068.67 208.5V272.4M1070.00 198.4V270.9M1070.67 203.0V266.8M1071.33 209.0V272.7M1072.00 200.4V262.0M1072.67 203.8V261.2M1073.33 205.9V268.4M1074.00 212.6V268.3M1074.67 213.3V278.9M1075.33 214.3V268.5M1076.00 203.2V268.1M1076.67 201.5V264.3M1077.33 209.2V269.6M1078.00 208.6V264.7M1078.67 207.6V261.2M1079.33 209.3V263.3M1080.00 208.3V261.8M1080.67 210.5V262.2M1081.33 212.9V267.1M1082.00 215.6V263.1M1082.67 216.2V263.2M1083.33 218.3V257.8M1084.67 212.4V268.3M1085.33 217.7V259.2M1086.00 219.3V270.3M1086.67 212.8V262.5M1087.33 213.9V263.7M1088.00 214.9V256.8M1088.67 215.9V257.5M1089.33 214.9V254.7M1090.00 214.1V258.0M1090.67 218.7V265.6M1091.33 219.2V267.6M1092.00 216.0V259.0M1092.67 212.8V263.7M1093.33 210.1V262.8M1094.67 195.8V277.8M1095.33 189.8V276.0M1096.00 196.1V268.1M1096.67 203.9V263.5M1097.33 200.8V260.6M1098.00 215.5V261.2M1098.67 213.9V275.0M1099.33 215.1V265.1M1100.67 207.8V268.4M1101.33 201.9V260.1M1102.00 206.3V264.5M1102.67 209.2V282.8M1104.00 210.5V267.2M1105.33 213.5V273.8M1106.67 212.8V261.2M1107.33 209.2V256.3M1108.00 211.2V267.3M1108.67 205.8V267.3M1109.33 202.4V259.3M1110.67 189.8V267.8M1111.33 200.9V275.4M1112.00 212.7V270.0M1112.67 197.8V266.4M1113.33 209.0V267.9M1114.67 210.6V277.4M1115.33 198.6V274.1M1116.00 214.8V269.6M1116.67 214.4V259.2M1117.33 210.0V258.0M1118.00 213.1V260.9M1118.67 205.2V258.8M1119.33 205.1V272.3M1120.00 205.9V259.7M1120.67 207.4V261.5M1121.33 214.7V262.2M1122.00 211.2V260.2M1122.67 213.1V267.5M1123.33 212.6V263.8M1124.00 215.9V267.3M1124.67 200.2V262.6M1125.33 202.6V265.2M1126.00 203.6V266.4M1126.67 203.0V263.2M1127.33 214.1V259.9M1128.00 214.7V266.2M1128.67 212.5V258.6M1129.33 212.5V262.4M1130.67 194.3V267.0M1131.33 204.5V264.6M1132.00 216.7V280.5M1133.33 208.8V267.1M1134.00 215.4V262.6M1134.67 207.2V261.0M1135.33 212.6V269.6M1136.00 212.9V265.5M1136.67 216.2V260.0M1137.33 214.4V253.5M1138.00 215.0V254.9M1138.67 212.0V281.3M1139.33 211.7V269.6M1140.00 213.2V266.7M1140.67 214.3V270.7M1141.33 204.5V268.8M1142.00 220.3V271.5M1142.67 220.1V271.2M1143.33 216.8V265.6M1144.00 209.4V259.0M1144.67 217.1V261.4M1145.33 216.7V265.7M1146.00 216.2V265.8M1146.67 215.3V259.5M1147.33 218.3V264.6M1148.00 215.6V260.4M1148.67 211.6V259.3M1149.33 217.4V261.6M1150.00 213.8V261.9M1150.67 219.5V263.2M1151.33 207.7V271.9M1152.00 216.4V270.6M1153.33 210.6V262.2M1154.00 217.4V258.7M1154.67 215.7V253.9M1155.33 210.6V255.5M1156.00 211.0V257.7M1156.67 200.3V257.2M1157.33 217.6V260.5M1158.00 215.9V262.0M1158.67 213.7V262.8M1159.33 213.8V266.2M1160.00 211.7V261.7M1161.33 212.4V260.0M1162.67 207.6V255.6M1163.33 213.2V258.4M1164.00 205.1V260.2M1164.67 208.4V254.3M1165.33 212.7V265.6M1166.00 218.6V262.3M1166.67 198.1V259.1M1167.33 209.0V263.8M1168.00 204.8V269.0M1168.67 209.1V258.4M1169.33 208.1V256.5M1170.00 205.5V264.1M1171.33 207.4V264.6M1172.00 213.9V265.0M1172.67 213.6V258.5M1173.33 202.6V269.4M1174.67 203.8V266.4M1175.33 207.5V265.6M1176.00 209.2V269.6M1176.67 200.5V273.8M1178.00 201.6V268.0M1179.33 191.4V271.7M1180.00 194.9V268.1M1181.33 201.5V272.5M1182.00 194.2V273.5M1182.67 199.1V257.2M1183.33 215.0V269.5M1184.00 215.6V268.6M1184.67 212.8V265.4M1185.33 211.0V263.4M1186.00 214.4V259.4M1186.67 216.9V260.8M1187.33 209.9V261.7M1188.00 203.6V257.7M1188.67 205.1V276.0M1189.33 207.7V275.4M1190.00 212.2V271.8M1190.67 211.4V266.1M1191.33 206.8V263.1M1192.00 208.1V263.1M1192.67 213.4V264.1M1193.33 216.4V258.1M1194.00 217.9V263.6M1194.67 207.6V261.5M1195.33 210.6V266.2M1196.00 198.9V267.7M1196.67 200.6V261.3M1197.33 199.8V258.0M1198.00 206.5V266.2M1198.67 203.6V275.7M1199.33 193.1V271.4M1200.00 196.3V270.6M1200.67 199.5V270.5M1201.33 202.8V264.4M1202.00 205.5V267.8M1202.67 200.4V268.1M1203.33 202.8V265.6M1204.00 209.0V268.4M1204.67 210.4V270.4M1205.33 206.3V260.1M1206.00 214.5V257.6M1206.67 221.2V250.4M1207.33 225.5V249.7M1208.00 227.6V244.2M1208.67 229.7V244.2M1210.00 225.3V243.3M1210.67 227.8V241.5M1211.33 229.5V240.9M1212.00 230.3V242.3M1213.33 232.2V243.2M1214.00 232.1V241.4M1215.33 231.5V240.6M1216.67 231.3V240.3M1218.00 232.2V241.0M1218.67 231.8V240.4M1219.33 228.9V240.4M1220.00 229.6V240.5M1220.67 229.9V240.3M1221.33 231.0V240.3M1223.33 231.7V239.8M1224.00 232.8V241.1M1225.33 228.8V241.3M1226.67 231.1V240.6M1227.33 230.9V240.4M1228.00 231.5V241.1M1228.67 231.6V240.6M1230.00 232.5V241.5M1230.67 232.1V242.6M1231.33 230.3V243.4M1232.00 229.6V244.5M1232.67 229.5V248.4M1233.33 227.2V248.8M1234.67 228.0V246.9M1235.33 224.2V246.4M1236.67 226.5V246.2M1237.33 225.7V247.1M1238.00 226.3V248.7M1238.67 229.3V246.4M1239.33 229.5V244.2M1240.00 230.6V243.4M1240.67 228.3V242.5M1241.33 230.6V240.3M1242.00 231.7V241.5M1243.33 233.7V239.5M1244.00 233.2V238.9M1245.33 233.2V240.2M1246.00 235.0V239.1M1246.67 234.5V238.3M1247.33 234.9V237.6M1248.00 235.0V237.3M1249.33 235.6V237.7M1252.00 235.6V237.4" stroke="#3232c8" stroke-width="0.8" fill="none"/><polygon points="376.0,230.5 376.7,230.5 377.3,230.4 378.0,229.7 378.7,229.5 379.3,229.6 380.0,230.2 380.7,230.2 381.3,230.3 382.0,230.3 382.7,230.3 383.3,229.9 384.0,229.9 384.7,230.5 385.3,230.8 386.0,230.8 386.7,230.9 387.3,230.9 388.0,230.9 388.7,230.7 389.3,230.5 390.0,230.5 390.7,230.6 391.3,230.6 392.0,230.6 392.7,230.6 393.3,230.7 394.0,231.1 394.7,231.1 395.3,231.1 396.0,230.4 396.7,230.7 397.3,230.7 398.0,230.7 398.7,230.6 399.3,230.6 400.0,230.6 400.7,230.7 401.3,230.7 402.0,230.7 402.7,230.3 403.3,230.3 404.0,230.6 404.7,230.6 405.3,230.6 406.0,230.6 406.7,230.6 407.3,230.5 408.0,230.9 408.7,230.9 409.3,230.9 410.0,230.8 410.7,231.3 411.3,231.4 412.0,231.4 412.7,231.4 413.3,231.3 414.0,231.0 414.7,231.6 415.3,231.6 416.0,231.6 416.7,231.3 417.3,231.2 418.0,231.2 418.7,231.1 419.3,231.1 420.0,231.1 420.7,231.1 421.3,230.9 422.0,230.9 422.7,230.5 423.3,230.5 424.0,230.5 424.7,230.5 425.3,230.4 426.0,230.4 426.7,230.0 427.3,230.1 428.0,230.1 428.7,230.1 429.3,229.9 430.0,229.6 430.7,229.6 431.3,230.0 432.0,230.0 432.7,230.0 433.3,229.9 434.0,229.9 434.7,229.3 435.3,229.7 436.0,229.9 436.7,229.9 437.3,230.1 438.0,230.1 438.7,230.1 439.3,229.9 440.0,230.2 440.7,230.2 441.3,230.4 442.0,230.4 442.7,230.4 443.3,229.9 444.0,230.2 444.7,230.3 445.3,230.3 446.0,230.3 446.7,230.3 447.3,230.4 448.0,230.4 448.7,230.4 449.3,230.4 450.0,230.4 450.7,230.1 451.3,230.1 452.0,230.1 452.7,229.8 453.3,229.7 454.0,229.9 454.7,229.9 455.3,229.9 456.0,229.7 456.7,229.7 457.3,229.6 458.0,230.5 458.7,230.5 459.3,230.5 460.0,230.4 460.7,230.6 461.3,230.6 462.0,230.7 462.7,230.7 463.3,231.1 464.0,231.2 464.7,231.2 465.3,231.2 466.0,231.3 466.7,231.3 467.3,231.3 468.0,231.1 468.7,231.1 469.3,231.1 470.0,231.2 470.7,231.3 471.3,231.3 472.0,231.3 472.7,231.0 473.3,231.0 474.0,231.0 474.7,230.7 475.3,230.6 476.0,230.1 476.7,229.8 477.3,229.4 478.0,228.9 478.7,228.6 479.3,228.6 480.0,228.6 480.7,228.4 481.3,228.2 482.0,228.2 482.7,228.2 483.3,228.0 484.0,228.0 484.7,228.0 485.3,227.7 486.0,227.7 486.7,227.5 487.3,228.0 488.0,228.0 488.7,228.0 489.3,228.0 490.0,227.6 490.7,228.2 491.3,228.3 492.0,228.3 492.7,228.3 493.3,227.9 494.0,228.3 494.7,228.3 495.3,228.3 496.0,227.9 496.7,228.2 497.3,228.2 498.0,228.2 498.7,228.1 499.3,227.8 500.0,227.7 500.7,227.7 501.3,227.1 502.0,227.2 502.7,227.2 503.3,227.4 504.0,227.4 504.7,227.4 505.3,227.2 506.0,227.2 506.7,227.2 507.3,227.0 508.0,227.6 508.7,227.6 509.3,227.6 510.0,227.4 510.7,227.5 511.3,227.5 512.0,228.4 512.7,228.4 513.3,228.5 514.0,228.9 514.7,228.9 515.3,228.9 516.0,228.8 516.7,228.8 517.3,228.9 518.0,228.9 518.7,229.5 519.3,229.9 520.0,229.9 520.7,229.9 521.3,229.6 522.0,229.6 522.7,229.6 523.3,229.9 524.0,229.9 524.7,229.9 525.3,229.6 526.0,229.2 526.7,229.2 527.3,229.1 528.0,229.3 528.7,229.5 529.3,229.5 530.0,229.5 530.7,229.1 531.3,229.1 532.0,229.1 532.7,229.0 533.3,229.4 534.0,229.4 534.7,229.4 535.3,229.3 536.0,229.5 536.7,229.5 537.3,229.5 538.0,229.2 538.7,229.4 539.3,229.4 540.0,229.8 540.7,229.8 541.3,229.8 542.0,229.8 542.7,229.8 543.3,229.7 544.0,229.7 544.7,230.2 545.3,230.4 546.0,230.4 546.7,230.4 547.3,230.4 548.0,230.4 548.7,230.4 549.3,230.7 550.0,230.7 550.7,230.7 551.3,230.6 552.0,230.6 552.7,230.0 553.3,230.0 554.0,230.0 554.7,229.7 555.3,229.3 556.0,229.2 556.7,228.7 557.3,228.6 558.0,228.2 558.7,228.4 559.3,228.4 560.0,228.7 560.7,228.7 561.3,228.9 562.0,228.9 562.7,228.9 563.3,228.9 564.0,229.1 564.7,229.4 565.3,229.4 566.0,229.4 566.7,229.6 567.3,229.6 568.0,229.6 568.7,229.2 569.3,229.2 570.0,229.9 570.7,229.9 571.3,229.9 572.0,229.6 572.7,229.6 573.3,229.6 574.0,229.5 574.7,229.4 575.3,229.6 576.0,229.7 576.7,229.8 577.3,229.8 578.0,229.8 578.7,229.7 579.3,229.7 580.0,229.5 580.7,229.5 581.3,228.9 582.0,228.9 582.7,228.9 583.3,228.7 584.0,228.6 584.7,228.6 585.3,228.6 586.0,228.1 586.7,228.3 587.3,228.3 588.0,228.3 588.7,228.1 589.3,228.7 590.0,228.7 590.7,228.7 591.3,228.5 592.0,228.5 592.7,228.8 593.3,229.2 594.0,229.2 594.7,229.2 595.3,229.1 596.0,229.1 596.7,229.1 597.3,228.6 598.0,228.9 598.7,229.1 599.3,229.9 600.0,230.6 600.7,230.6 601.3,230.6 602.0,230.5 602.7,230.5 603.3,230.5 604.0,230.5 604.7,230.3 605.3,230.2 606.0,230.2 606.7,230.2 607.3,230.1 608.0,230.1 608.7,229.9 609.3,229.9 610.0,229.9 610.7,229.9 611.3,229.9 612.0,229.9 612.7,229.9 613.3,229.9 614.0,229.7 614.7,229.6 615.3,229.6 616.0,229.5 616.7,229.5 617.3,229.5 618.0,229.5 618.7,229.6 619.3,229.9 620.0,230.0 620.7,230.6 621.3,230.6 622.0,230.6 622.7,230.3 623.3,230.4 624.0,230.5 624.7,230.5 625.3,230.5 626.0,230.2 626.7,230.4 627.3,230.4 628.0,230.4 628.7,230.5 629.3,230.5 630.0,230.7 630.7,230.7 631.3,230.7 632.0,230.4 632.7,230.4 633.3,230.4 634.0,230.5 634.7,230.7 635.3,230.7 636.0,230.7 636.7,230.6 637.3,230.6 638.0,230.6 638.7,230.4 639.3,230.4 640.0,230.9 640.7,230.9 641.3,230.9 642.0,231.0 642.7,231.0 643.3,231.2 644.0,231.3 644.7,231.3 645.3,231.3 646.0,231.2 646.7,230.7 647.3,230.9 648.0,231.3 648.7,231.3 649.3,231.3 650.0,231.2 650.7,231.2 651.3,230.7 652.0,230.6 652.7,230.6 653.3,230.5 654.0,230.6 654.7,230.6 655.3,230.6 656.0,230.0 656.7,230.2 657.3,230.2 658.0,230.2 658.7,229.7 659.3,229.7 660.0,229.1 660.7,229.3 661.3,229.4 662.0,229.4 662.7,229.4 663.3,229.1 664.0,229.1 664.7,229.9 665.3,229.9 666.0,229.9 666.7,229.6 667.3,229.5 668.0,229.6 668.7,229.8 669.3,229.8 670.0,229.8 670.7,229.8 671.3,230.5 672.0,230.5 672.7,230.5 673.3,230.2 674.0,230.4 674.7,230.4 675.3,230.4 676.0,230.7 676.7,230.7 677.3,230.7 678.0,230.4 678.7,230.4 679.3,230.4 680.0,230.6 680.7,230.6 681.3,230.6 682.0,230.5 682.7,230.1 683.3,230.1 684.0,230.1 684.7,230.1 685.3,230.4 686.0,230.4 686.7,230.4 687.3,230.0 688.0,230.0 688.7,229.9 689.3,230.7 690.0,230.7 690.7,230.7 691.3,230.4 692.0,230.6 692.7,231.0 693.3,231.0 694.0,231.3 694.7,231.3 695.3,231.3 696.0,231.1 696.7,231.1 697.3,231.2 698.0,231.5 698.7,231.5 699.3,231.5 700.0,231.3 700.7,231.2 701.3,231.2 702.0,231.2 702.7,231.1 703.3,231.0 704.0,231.3 704.7,231.3 705.3,231.3 706.0,231.2 706.7,231.0 707.3,231.0 708.0,230.6 708.7,230.3 709.3,230.3 710.0,230.2 710.7,229.9 711.3,230.0 712.0,230.0 712.7,230.0 713.3,230.4 714.0,230.4 714.7,230.4 715.3,230.3 716.0,229.8 716.7,229.8 717.3,230.2 718.0,230.2 718.7,230.2 719.3,230.0 720.0,230.4 720.7,230.4 721.3,230.4 722.0,230.3 722.7,230.2 723.3,230.4 724.0,230.4 724.7,230.4 725.3,230.6 726.0,230.6 726.7,230.6 727.3,230.3 728.0,229.9 728.7,229.9 729.3,229.9 730.0,229.9 730.7,229.7 731.3,229.7 732.0,229.3 732.7,228.7 733.3,228.7 734.0,228.7 734.7,228.7 735.3,228.3 736.0,228.4 736.7,228.4 737.3,228.6 738.0,228.6 738.7,228.7 739.3,228.7 740.0,228.8 740.7,228.9 741.3,228.9 742.0,229.0 742.7,229.0 743.3,229.0 744.0,228.4 744.7,228.7 745.3,229.0 746.0,229.0 746.7,229.7 747.3,229.7 748.0,229.7 748.7,229.8 749.3,229.8 750.0,229.8 750.7,229.6 751.3,229.1 752.0,229.7 752.7,229.7 753.3,229.7 754.0,229.5 754.7,229.5 755.3,229.5 756.0,229.2 756.7,229.2 757.3,229.2 758.0,229.2 758.7,228.9 759.3,228.9 760.0,228.4 760.7,227.7 761.3,227.7 762.0,227.8 762.7,227.8 763.3,227.8 764.0,227.2 764.7,227.3 765.3,227.3 766.0,227.3 766.7,227.7 767.3,227.7 768.0,227.7 768.7,227.8 769.3,227.8 770.0,227.8 770.7,227.5 771.3,227.9 772.0,227.9 772.7,227.9 773.3,227.9 774.0,227.3 774.7,228.1 775.3,228.1 776.0,228.1 776.7,227.9 777.3,227.8 778.0,227.8 778.7,227.7 779.3,227.4 780.0,227.0 780.7,228.2 781.3,228.2 782.0,228.2 782.7,228.0 783.3,227.5 784.0,227.9 784.7,227.9 785.3,227.9 786.0,227.1 786.7,227.1 787.3,227.1 788.0,227.4 788.7,227.4 789.3,227.4 790.0,227.9 790.7,227.9 791.3,228.1 792.0,228.1 792.7,228.1 793.3,228.2 794.0,228.3 794.7,228.3 795.3,228.4 796.0,228.9 796.7,228.9 797.3,228.9 798.0,229.3 798.7,229.3 799.3,229.7 800.0,229.9 800.7,230.2 801.3,230.9 802.0,230.9 802.7,230.9 803.3,230.7 804.0,231.3 804.7,231.3 805.3,231.3 806.0,230.6 806.7,230.6 807.3,230.4 808.0,229.6 808.7,229.6 809.3,229.5 810.0,229.4 810.7,229.4 811.3,229.3 812.0,229.8 812.7,229.8 813.3,229.8 814.0,229.5 814.7,229.3 815.3,229.4 816.0,229.4 816.7,229.5 817.3,229.5 818.0,229.5 818.7,229.0 819.3,229.2 820.0,229.2 820.7,229.4 821.3,229.4 822.0,229.4 822.7,229.4 823.3,229.2 824.0,229.0 824.7,229.3 825.3,229.3 826.0,229.3 826.7,229.4 827.3,229.4 828.0,229.8 828.7,229.8 829.3,229.8 830.0,229.5 830.7,229.0 831.3,229.0 832.0,229.0 832.7,228.8 833.3,228.8 834.0,229.0 834.7,229.0 835.3,229.0 836.0,228.3 836.7,228.3 837.3,228.2 838.0,228.5 838.7,228.5 839.3,228.5 840.0,228.5 840.7,228.3 841.3,228.3 842.0,228.3 842.7,228.3 843.3,228.3 844.0,228.0 844.7,228.7 845.3,228.7 846.0,228.7 846.7,228.1 847.3,228.1 848.0,229.2 848.7,229.2 849.3,229.2 850.0,229.3 850.7,230.1 851.3,230.2 852.0,230.5 852.7,230.5 853.3,230.5 854.0,230.2 854.7,230.2 855.3,230.2 856.0,229.7 856.7,229.4 857.3,229.9 858.0,229.9 858.7,229.9 859.3,229.7 860.0,229.7 860.7,229.7 861.3,229.6 862.0,229.6 862.7,229.2 863.3,229.4 864.0,229.4 864.7,229.4 865.3,229.0 866.0,229.0 866.7,228.8 867.3,228.8 868.0,228.8 868.7,229.1 869.3,229.1 870.0,229.1 870.7,229.0 871.3,229.0 872.0,229.0 872.7,228.8 873.3,229.1 874.0,229.1 874.7,229.1 875.3,229.1 876.0,229.1 876.7,228.9 877.3,229.3 878.0,229.3 878.7,229.3 879.3,229.5 880.0,229.5 880.7,229.5 881.3,229.5 882.0,229.1 882.7,229.1 883.3,229.1 884.0,228.9 884.7,228.9 885.3,228.8 886.0,228.6 886.7,228.6 887.3,228.0 888.0,228.0 888.7,228.1 889.3,228.1 890.0,228.1 890.7,227.9 891.3,227.9 892.0,227.9 892.7,227.9 893.3,227.9 894.0,227.9 894.7,227.9 895.3,227.9 896.0,227.9 896.7,227.9 897.3,228.4 898.0,228.4 898.7,228.4 899.3,228.7 900.0,228.7 900.7,228.7 901.3,228.8 902.0,228.8 902.7,228.8 903.3,228.8 904.0,228.8 904.7,229.5 905.3,229.5 906.0,229.5 906.7,229.3 907.3,229.3 908.0,229.6 908.7,229.6 909.3,229.6 910.0,229.1 910.7,229.1 911.3,229.1 912.0,229.4 912.7,229.4 913.3,229.4 914.0,229.0 914.7,229.0 915.3,229.0 916.0,228.9 916.7,229.0 917.3,229.0 918.0,229.0 918.7,228.8 919.3,228.8 920.0,229.1 920.7,229.1 921.3,229.1 922.0,228.6 922.7,229.3 923.3,229.3 924.0,229.3 924.7,229.0 925.3,229.0 926.0,229.5 926.7,229.5 927.3,229.5 928.0,229.5 928.7,229.5 929.3,229.5 930.0,229.5 930.7,228.9 931.3,229.4 932.0,229.4 932.7,229.4 933.3,229.3 934.0,229.3 934.7,229.3 935.3,228.9 936.0,228.9 936.7,228.9 937.3,228.5 938.0,228.5 938.7,228.5 939.3,228.1 940.0,227.9 940.7,227.7 941.3,227.5 942.0,228.0 942.7,228.0 943.3,228.0 944.0,227.1 944.7,226.8 945.3,226.6 946.0,227.2 946.7,227.6 947.3,227.8 948.0,227.8 948.7,227.8 949.3,227.8 950.0,227.6 950.7,228.0 951.3,228.0 952.0,228.0 952.7,228.0 953.3,228.0 954.0,228.1 954.7,228.1 955.3,228.7 956.0,228.9 956.7,228.9 957.3,228.9 958.0,228.7 958.7,229.0 959.3,229.0 960.0,229.0 960.7,228.8 961.3,229.4 962.0,229.4 962.7,229.4 963.3,229.2 964.0,229.0 964.7,229.0 965.3,229.3 966.0,229.3 966.7,229.3 967.3,229.2 968.0,229.4 968.7,229.4 969.3,229.4 970.0,229.5 970.7,229.5 971.3,229.5 972.0,229.3 972.7,229.3 973.3,229.8 974.0,229.8 974.7,229.8 975.3,229.9 976.0,230.3 976.7,230.3 977.3,230.3 978.0,230.3 978.7,230.6 979.3,230.6 980.0,230.6 980.7,230.3 981.3,230.2 982.0,230.8 982.7,230.8 983.3,230.9 984.0,230.9 984.7,230.9 985.3,230.7 986.0,230.7 986.7,230.5 987.3,230.5 988.0,230.0 988.7,230.0 989.3,230.1 990.0,230.1 990.7,230.1 991.3,230.2 992.0,230.2 992.7,230.2 993.3,230.6 994.0,230.6 994.7,230.7 995.3,230.7 996.0,230.7 996.7,230.9 997.3,231.4 998.0,231.4 998.7,231.4 999.3,231.5 1000.0,232.0 1000.7,232.1 1001.3,232.2 1002.0,232.9 1002.7,233.0 1003.3,233.4 1004.0,233.4 1004.7,233.7 1005.3,233.9 1006.0,234.1 1006.7,234.5 1007.3,234.8 1008.0,234.8 1008.7,234.8 1009.3,234.8 1010.0,234.9 1010.7,234.9 1011.3,234.9 1012.0,234.9 1012.7,234.9 1013.3,235.0 1014.0,235.0 1014.7,235.0 1015.3,235.0 1016.0,235.0 1016.7,235.0 1017.3,235.0 1018.0,234.9 1018.7,234.6 1019.3,234.4 1020.0,234.1 1020.7,233.8 1021.3,233.9 1022.0,233.9 1022.7,234.0 1023.3,234.0 1024.0,234.0 1024.7,234.3 1025.3,234.3 1026.0,234.3 1026.7,234.4 1027.3,234.6 1028.0,234.9 1028.7,235.1 1029.3,235.3 1030.0,235.4 1030.7,235.5 1031.3,235.5 1032.0,235.5 1032.7,235.5 1033.3,235.5 1034.0,235.6 1034.7,235.6 1035.3,235.6 1036.0,235.6 1036.7,235.6 1037.3,235.6 1038.0,235.6 1038.7,235.6 1039.3,235.6 1040.0,235.6 1040.7,235.6 1041.3,235.6 1042.0,235.6 1042.7,235.5 1043.3,235.5 1044.0,235.5 1044.7,235.4 1045.3,235.5 1046.0,235.5 1046.7,235.5 1047.3,235.4 1048.0,235.3 1048.7,235.3 1049.3,235.3 1050.0,235.3 1050.7,235.3 1051.3,233.2 1052.0,230.9 1052.7,228.7 1053.3,228.2 1054.0,228.2 1054.7,228.2 1055.3,228.0 1056.0,228.3 1056.7,228.3 1057.3,228.3 1058.0,227.4 1058.7,228.1 1059.3,228.6 1060.0,228.6 1060.7,228.6 1061.3,228.4 1062.0,228.4 1062.7,228.4 1063.3,228.0 1064.0,228.1 1064.7,228.1 1065.3,228.1 1066.0,227.6 1066.7,227.8 1067.3,227.8 1068.0,228.2 1068.7,228.2 1069.3,228.2 1070.0,227.9 1070.7,227.9 1071.3,228.2 1072.0,228.2 1072.7,228.2 1073.3,228.0 1074.0,228.0 1074.7,228.0 1075.3,227.7 1076.0,228.0 1076.7,228.7 1077.3,229.0 1078.0,229.0 1078.7,229.0 1079.3,228.9 1080.0,229.4 1080.7,229.4 1081.3,229.4 1082.0,229.3 1082.7,230.0 1083.3,230.0 1084.0,230.0 1084.7,229.4 1085.3,229.5 1086.0,230.2 1086.7,230.2 1087.3,230.2 1088.0,229.9 1088.7,230.1 1089.3,230.1 1090.0,230.1 1090.7,230.3 1091.3,230.9 1092.0,230.9 1092.7,230.9 1093.3,230.1 1094.0,229.8 1094.7,228.8 1095.3,228.8 1096.0,228.7 1096.7,228.8 1097.3,229.1 1098.0,229.1 1098.7,229.1 1099.3,229.0 1100.0,229.0 1100.7,228.5 1101.3,228.5 1102.0,228.9 1102.7,228.9 1103.3,228.9 1104.0,228.7 1104.7,228.7 1105.3,228.7 1106.0,229.1 1106.7,229.1 1107.3,229.1 1108.0,228.9 1108.7,228.9 1109.3,228.9 1110.0,228.9 1110.7,228.9 1111.3,228.6 1112.0,228.6 1112.7,228.8 1113.3,228.8 1114.0,228.8 1114.7,228.4 1115.3,228.4 1116.0,228.7 1116.7,228.7 1117.3,228.7 1118.0,228.5 1118.7,228.5 1119.3,228.3 1120.0,228.3 1120.7,228.3 1121.3,227.3 1122.0,227.7 1122.7,227.7 1123.3,227.7 1124.0,227.7 1124.7,228.0 1125.3,228.0 1126.0,228.0 1126.7,227.7 1127.3,228.0 1128.0,228.0 1128.7,228.0 1129.3,228.0 1130.0,228.7 1130.7,228.7 1131.3,228.9 1132.0,228.9 1132.7,229.1 1133.3,229.4 1134.0,229.4 1134.7,229.4 1135.3,229.3 1136.0,229.6 1136.7,229.6 1137.3,229.6 1138.0,229.9 1138.7,230.1 1139.3,230.1 1140.0,230.1 1140.7,230.2 1141.3,230.2 1142.0,230.2 1142.7,230.1 1143.3,230.1 1144.0,229.9 1144.7,229.5 1145.3,229.6 1146.0,229.6 1146.7,229.6 1147.3,229.6 1148.0,229.6 1148.7,229.6 1149.3,229.6 1150.0,229.6 1150.7,229.3 1151.3,229.4 1152.0,229.4 1152.7,229.4 1153.3,229.6 1154.0,229.6 1154.7,229.6 1155.3,229.6 1156.0,229.1 1156.7,229.1 1157.3,229.8 1158.0,229.8 1158.7,229.8 1159.3,229.7 1160.0,229.7 1160.7,229.8 1161.3,229.8 1162.0,229.8 1162.7,229.2 1163.3,228.9 1164.0,229.4 1164.7,229.4 1165.3,229.4 1166.0,229.5 1166.7,229.5 1167.3,229.5 1168.0,229.2 1168.7,228.8 1169.3,228.8 1170.0,228.7 1170.7,228.7 1171.3,228.7 1172.0,228.5 1172.7,228.5 1173.3,228.2 1174.0,228.2 1174.7,228.2 1175.3,227.8 1176.0,227.8 1176.7,227.8 1177.3,227.8 1178.0,227.7 1178.7,227.7 1179.3,227.9 1180.0,227.9 1180.7,227.9 1181.3,227.9 1182.0,228.3 1182.7,228.3 1183.3,228.3 1184.0,228.1 1184.7,228.1 1185.3,228.1 1186.0,228.9 1186.7,228.9 1187.3,228.9 1188.0,228.6 1188.7,228.3 1189.3,229.1 1190.0,229.1 1190.7,229.1 1191.3,228.2 1192.0,228.6 1192.7,228.6 1193.3,228.7 1194.0,228.7 1194.7,228.7 1195.3,228.2 1196.0,228.2 1196.7,228.2 1197.3,228.7 1198.0,228.7 1198.7,228.7 1199.3,228.2 1200.0,228.3 1200.7,228.3 1201.3,228.4 1202.0,228.4 1202.7,228.4 1203.3,228.2 1204.0,228.7 1204.7,229.7 1205.3,230.6 1206.0,232.3 1206.7,232.9 1207.3,234.1 1208.0,234.3 1208.7,234.5 1209.3,234.6 1210.0,234.8 1210.7,234.8 1211.3,234.9 1212.0,235.0 1212.7,235.0 1213.3,235.0 1214.0,234.9 1214.7,235.0 1215.3,235.0 1216.0,235.0 1216.7,235.0 1217.3,235.0 1218.0,235.0 1218.7,235.0 1219.3,235.0 1220.0,235.0 1220.7,235.0 1221.3,235.0 1222.0,235.0 1222.7,235.0 1223.3,235.1 1224.0,235.1 1224.7,235.1 1225.3,235.1 1226.0,235.1 1226.7,235.1 1227.3,235.1 1228.0,235.1 1228.7,235.1 1229.3,235.2 1230.0,235.2 1230.7,235.2 1231.3,234.5 1232.0,234.3 1232.7,233.7 1233.3,233.4 1234.0,233.5 1234.7,233.5 1235.3,233.6 1236.0,233.6 1236.7,233.6 1237.3,233.7 1238.0,233.7 1238.7,233.9 1239.3,234.1 1240.0,234.4 1240.7,234.6 1241.3,234.9 1242.0,235.3 1242.7,235.4 1243.3,235.5 1244.0,235.5 1244.7,235.7 1245.3,235.7 1246.0,235.8 1246.7,235.9 1247.3,236.0 1248.0,236.0 1248.7,236.0 1249.3,236.0 1250.0,236.1 1250.7,236.1 1251.3,236.1 1252.0,236.1 1252.7,236.1 1253.3,236.1 1254.0,236.1 1254.7,236.1 1255.3,236.2 1256.0,236.2 1256.7,236.2 1257.3,236.2 1257.3,236.4 1256.7,236.4 1256.0,236.4 1255.3,236.4 1254.7,236.5 1254.0,236.5 1253.3,236.5 1252.7,236.5 1252.0,236.5 1251.3,236.5 1250.7,236.5 1250.0,236.5 1249.3,236.6 1248.7,236.6 1248.0,236.6 1247.3,236.6 1246.7,236.7 1246.0,236.8 1245.3,236.9 1244.7,236.9 1244.0,237.1 1243.3,237.1 1242.7,237.2 1242.0,237.3 1241.3,237.7 1240.7,238.0 1240.0,238.2 1239.3,238.5 1238.7,238.7 1238.0,238.9 1237.3,238.9 1236.7,239.0 1236.0,239.0 1235.3,239.0 1234.7,239.1 1234.0,239.1 1233.3,239.2 1232.7,238.9 1232.0,238.3 1231.3,238.1 1230.7,237.4 1230.0,237.4 1229.3,237.4 1228.7,237.5 1228.0,237.5 1227.3,237.5 1226.7,237.5 1226.0,237.5 1225.3,237.5 1224.7,237.5 1224.0,237.5 1223.3,237.5 1222.7,237.6 1222.0,237.6 1221.3,237.6 1220.7,237.6 1220.0,237.6 1219.3,237.6 1218.7,237.6 1218.0,237.6 1217.3,237.6 1216.7,237.6 1216.0,237.6 1215.3,237.6 1214.7,237.6 1214.0,237.7 1213.3,237.6 1212.7,237.6 1212.0,237.6 1211.3,237.7 1210.7,237.8 1210.0,237.8 1209.3,238.0 1208.7,238.1 1208.0,238.3 1207.3,238.5 1206.7,239.7 1206.0,240.3 1205.3,242.0 1204.7,242.9 1204.0,243.9 1203.3,244.4 1202.7,244.2 1202.0,244.2 1201.3,244.2 1200.7,244.3 1200.0,244.3 1199.3,244.4 1198.7,243.9 1198.0,243.9 1197.3,243.9 1196.7,244.4 1196.0,244.4 1195.3,244.4 1194.7,243.9 1194.0,243.9 1193.3,243.9 1192.7,244.0 1192.0,244.0 1191.3,244.4 1190.7,243.5 1190.0,243.5 1189.3,243.5 1188.7,244.3 1188.0,244.0 1187.3,243.7 1186.7,243.7 1186.0,243.7 1185.3,244.5 1184.7,244.5 1184.0,244.5 1183.3,244.3 1182.7,244.3 1182.0,244.3 1181.3,244.7 1180.7,244.7 1180.0,244.7 1179.3,244.7 1178.7,244.9 1178.0,244.9 1177.3,244.8 1176.7,244.8 1176.0,244.8 1175.3,244.8 1174.7,244.4 1174.0,244.4 1173.3,244.4 1172.7,244.1 1172.0,244.1 1171.3,243.9 1170.7,243.9 1170.0,243.9 1169.3,243.8 1168.7,243.8 1168.0,243.4 1167.3,243.1 1166.7,243.1 1166.0,243.1 1165.3,243.2 1164.7,243.2 1164.0,243.2 1163.3,243.7 1162.7,243.4 1162.0,242.8 1161.3,242.8 1160.7,242.8 1160.0,242.9 1159.3,242.9 1158.7,242.8 1158.0,242.8 1157.3,242.8 1156.7,243.5 1156.0,243.5 1155.3,243.0 1154.7,243.0 1154.0,243.0 1153.3,243.0 1152.7,243.2 1152.0,243.2 1151.3,243.2 1150.7,243.3 1150.0,243.0 1149.3,243.0 1148.7,243.0 1148.0,243.0 1147.3,243.0 1146.7,243.0 1146.0,243.0 1145.3,243.0 1144.7,243.1 1144.0,242.7 1143.3,242.5 1142.7,242.5 1142.0,242.4 1141.3,242.4 1140.7,242.4 1140.0,242.5 1139.3,242.5 1138.7,242.5 1138.0,242.7 1137.3,243.0 1136.7,243.0 1136.0,243.0 1135.3,243.3 1134.7,243.2 1134.0,243.2 1133.3,243.2 1132.7,243.5 1132.0,243.7 1131.3,243.7 1130.7,243.9 1130.0,243.9 1129.3,244.6 1128.7,244.6 1128.0,244.6 1127.3,244.6 1126.7,244.9 1126.0,244.6 1125.3,244.6 1124.7,244.6 1124.0,244.9 1123.3,244.9 1122.7,244.9 1122.0,244.9 1121.3,245.3 1120.7,244.3 1120.0,244.3 1119.3,244.3 1118.7,244.1 1118.0,244.1 1117.3,243.9 1116.7,243.9 1116.0,243.9 1115.3,244.2 1114.7,244.2 1114.0,243.8 1113.3,243.8 1112.7,243.8 1112.0,244.0 1111.3,244.0 1110.7,243.7 1110.0,243.7 1109.3,243.7 1108.7,243.7 1108.0,243.7 1107.3,243.5 1106.7,243.5 1106.0,243.5 1105.3,243.9 1104.7,243.9 1104.0,243.9 1103.3,243.7 1102.7,243.7 1102.0,243.7 1101.3,244.1 1100.7,244.1 1100.0,243.6 1099.3,243.6 1098.7,243.5 1098.0,243.5 1097.3,243.5 1096.7,243.8 1096.0,243.9 1095.3,243.8 1094.7,243.8 1094.0,242.8 1093.3,242.5 1092.7,241.7 1092.0,241.7 1091.3,241.7 1090.7,242.3 1090.0,242.5 1089.3,242.5 1088.7,242.5 1088.0,242.7 1087.3,242.4 1086.7,242.4 1086.0,242.4 1085.3,243.1 1084.7,243.2 1084.0,242.6 1083.3,242.6 1082.7,242.6 1082.0,243.3 1081.3,243.2 1080.7,243.2 1080.0,243.2 1079.3,243.7 1078.7,243.6 1078.0,243.6 1077.3,243.6 1076.7,243.9 1076.0,244.6 1075.3,244.9 1074.7,244.6 1074.0,244.6 1073.3,244.6 1072.7,244.4 1072.0,244.4 1071.3,244.4 1070.7,244.7 1070.0,244.7 1069.3,244.4 1068.7,244.4 1068.0,244.4 1067.3,244.8 1066.7,244.8 1066.0,245.0 1065.3,244.5 1064.7,244.5 1064.0,244.5 1063.3,244.6 1062.7,244.2 1062.0,244.2 1061.3,244.2 1060.7,244.0 1060.0,244.0 1059.3,244.0 1058.7,244.5 1058.0,245.2 1057.3,244.3 1056.7,244.3 1056.0,244.3 1055.3,244.6 1054.7,244.4 1054.0,244.4 1053.3,244.4 1052.7,243.9 1052.0,241.7 1051.3,239.4 1050.7,237.3 1050.0,237.3 1049.3,237.3 1048.7,237.3 1048.0,237.3 1047.3,237.2 1046.7,237.1 1046.0,237.1 1045.3,237.1 1044.7,237.2 1044.0,237.1 1043.3,237.1 1042.7,237.1 1042.0,237.0 1041.3,237.0 1040.7,237.0 1040.0,237.0 1039.3,237.0 1038.7,237.0 1038.0,237.0 1037.3,237.0 1036.7,237.0 1036.0,237.0 1035.3,237.0 1034.7,237.0 1034.0,237.0 1033.3,237.1 1032.7,237.1 1032.0,237.1 1031.3,237.1 1030.7,237.1 1030.0,237.2 1029.3,237.3 1028.7,237.5 1028.0,237.7 1027.3,238.0 1026.7,238.2 1026.0,238.3 1025.3,238.3 1024.7,238.3 1024.0,238.6 1023.3,238.6 1022.7,238.6 1022.0,238.7 1021.3,238.7 1020.7,238.8 1020.0,238.5 1019.3,238.2 1018.7,238.0 1018.0,237.7 1017.3,237.6 1016.7,237.6 1016.0,237.6 1015.3,237.6 1014.7,237.6 1014.0,237.6 1013.3,237.6 1012.7,237.7 1012.0,237.7 1011.3,237.7 1010.7,237.7 1010.0,237.7 1009.3,237.8 1008.7,237.8 1008.0,237.8 1007.3,237.8 1006.7,238.1 1006.0,238.5 1005.3,238.7 1004.7,238.9 1004.0,239.2 1003.3,239.2 1002.7,239.6 1002.0,239.7 1001.3,240.4 1000.7,240.5 1000.0,240.6 999.3,241.1 998.7,241.2 998.0,241.2 997.3,241.2 996.7,241.7 996.0,241.9 995.3,241.9 994.7,241.9 994.0,242.0 993.3,242.0 992.7,242.4 992.0,242.4 991.3,242.4 990.7,242.5 990.0,242.5 989.3,242.5 988.7,242.6 988.0,242.6 987.3,242.1 986.7,242.1 986.0,241.9 985.3,241.9 984.7,241.7 984.0,241.7 983.3,241.7 982.7,241.8 982.0,241.8 981.3,242.4 980.7,242.3 980.0,242.0 979.3,242.0 978.7,242.0 978.0,242.3 977.3,242.3 976.7,242.3 976.0,242.3 975.3,242.7 974.7,242.8 974.0,242.8 973.3,242.8 972.7,243.3 972.0,243.3 971.3,243.1 970.7,243.1 970.0,243.1 969.3,243.2 968.7,243.2 968.0,243.2 967.3,243.4 966.7,243.3 966.0,243.3 965.3,243.3 964.7,243.6 964.0,243.6 963.3,243.4 962.7,243.2 962.0,243.2 961.3,243.2 960.7,243.8 960.0,243.6 959.3,243.6 958.7,243.6 958.0,243.9 957.3,243.7 956.7,243.7 956.0,243.7 955.3,243.9 954.7,244.5 954.0,244.5 953.3,244.6 952.7,244.6 952.0,244.6 951.3,244.6 950.7,244.6 950.0,245.0 949.3,244.8 948.7,244.8 948.0,244.8 947.3,244.8 946.7,245.0 946.0,245.4 945.3,246.0 944.7,245.8 944.0,245.5 943.3,244.6 942.7,244.6 942.0,244.6 941.3,245.1 940.7,244.9 940.0,244.7 939.3,244.5 938.7,244.1 938.0,244.1 937.3,244.1 936.7,243.7 936.0,243.7 935.3,243.7 934.7,243.3 934.0,243.3 933.3,243.3 932.7,243.2 932.0,243.2 931.3,243.2 930.7,243.7 930.0,243.1 929.3,243.1 928.7,243.1 928.0,243.1 927.3,243.1 926.7,243.1 926.0,243.1 925.3,243.6 924.7,243.6 924.0,243.3 923.3,243.3 922.7,243.3 922.0,244.0 921.3,243.5 920.7,243.5 920.0,243.5 919.3,243.8 918.7,243.8 918.0,243.6 917.3,243.6 916.7,243.6 916.0,243.7 915.3,243.6 914.7,243.6 914.0,243.6 913.3,243.2 912.7,243.2 912.0,243.2 911.3,243.5 910.7,243.5 910.0,243.5 909.3,243.0 908.7,243.0 908.0,243.0 907.3,243.3 906.7,243.3 906.0,243.1 905.3,243.1 904.7,243.1 904.0,243.8 903.3,243.8 902.7,243.8 902.0,243.8 901.3,243.8 900.7,243.9 900.0,243.9 899.3,243.9 898.7,244.2 898.0,244.2 897.3,244.2 896.7,244.7 896.0,244.7 895.3,244.7 894.7,244.7 894.0,244.7 893.3,244.7 892.7,244.7 892.0,244.7 891.3,244.7 890.7,244.7 890.0,244.5 889.3,244.5 888.7,244.5 888.0,244.6 887.3,244.6 886.7,244.0 886.0,244.0 885.3,243.8 884.7,243.7 884.0,243.7 883.3,243.5 882.7,243.5 882.0,243.5 881.3,243.1 880.7,243.1 880.0,243.1 879.3,243.1 878.7,243.3 878.0,243.3 877.3,243.3 876.7,243.7 876.0,243.5 875.3,243.5 874.7,243.5 874.0,243.5 873.3,243.5 872.7,243.8 872.0,243.6 871.3,243.6 870.7,243.6 870.0,243.5 869.3,243.5 868.7,243.5 868.0,243.8 867.3,243.8 866.7,243.8 866.0,243.6 865.3,243.6 864.7,243.2 864.0,243.2 863.3,243.2 862.7,243.4 862.0,243.0 861.3,243.0 860.7,242.9 860.0,242.9 859.3,242.9 858.7,242.7 858.0,242.7 857.3,242.7 856.7,243.2 856.0,242.9 855.3,242.4 854.7,242.4 854.0,242.4 853.3,242.1 852.7,242.1 852.0,242.1 851.3,242.4 850.7,242.5 850.0,243.3 849.3,243.4 848.7,243.4 848.0,243.4 847.3,244.5 846.7,244.5 846.0,243.9 845.3,243.9 844.7,243.9 844.0,244.6 843.3,244.3 842.7,244.3 842.0,244.3 841.3,244.3 840.7,244.3 840.0,244.1 839.3,244.1 838.7,244.1 838.0,244.1 837.3,244.4 836.7,244.3 836.0,244.3 835.3,243.6 834.7,243.6 834.0,243.6 833.3,243.8 832.7,243.8 832.0,243.6 831.3,243.6 830.7,243.6 830.0,243.1 829.3,242.8 828.7,242.8 828.0,242.8 827.3,243.2 826.7,243.2 826.0,243.3 825.3,243.3 824.7,243.3 824.0,243.6 823.3,243.4 822.7,243.2 822.0,243.2 821.3,243.2 820.7,243.2 820.0,243.4 819.3,243.4 818.7,243.6 818.0,243.1 817.3,243.1 816.7,243.1 816.0,243.2 815.3,243.2 814.7,243.3 814.0,243.1 813.3,242.8 812.7,242.8 812.0,242.8 811.3,243.3 810.7,243.2 810.0,243.2 809.3,243.1 808.7,243.0 808.0,243.0 807.3,242.2 806.7,242.0 806.0,242.0 805.3,241.3 804.7,241.3 804.0,241.3 803.3,241.9 802.7,241.7 802.0,241.7 801.3,241.7 800.7,242.4 800.0,242.7 799.3,242.9 798.7,243.3 798.0,243.3 797.3,243.7 796.7,243.7 796.0,243.7 795.3,244.2 794.7,244.3 794.0,244.3 793.3,244.4 792.7,244.5 792.0,244.5 791.3,244.5 790.7,244.7 790.0,244.7 789.3,245.2 788.7,245.2 788.0,245.2 787.3,245.5 786.7,245.5 786.0,245.5 785.3,244.7 784.7,244.7 784.0,244.7 783.3,245.1 782.7,244.6 782.0,244.4 781.3,244.4 780.7,244.4 780.0,245.6 779.3,245.2 778.7,244.9 778.0,244.8 777.3,244.8 776.7,244.7 776.0,244.5 775.3,244.5 774.7,244.5 774.0,245.3 773.3,244.7 772.7,244.7 772.0,244.7 771.3,244.7 770.7,245.1 770.0,244.8 769.3,244.8 768.7,244.8 768.0,244.9 767.3,244.9 766.7,244.9 766.0,245.3 765.3,245.3 764.7,245.3 764.0,245.4 763.3,244.8 762.7,244.8 762.0,244.8 761.3,244.9 760.7,244.9 760.0,244.2 759.3,243.7 758.7,243.7 758.0,243.4 757.3,243.4 756.7,243.4 756.0,243.4 755.3,243.1 754.7,243.1 754.0,243.1 753.3,242.9 752.7,242.9 752.0,242.9 751.3,243.5 750.7,243.0 750.0,242.8 749.3,242.8 748.7,242.8 748.0,242.9 747.3,242.9 746.7,242.9 746.0,243.6 745.3,243.6 744.7,243.9 744.0,244.2 743.3,243.6 742.7,243.6 742.0,243.6 741.3,243.7 740.7,243.7 740.0,243.8 739.3,243.9 738.7,243.9 738.0,244.0 737.3,244.0 736.7,244.2 736.0,244.2 735.3,244.3 734.7,243.9 734.0,243.9 733.3,243.9 732.7,243.9 732.0,243.3 731.3,242.9 730.7,242.9 730.0,242.7 729.3,242.7 728.7,242.7 728.0,242.7 727.3,242.3 726.7,242.0 726.0,242.0 725.3,242.0 724.7,242.2 724.0,242.2 723.3,242.2 722.7,242.4 722.0,242.3 721.3,242.2 720.7,242.2 720.0,242.2 719.3,242.6 718.7,242.4 718.0,242.4 717.3,242.4 716.7,242.8 716.0,242.8 715.3,242.3 714.7,242.2 714.0,242.2 713.3,242.2 712.7,242.6 712.0,242.6 711.3,242.6 710.7,242.7 710.0,242.4 709.3,242.3 708.7,242.3 708.0,242.0 707.3,241.6 706.7,241.6 706.0,241.4 705.3,241.3 704.7,241.3 704.0,241.3 703.3,241.6 702.7,241.5 702.0,241.4 701.3,241.4 700.7,241.4 700.0,241.3 699.3,241.1 698.7,241.1 698.0,241.1 697.3,241.4 696.7,241.5 696.0,241.5 695.3,241.3 694.7,241.3 694.0,241.3 693.3,241.6 692.7,241.6 692.0,242.0 691.3,242.2 690.7,241.9 690.0,241.9 689.3,241.9 688.7,242.7 688.0,242.6 687.3,242.6 686.7,242.2 686.0,242.2 685.3,242.2 684.7,242.5 684.0,242.5 683.3,242.5 682.7,242.5 682.0,242.1 681.3,242.0 680.7,242.0 680.0,242.0 679.3,242.2 678.7,242.2 678.0,242.2 677.3,241.9 676.7,241.9 676.0,241.9 675.3,242.2 674.7,242.2 674.0,242.2 673.3,242.4 672.7,242.1 672.0,242.1 671.3,242.1 670.7,242.8 670.0,242.8 669.3,242.8 668.7,242.8 668.0,243.0 667.3,243.1 666.7,243.0 666.0,242.7 665.3,242.7 664.7,242.7 664.0,243.5 663.3,243.5 662.7,243.2 662.0,243.2 661.3,243.2 660.7,243.3 660.0,243.5 659.3,242.9 658.7,242.9 658.0,242.4 657.3,242.4 656.7,242.4 656.0,242.6 655.3,242.0 654.7,242.0 654.0,242.0 653.3,242.1 652.7,242.0 652.0,242.0 651.3,241.9 650.7,241.4 650.0,241.4 649.3,241.3 648.7,241.3 648.0,241.3 647.3,241.7 646.7,241.9 646.0,241.4 645.3,241.3 644.7,241.3 644.0,241.3 643.3,241.4 642.7,241.6 642.0,241.6 641.3,241.7 640.7,241.7 640.0,241.7 639.3,242.2 638.7,242.2 638.0,242.0 637.3,242.0 636.7,242.0 636.0,241.9 635.3,241.9 634.7,241.9 634.0,242.1 633.3,242.2 632.7,242.2 632.0,242.2 631.3,241.9 630.7,241.9 630.0,241.9 629.3,242.1 628.7,242.1 628.0,242.2 627.3,242.2 626.7,242.2 626.0,242.4 625.3,242.1 624.7,242.1 624.0,242.1 623.3,242.2 622.7,242.3 622.0,242.0 621.3,242.0 620.7,242.0 620.0,242.6 619.3,242.7 618.7,243.0 618.0,243.1 617.3,243.1 616.7,243.1 616.0,243.1 615.3,243.0 614.7,243.0 614.0,242.9 613.3,242.7 612.7,242.7 612.0,242.7 611.3,242.7 610.7,242.7 610.0,242.7 609.3,242.7 608.7,242.7 608.0,242.5 607.3,242.5 606.7,242.4 606.0,242.4 605.3,242.4 604.7,242.3 604.0,242.1 603.3,242.1 602.7,242.1 602.0,242.1 601.3,242.0 600.7,242.0 600.0,242.0 599.3,242.7 598.7,243.5 598.0,243.7 597.3,244.0 596.7,243.5 596.0,243.5 595.3,243.5 594.7,243.4 594.0,243.4 593.3,243.4 592.7,243.8 592.0,244.1 591.3,244.1 590.7,243.9 590.0,243.9 589.3,243.9 588.7,244.5 588.0,244.3 587.3,244.3 586.7,244.3 586.0,244.5 585.3,244.0 584.7,244.0 584.0,244.0 583.3,243.9 582.7,243.7 582.0,243.7 581.3,243.7 580.7,243.1 580.0,243.1 579.3,242.9 578.7,242.9 578.0,242.8 577.3,242.8 576.7,242.8 576.0,242.9 575.3,243.0 574.7,243.2 574.0,243.1 573.3,243.0 572.7,243.0 572.0,243.0 571.3,242.7 570.7,242.7 570.0,242.7 569.3,243.4 568.7,243.4 568.0,243.0 567.3,243.0 566.7,243.0 566.0,243.2 565.3,243.2 564.7,243.2 564.0,243.5 563.3,243.7 562.7,243.7 562.0,243.7 561.3,243.7 560.7,243.9 560.0,243.9 559.3,244.2 558.7,244.2 558.0,244.4 557.3,244.0 556.7,243.9 556.0,243.4 555.3,243.3 554.7,242.9 554.0,242.6 553.3,242.6 552.7,242.6 552.0,242.0 551.3,242.0 550.7,241.9 550.0,241.9 549.3,241.9 548.7,242.2 548.0,242.2 547.3,242.2 546.7,242.2 546.0,242.2 545.3,242.2 544.7,242.4 544.0,242.9 543.3,242.9 542.7,242.8 542.0,242.8 541.3,242.8 540.7,242.8 540.0,242.8 539.3,243.2 538.7,243.2 538.0,243.4 537.3,243.1 536.7,243.1 536.0,243.1 535.3,243.3 534.7,243.2 534.0,243.2 533.3,243.2 532.7,243.6 532.0,243.5 531.3,243.5 530.7,243.5 530.0,243.1 529.3,243.1 528.7,243.1 528.0,243.3 527.3,243.5 526.7,243.4 526.0,243.4 525.3,243.0 524.7,242.7 524.0,242.7 523.3,242.7 522.7,243.0 522.0,243.0 521.3,243.0 520.7,242.7 520.0,242.7 519.3,242.7 518.7,243.1 518.0,243.7 517.3,243.7 516.7,243.8 516.0,243.8 515.3,243.7 514.7,243.7 514.0,243.7 513.3,244.1 512.7,244.2 512.0,244.2 511.3,245.1 510.7,245.1 510.0,245.2 509.3,245.0 508.7,245.0 508.0,245.0 507.3,245.6 506.7,245.4 506.0,245.4 505.3,245.4 504.7,245.2 504.0,245.2 503.3,245.2 502.7,245.4 502.0,245.4 501.3,245.5 500.7,244.9 500.0,244.9 499.3,244.8 498.7,244.5 498.0,244.4 497.3,244.4 496.7,244.4 496.0,244.7 495.3,244.3 494.7,244.3 494.0,244.3 493.3,244.7 492.7,244.3 492.0,244.3 491.3,244.3 490.7,244.4 490.0,245.0 489.3,244.6 488.7,244.6 488.0,244.6 487.3,244.6 486.7,245.1 486.0,244.9 485.3,244.9 484.7,244.6 484.0,244.6 483.3,244.6 482.7,244.4 482.0,244.4 481.3,244.4 480.7,244.2 480.0,244.0 479.3,244.0 478.7,244.0 478.0,243.7 477.3,243.2 476.7,242.8 476.0,242.5 475.3,242.0 474.7,241.9 474.0,241.6 473.3,241.6 472.7,241.6 472.0,241.3 471.3,241.3 470.7,241.3 470.0,241.4 469.3,241.5 468.7,241.5 468.0,241.5 467.3,241.3 466.7,241.3 466.0,241.3 465.3,241.4 464.7,241.4 464.0,241.4 463.3,241.5 462.7,241.9 462.0,241.9 461.3,242.0 460.7,242.0 460.0,242.2 459.3,242.1 458.7,242.1 458.0,242.1 457.3,243.0 456.7,242.9 456.0,242.9 455.3,242.7 454.7,242.7 454.0,242.7 453.3,242.9 452.7,242.8 452.0,242.5 451.3,242.5 450.7,242.5 450.0,242.2 449.3,242.2 448.7,242.2 448.0,242.2 447.3,242.2 446.7,242.3 446.0,242.3 445.3,242.3 444.7,242.3 444.0,242.4 443.3,242.7 442.7,242.2 442.0,242.2 441.3,242.2 440.7,242.4 440.0,242.4 439.3,242.7 438.7,242.5 438.0,242.5 437.3,242.5 436.7,242.7 436.0,242.7 435.3,242.9 434.7,243.3 434.0,242.7 433.3,242.7 432.7,242.6 432.0,242.6 431.3,242.6 430.7,243.0 430.0,243.0 429.3,242.7 428.7,242.5 428.0,242.5 427.3,242.5 426.7,242.6 426.0,242.2 425.3,242.2 424.7,242.1 424.0,242.1 423.3,242.1 422.7,242.1 422.0,241.7 421.3,241.7 420.7,241.5 420.0,241.5 419.3,241.5 418.7,241.5 418.0,241.4 417.3,241.4 416.7,241.3 416.0,241.0 415.3,241.0 414.7,241.0 414.0,241.6 413.3,241.3 412.7,241.2 412.0,241.2 411.3,241.2 410.7,241.3 410.0,241.8 409.3,241.7 408.7,241.7 408.0,241.7 407.3,242.1 406.7,242.0 406.0,242.0 405.3,242.0 404.7,242.0 404.0,242.0 403.3,242.3 402.7,242.3 402.0,241.9 401.3,241.9 400.7,241.9 400.0,242.0 399.3,242.0 398.7,242.0 398.0,241.9 397.3,241.9 396.7,241.9 396.0,242.2 395.3,241.5 394.7,241.5 394.0,241.5 393.3,241.9 392.7,242.0 392.0,242.0 391.3,242.0 390.7,242.0 390.0,242.1 389.3,242.1 388.7,241.9 388.0,241.7 387.3,241.7 386.7,241.7 386.0,241.8 385.3,241.8 384.7,242.1 384.0,242.7 383.3,242.7 382.7,242.3 382.0,242.3 381.3,242.3 380.7,242.4 380.0,242.4 379.3,243.0 378.7,243.1 378.0,242.9 377.3,242.2 376.7,242.1 376.0,242.1" fill="#6666de"/></svg>
<div class="a" style="left:1268.4px;top:85.9px;width:11.6px;height:542.1px;background:#f0f0f0;"></div>
<div class="a" style="left:1270.2px;top:96.2px;width:8.8px;height:520px;background:#cdcdcd;"></div>
<svg class="a" style="left:1271px;top:89.2px;" width="7" height="4.5" viewBox="0 0 7 4.5"><path d="M0.6 4L3.5 1L6.4 4" fill="none" stroke="#505050" stroke-width="1.3"/></svg>
<svg class="a" style="left:1271px;top:620.6px;" width="7" height="4.5" viewBox="0 0 7 4.5"><path d="M0.6 0.6L3.5 3.6L6.4 0.6" fill="none" stroke="#505050" stroke-width="1.3"/></svg>
<div class="a" style="left:0px;top:628px;width:1280px;height:12.5px;background:#f0f0f0;"></div>
<div class="a" style="left:102.5px;top:629px;width:928.5px;height:11px;background:#cdcdcd;"></div>
<svg class="a" style="left:93.5px;top:631px;" width="4.5" height="7" viewBox="0 0 4.5 7"><path d="M3.8 0.6L0.9 3.5L3.8 6.4" fill="none" stroke="#333" stroke-width="1.2"/></svg>
<svg class="a" style="left:1261px;top:631px;" width="4.5" height="7" viewBox="0 0 4.5 7"><path d="M0.7 0.6L3.6 3.5L0.7 6.4" fill="none" stroke="#333" stroke-width="1.2"/></svg>
<div class="a" style="left:0px;top:640.5px;width:1280px;height:1px;background:#d9d9d9;"></div>
<div class="a" style="left:0px;top:641.5px;width:1280px;height:35px;background:#f0f0f0;"></div>
<div class="a" style="left:0px;top:676.5px;width:1280px;height:1.2px;background:#bdbdbd;"></div>
<div class="a" style="left:0px;top:677.7px;width:1280px;height:2.3px;background:#f0f0f0;"></div>
<div class="grab" style="left:2.5px;top:643px;height:32px"></div>
<div class="t" style="left:8.00px;top:644.81px;font-size:8.8px;color:#000;transform:scaleX(0.9081);transform-origin:0 50%;">Project Rate (Hz):</div>
<div class="a" style="left:8px;top:657px;width:53.5px;height:14.5px;background:#fff;border:1px solid #8a8a8a"></div>
<div class="t" style="left:12.20px;top:660.71px;font-size:8.8px;color:#222;transform:scaleX(0.9317);transform-origin:0 50%;">44100</div>
<svg class="a" style="left:51.5px;top:662.8px;" width="6.2" height="3.6" viewBox="0 0 6.2 3.6"><path d="M0.5 0.5L3.1 3.1L5.7 0.5" fill="none" stroke="#5a5a5a" stroke-width="0.9"/></svg>
<div class="a" style="left:75.2px;top:655px;width:1px;height:17px;background:#b0b0b0;"></div>
<div class="t" style="left:80.00px;top:644.81px;font-size:8.8px;color:#000;transform:scaleX(0.9254);transform-origin:0 50%;">Snap To:</div>
<div class="a" style="left:80px;top:657px;width:48.5px;height:14.5px;background:#e1e1e1;border:1px solid #adadad"></div>
<div class="t" style="left:83.00px;top:660.71px;font-size:8.8px;color:#222;transform:scaleX(0.9503);transform-origin:0 50%;">Off</div>
<svg class="a" style="left:119px;top:662.8px;" width="6.2" height="3.6" viewBox="0 0 6.2 3.6"><path d="M0.5 0.5L3.1 3.1L5.7 0.5" fill="none" stroke="#5a5a5a" stroke-width="0.9"/></svg>
<div class="t" style="left:133.00px;top:644.81px;font-size:8.8px;color:#000;transform:scaleX(0.9049);transform-origin:0 50%;">Selection Start:</div>
<div class="tc" style="left:133px;top:657px;width:97.5px"></div><div class="t" style="left:135.70px;top:659.56px;font-size:10.4px;color:#2c2ca0;transform:scaleX(0.7780);transform-origin:0 50%;-webkit-text-stroke:0.35px;">0</div><div class="t" style="left:142.20px;top:659.56px;font-size:10.4px;color:#2c2ca0;transform:scaleX(0.7780);transform-origin:0 50%;-webkit-text-stroke:0.35px;">0</div><div class="t" style="left:157.40px;top:659.56px;font-size:10.4px;color:#2c2ca0;transform:scaleX(0.7780);transform-origin:0 50%;-webkit-text-stroke:0.35px;">0</div><div class="t" style="left:163.80px;top:659.56px;font-size:10.4px;color:#2c2ca0;transform:scaleX(0.7780);transform-origin:0 50%;-webkit-text-stroke:0.35px;">0</div><div class="t" style="left:181.80px;top:659.56px;font-size:10.4px;color:#2c2ca0;transform:scaleX(0.7780);transform-origin:0 50%;-webkit-text-stroke:0.35px;">0</div><div class="t" style="left:188.40px;top:659.56px;font-size:10.4px;color:#2c2ca0;transform:scaleX(0.7780);transform-origin:0 50%;-webkit-text-stroke:0.35px;">0</div><div class="t" style="left:198.70px;top:659.56px;font-size:10.4px;color:#2c2ca0;transform:scaleX(0.7780);transform-origin:0 50%;-webkit-text-stroke:0.35px;">0</div><div class="t" style="left:205.10px;top:659.56px;font-size:10.4px;color:#2c2ca0;transform:scaleX(0.7780);transform-origin:0 50%;-webkit-text-stroke:0.35px;">0</div><div class="t" style="left:211.60px;top:659.56px;font-size:10.4px;color:#2c2ca0;transform:scaleX(0.7780);transform-origin:0 50%;-webkit-text-stroke:0.35px;">0</div><div class="t" style="left:195.20px;top:659.56px;font-size:10.4px;color:#3030a8;transform:scaleX(0.7614);transform-origin:0 50%;">.</div><div class="t" style="left:150.20px;top:660.03px;font-size:9.4px;color:#1a1a1a;transform:scaleX(0.8416);transform-origin:0 50%;">h</div><div class="t" style="left:172.40px;top:660.03px;font-size:9.4px;color:#1a1a1a;transform:scaleX(0.8939);transform-origin:0 50%;">m</div><div class="t" style="left:219.20px;top:660.03px;font-size:9.4px;color:#1a1a1a;transform:scaleX(0.8936);transform-origin:0 50%;">s</div><div class="a" style="left:225px;top:658.2px;width:5.2px;height:11.8px;background:#d4d4d4;border:1px solid #9c9c9c;border-right-color:#f4f4f4;border-bottom-color:#f4f4f4"></div><svg class="a" style="left:225.6px;top:662.8px;" width="4.2" height="3" viewBox="0 0 4.2 3"><path d="M0 0H4.2L2.1 3Z" fill="#111"/></svg>
<svg class="a" style="left:235px;top:644.3px;" width="9" height="9" viewBox="0 0 9 9"><circle cx="4.5" cy="4.5" r="3.7" fill="#fff" stroke="#333" stroke-width="0.9"/><circle cx="4.5" cy="4.5" r="2" fill="#222"/></svg>
<div class="t" style="left:246.00px;top:644.81px;font-size:8.8px;color:#000;transform:scaleX(0.9260);transform-origin:0 50%;">End</div>
<svg class="a" style="left:266.7px;top:644.3px;" width="9" height="9" viewBox="0 0 9 9"><circle cx="4.5" cy="4.5" r="3.7" fill="#fff" stroke="#333" stroke-width="0.9"/></svg>
<div class="t" style="left:278.00px;top:644.81px;font-size:8.8px;color:#000;transform:scaleX(0.9288);transform-origin:0 50%;">Length</div>
<div class="tc" style="left:235.5px;top:657px;width:97.5px"></div><div class="t" style="left:238.20px;top:659.56px;font-size:10.4px;color:#2c2ca0;transform:scaleX(0.7780);transform-origin:0 50%;-webkit-text-stroke:0.35px;">0</div><div class="t" style="left:244.70px;top:659.56px;font-size:10.4px;color:#2c2ca0;transform:scaleX(0.7780);transform-origin:0 50%;-webkit-text-stroke:0.35px;">0</div><div class="t" style="left:259.90px;top:659.56px;font-size:10.4px;color:#2c2ca0;transform:scaleX(0.7780);transform-origin:0 50%;-webkit-text-stroke:0.35px;">0</div><div class="t" style="left:266.30px;top:659.56px;font-size:10.4px;color:#2c2ca0;transform:scaleX(0.7780);transform-origin:0 50%;-webkit-text-stroke:0.35px;">0</div><div class="t" style="left:284.30px;top:659.56px;font-size:10.4px;color:#2c2ca0;transform:scaleX(0.7780);transform-origin:0 50%;-webkit-text-stroke:0.35px;">0</div><div class="t" style="left:290.90px;top:659.56px;font-size:10.4px;color:#2c2ca0;transform:scaleX(0.7780);transform-origin:0 50%;-webkit-text-stroke:0.35px;">0</div><div class="t" style="left:301.20px;top:659.56px;font-size:10.4px;color:#2c2ca0;transform:scaleX(0.7780);transform-origin:0 50%;-webkit-text-stroke:0.35px;">0</div><div class="t" style="left:307.60px;top:659.56px;font-size:10.4px;color:#2c2ca0;transform:scaleX(0.7780);transform-origin:0 50%;-webkit-text-stroke:0.35px;">0</div><div class="t" style="left:314.10px;top:659.56px;font-size:10.4px;color:#2c2ca0;transform:scaleX(0.7780);transform-origin:0 50%;-webkit-text-stroke:0.35px;">0</div><div class="t" style="left:297.70px;top:659.56px;font-size:10.4px;color:#3030a8;transform:scaleX(0.7614);transform-origin:0 50%;">.</div><div class="t" style="left:252.70px;top:660.03px;font-size:9.4px;color:#1a1a1a;transform:scaleX(0.8416);transform-origin:0 50%;">h</div><div class="t" style="left:274.90px;top:660.03px;font-size:9.4px;color:#1a1a1a;transform:scaleX(0.8939);transform-origin:0 50%;">m</div><div class="t" style="left:321.70px;top:660.03px;font-size:9.4px;color:#1a1a1a;transform:scaleX(0.8936);transform-origin:0 50%;">s</div><div class="a" style="left:327.5px;top:658.2px;width:5.2px;height:11.8px;background:#d4d4d4;border:1px solid #9c9c9c;border-right-color:#f4f4f4;border-bottom-color:#f4f4f4"></div><svg class="a" style="left:328.1px;top:662.8px;" width="4.2" height="3" viewBox="0 0 4.2 3"><path d="M0 0H4.2L2.1 3Z" fill="#111"/></svg>
<div class="a" style="left:338.5px;top:655px;width:1px;height:17px;background:#b0b0b0;"></div>
<div class="t" style="left:343.00px;top:644.81px;font-size:8.8px;color:#000;transform:scaleX(0.9198);transform-origin:0 50%;">Audio Position:</div>
<div class="tc" style="left:343px;top:657px;width:97.5px"></div><div class="t" style="left:345.70px;top:659.56px;font-size:10.4px;color:#2c2ca0;transform:scaleX(0.7780);transform-origin:0 50%;-webkit-text-stroke:0.35px;">0</div><div class="t" style="left:352.20px;top:659.56px;font-size:10.4px;color:#2c2ca0;transform:scaleX(0.7780);transform-origin:0 50%;-webkit-text-stroke:0.35px;">0</div><div class="t" style="left:367.40px;top:659.56px;font-size:10.4px;color:#2c2ca0;transform:scaleX(0.7780);transform-origin:0 50%;-webkit-text-stroke:0.35px;">0</div><div class="t" style="left:373.80px;top:659.56px;font-size:10.4px;color:#2c2ca0;transform:scaleX(0.7780);transform-origin:0 50%;-webkit-text-stroke:0.35px;">0</div><div class="t" style="left:391.80px;top:659.56px;font-size:10.4px;color:#2c2ca0;transform:scaleX(0.7780);transform-origin:0 50%;-webkit-text-stroke:0.35px;">0</div><div class="t" style="left:398.40px;top:659.56px;font-size:10.4px;color:#2c2ca0;transform:scaleX(0.7780);transform-origin:0 50%;-webkit-text-stroke:0.35px;">0</div><div class="t" style="left:408.70px;top:659.56px;font-size:10.4px;color:#2c2ca0;transform:scaleX(0.7780);transform-origin:0 50%;-webkit-text-stroke:0.35px;">0</div><div class="t" style="left:415.10px;top:659.56px;font-size:10.4px;color:#2c2ca0;transform:scaleX(0.7780);transform-origin:0 50%;-webkit-text-stroke:0.35px;">0</div><div class="t" style="left:421.60px;top:659.56px;font-size:10.4px;color:#2c2ca0;transform:scaleX(0.7780);transform-origin:0 50%;-webkit-text-stroke:0.35px;">0</div><div class="t" style="left:405.20px;top:659.56px;font-size:10.4px;color:#3030a8;transform:scaleX(0.7614);transform-origin:0 50%;">.</div><div class="t" style="left:360.20px;top:660.03px;font-size:9.4px;color:#1a1a1a;transform:scaleX(0.8416);transform-origin:0 50%;">h</div><div class="t" style="left:382.40px;top:660.03px;font-size:9.4px;color:#1a1a1a;transform:scaleX(0.8939);transform-origin:0 50%;">m</div><div class="t" style="left:429.20px;top:660.03px;font-size:9.4px;color:#1a1a1a;transform:scaleX(0.8936);transform-origin:0 50%;">s</div><div class="a" style="left:435px;top:658.2px;width:5.2px;height:11.8px;background:#d4d4d4;border:1px solid #9c9c9c;border-right-color:#f4f4f4;border-bottom-color:#f4f4f4"></div><svg class="a" style="left:435.6px;top:662.8px;" width="4.2" height="3" viewBox="0 0 4.2 3"><path d="M0 0H4.2L2.1 3Z" fill="#111"/></svg>
<div class="a" id="dlg"></div>
<div class="a" style="left:5px;top:29px;width:371px;height:20px;background:#0078d7;"></div>
<svg class="a" style="left:11.4px;top:34.2px;" width="9.6" height="8.9" viewBox="0 0 10 9.2"><path d="M1.3 7.4V4.9A3.7 3.9 0 0 1 8.7 4.9V7.4" fill="none" stroke="#1b2375" stroke-width="2.3" stroke-linecap="butt"/><ellipse cx="5" cy="6" rx="2.4" ry="3" fill="#f5b800"/><ellipse cx="5" cy="4.6" rx="1.6" ry="1.2" fill="#f8cf30"/><ellipse cx="5" cy="6.4" rx="1.7" ry="0.9" fill="#e2481c"/><rect x="0.1" y="4.2" width="2.5" height="4.3" rx="1.1" fill="#1b2375"/><rect x="7.4" y="4.2" width="2.5" height="4.3" rx="1.1" fill="#1b2375"/></svg>
<div class="t" style="left:25.00px;top:35.71px;font-size:8.8px;color:#fff;transform:scaleX(0.9018);transform-origin:0 50%;">Export Audio</div>
<svg class="a" style="left:361px;top:35px;" width="8" height="8" viewBox="0 0 8 8"><path d="M0.5 0.5L7.5 7.5M7.5 0.5L0.5 7.5" stroke="#fff" stroke-width="1" fill="none"/></svg>
<div class="t" style="left:41.00px;top:57.11px;font-size:8.8px;color:#000;transform:scaleX(0.8019);transform-origin:0 50%;">Save in:</div>
<div class="a" style="left:71px;top:54px;width:175px;height:14.5px;background:#fff;border:1px solid #7a7a7a"></div>
<svg class="a" style="left:75px;top:56px;" width="11" height="11" viewBox="0 0 11 11"><path d="M3.6 0.5H7.4V5H10.3L5.5 10.2L0.7 5H3.6Z" fill="#2a8de0" stroke="#1c6fc0" stroke-width="0.6"/></svg>
<div class="t" style="left:89.00px;top:57.11px;font-size:8.8px;color:#000;transform:scaleX(0.8039);transform-origin:0 50%;">Downloads</div>
<svg class="a" style="left:236.5px;top:60px;" width="6" height="3.6" viewBox="0 0 6 3.6"><path d="M0.5 0.5L3 3.1L5.5 0.5" fill="none" stroke="#555" stroke-width="0.9"/></svg>
<svg class="a" style="left:254.6px;top:55.6px;" width="12" height="12" viewBox="0 0 12 12"><defs><radialGradient id="bk" cx="0.35" cy="0.3" r="0.8"><stop offset="0" stop-color="#2e2e2e"/><stop offset="0.6" stop-color="#5c5c5c"/><stop offset="1" stop-color="#a0a0a0"/></radialGradient></defs><circle cx="6" cy="6" r="5.7" fill="#e4e4e4"/><circle cx="6" cy="6" r="5" fill="url(#bk)"/><path d="M2.4 6L5.6 3.2V5H9.2V7H5.6V8.8Z" fill="#f4f4f4"/></svg>
<svg class="a" style="left:269.6px;top:55px;" width="12" height="12" viewBox="0 0 12 12"><path d="M1 5.6L3.6 4.6L4.6 5.4L9.8 3.6L10.6 9.2L2.2 12Z" fill="#f3e27a" stroke="#d9c24e" stroke-width="0.5"/><path d="M1.6 7.2L8.6 4.9L10.6 9.2L2.2 12Z" fill="#f7ec9c"/><path d="M5.2 10.4C7 8.6 7.6 6 7.3 3.8L5.6 4.4L7.6 0.8L10 4L8.7 3.7C9 6.4 8.2 9.2 6.4 10.8Z" fill="#2fa82a" stroke="#1f7f1c" stroke-width="0.4"/></svg>
<svg class="a" style="left:285.6px;top:56px;" width="12" height="11" viewBox="0 0 12 11"><path d="M0.8 3.6L3.4 2.7L4.4 3.5L9.4 1.8L10 7.2L1.8 10Z" fill="#f3e27a" stroke="#d9c24e" stroke-width="0.5"/><path d="M1.3 5.2L8.4 3L10 7.2L1.8 10Z" fill="#f8eea4"/><circle cx="9.2" cy="3.6" r="2" fill="#f0802a"/><circle cx="9.3" cy="3.5" r="0.9" fill="#ffd8a8"/></svg>
<svg class="a" style="left:301.6px;top:56.3px;" width="11" height="10" viewBox="0 0 11 10"><rect x="0.6" y="0.6" width="9.4" height="8.6" rx="0.6" fill="#fff" stroke="#2f6fcf" stroke-width="1"/><rect x="0.4" y="0.3" width="9.8" height="2" rx="0.5" fill="#2a66c8"/><circle cx="2.9" cy="4.3" r="0.75" fill="#3555b5"/><circle cx="5.3" cy="4.3" r="0.75" fill="#3a6fd0"/><circle cx="7.7" cy="4.3" r="0.75" fill="#3fa34a"/><circle cx="2.9" cy="6.9" r="0.75" fill="#d8402a"/><circle cx="5.3" cy="6.9" r="0.75" fill="#1c2a80"/><circle cx="7.7" cy="6.9" r="0.75" fill="#e0a820"/></svg>
<svg class="a" style="left:313px;top:60px;" width="5" height="3" viewBox="0 0 5 3"><path d="M0 0H5L2.5 3Z" fill="#111"/></svg>
<svg class="a" style="left:28px;top:78px;" width="22" height="20" viewBox="0 0 22 20"><polygon points="14.30,2.90 14.90,8.30 20.05,8.45 14.90,12.10 14.70,18.00 10.50,14.80 4.15,17.80 7.20,12.10 4.15,8.45 10.85,8.30" fill="#2198f0"/><path d="M7 3.3H10.6M6.6 5.6H9.6M1.8 12.5H5M2.2 14.8H4.6" stroke="#bfe0f8" stroke-width="0.7"/></svg>
<div class="t" style="left:15.70px;top:100.81px;font-size:8.8px;color:#000;transform:scaleX(0.8600);transform-origin:0 50%;">Quick access</div>
<svg class="a" style="left:28px;top:121px;" width="21" height="15" viewBox="0 0 21 15"><defs><linearGradient id="dg" x1="0" y1="0" x2="1" y2="1"><stop offset="0" stop-color="#3aabf6"/><stop offset="1" stop-color="#1590ea"/></linearGradient></defs><rect x="0.4" y="0.3" width="19.4" height="13.4" fill="url(#dg)"/><rect x="0.4" y="12.3" width="19.4" height="1.4" fill="#1580d2"/></svg>
<div class="t" style="left:23.95px;top:140.81px;font-size:8.8px;color:#000;transform:scaleX(0.8828);transform-origin:0 50%;">Desktop</div>
<svg class="a" style="left:28px;top:159px;" width="21" height="18" viewBox="0 0 21 18"><path d="M1 1H7L8.6 2.6H19.6V16.4H1Z" fill="#f9dc7a"/><rect x="2" y="1.4" width="2" height="1.4" fill="#f0b400"/><rect x="4.4" y="11" width="12" height="5.6" fill="#1e9af0"/><rect x="8.2" y="13" width="4.4" height="3.6" fill="#f7d66b"/></svg>
<div class="t" style="left:23.70px;top:180.31px;font-size:8.8px;color:#000;transform:scaleX(0.8593);transform-origin:0 50%;">Libraries</div>
<svg class="a" style="left:27px;top:199px;" width="22" height="19" viewBox="0 0 22 19"><path d="M7.4 0.6L20.4 4.4V13.2L7.4 9.6Z" fill="#46aef3" stroke="#2389d6" stroke-width="0.7"/><path d="M1.4 14.6L12.6 11.2L19 13.4L7.6 17.8Z" fill="#d9dde2"/><path d="M10.8 10.6L13.4 11.4L12.4 12.6L9.8 11.8Z" fill="#b7bcc4"/></svg>
<div class="t" style="left:25.20px;top:220.81px;font-size:8.8px;color:#000;transform:scaleX(0.8308);transform-origin:0 50%;">This PC</div>
<svg class="a" style="left:28px;top:239px;" width="22" height="19" viewBox="0 0 22 19"><circle cx="13" cy="7.4" r="6.6" fill="#4a98c8"/><path d="M9 3.4C11.4 1.6 15.4 2.2 16.4 4.4C15 6.8 11.4 6.4 9 3.4ZM14.4 9.4C17 8.8 18.6 10.4 18.2 12C16.6 13.2 14.2 12 14.4 9.4Z" fill="#9fd0ea"/><path d="M1 5.6L12.6 8.4V16.4L1 13.6Z" fill="#3fa9f0" stroke="#2389d6" stroke-width="0.6"/><path d="M5 16.4L9 17.2V18.2L5 17.4Z" fill="#b7bcc4"/></svg>
<div class="t" style="left:23.20px;top:260.81px;font-size:8.8px;color:#000;transform:scaleX(0.9295);transform-origin:0 50%;">Network</div>
<div class="a" style="left:71px;top:73px;width:301px;height:177.5px;background:#fff;"></div>
<div class="a" style="left:177.5px;top:73px;width:1px;height:177px;background:#f4f4f4;"></div>
<div class="a" style="left:204.5px;top:73px;width:1px;height:177px;background:#f4f4f4;"></div>
<div class="a" style="left:311.5px;top:73px;width:1px;height:177px;background:#f4f4f4;"></div>
<div class="t" style="left:76.00px;top:76.91px;font-size:8.8px;color:#000;transform:scaleX(0.8946);transform-origin:0 50%;">Name</div>
<svg class="a" style="left:122px;top:73.6px;" width="6" height="3.5" viewBox="0 0 6 3.5"><path d="M0.5 3L3 0.6L5.5 3" fill="none" stroke="#555" stroke-width="0.9"/></svg>
<div class="t" style="left:182.00px;top:77.56px;font-size:7px;color:#000;">#</div>
<div class="t" style="left:209.00px;top:76.91px;font-size:8.8px;color:#000;transform:scaleX(0.9203);transform-origin:0 50%;">Title</div>
<div class="t" style="left:315.50px;top:76.91px;font-size:8.8px;color:#000;transform:scaleX(0.9307);transform-origin:0 50%;">Contributing art</div>
<svg class="a" style="left:78px;top:90px;" width="8" height="11" viewBox="0 0 8 11"><path d="M0.5 0.5H5.2L7.5 2.8V10.5H0.5Z" fill="#fff" stroke="#8e9aa8" stroke-width="0.8"/><circle cx="4" cy="5.8" r="2.3" fill="#2f7fe0"/><circle cx="4" cy="5.8" r="1" fill="#e8f2ff"/></svg>
<div class="t" style="left:89.00px;top:92.11px;font-size:8.8px;color:#000;transform:scaleX(0.8860);transform-origin:0 50%;">Ashes to Dust - Forgot...</div>
<div class="t" style="left:209.00px;top:92.11px;font-size:8.8px;color:#000;transform:scaleX(0.8820);transform-origin:0 50%;">Forgotten Lives</div>
<div class="t" style="left:315.50px;top:92.11px;font-size:8.8px;color:#000;transform:scaleX(0.8762);transform-origin:0 50%;">Ashes to Dust</div>
<div class="a" style="left:71px;top:250.5px;width:301px;height:11px;background:#f0f0f0;"></div>
<div class="a" style="left:83px;top:250.5px;width:202.5px;height:11px;background:#cdcdcd;"></div>
<svg class="a" style="left:74.5px;top:253px;" width="4" height="6" viewBox="0 0 4 6"><path d="M3.4 0.5L0.8 3L3.4 5.5" fill="none" stroke="#333" stroke-width="1.1"/></svg>
<svg class="a" style="left:363.5px;top:253px;" width="4" height="6" viewBox="0 0 4 6"><path d="M0.6 0.5L3.2 3L0.6 5.5" fill="none" stroke="#333" stroke-width="1.1"/></svg>
<div class="t" style="left:72.50px;top:272.11px;font-size:8.8px;color:#000;transform:scaleX(0.7424);transform-origin:0 50%;">File name:</div>
<div class="a" style="left:135px;top:268px;width:164.5px;height:14.5px;background:#fff;border:1px solid #4597e0"></div>
<div class="a" style="left:137.3px;top:270.6px;width:100px;height:9.2px;background:#0078d7;"></div>
<div class="t" style="left:138.00px;top:272.11px;font-size:8.8px;color:#d4e9fa;transform:scaleX(0.8032);transform-origin:0 50%;">Ashes to Dust - Forgotten Lives</div>
<svg class="a" style="left:290px;top:274px;" width="6" height="3.6" viewBox="0 0 6 3.6"><path d="M0.5 0.5L3 3.1L5.5 0.5" fill="none" stroke="#555" stroke-width="0.9"/></svg>
<div class="t" style="left:72.50px;top:289.61px;font-size:8.8px;color:#000;transform:scaleX(0.8064);transform-origin:0 50%;">Save as type:</div>
<div class="a" style="left:135px;top:286.5px;width:164.5px;height:14px;background:#e5f1fb;border:1px solid #4a9ce0"></div>
<div class="t" style="left:138.00px;top:289.71px;font-size:8.8px;color:#000;transform:scaleX(0.8048);transform-origin:0 50%;">WAV (Microsoft) 32-bit float PCM</div>
<svg class="a" style="left:290px;top:292px;" width="6" height="3.6" viewBox="0 0 6 3.6"><path d="M0.5 0.5L3 3.1L5.5 0.5" fill="none" stroke="#555" stroke-width="0.9"/></svg>
<div class="a" style="left:310px;top:264px;width:63.5px;height:21.5px;background:transparent;border:1.8px solid #f81218"></div>
<div class="a" style="left:322px;top:268.5px;width:48.5px;height:14px;background:#e1e1e1;border:1.6px solid #0078d7"></div>
<div class="t" style="left:337.70px;top:272.11px;font-size:8.8px;color:#000;transform:scaleX(0.8475);transform-origin:0 50%;">Save</div>
<div class="a" style="left:322px;top:287.3px;width:48.5px;height:12.6px;background:#e1e1e1;border:1px solid #adadad"></div>
<div class="t" style="left:334.95px;top:290.11px;font-size:8.8px;color:#000;transform:scaleX(0.8214);transform-origin:0 50%;">Cancel</div>
<div class="a" style="left:9px;top:314.5px;width:363.5px;height:88.5px;background:transparent;border:1px solid #e5e5e5"></div>
<div class="a" style="left:13px;top:311px;width:59px;height:8px;background:#f0f0f0;"></div>
<div class="t" style="left:14.50px;top:311.31px;font-size:8.8px;color:#000;transform:scaleX(0.9152);transform-origin:0 50%;">Format Options</div>
<div class="t" style="left:143.50px;top:358.31px;font-size:8.8px;color:#000;transform:scaleX(0.9215);transform-origin:0 50%;">No format specific options</div>
<svg class="a" style="left:367px;top:399px;" width="8" height="8" viewBox="0 0 8 8"><g fill="#bdbdbd"><rect x="5.5" y="5.5" width="1.3" height="1.3"/><rect x="5.5" y="3" width="1.3" height="1.3"/><rect x="3" y="5.5" width="1.3" height="1.3"/><rect x="5.5" y="0.5" width="1.3" height="1.3"/><rect x="3" y="3" width="1.3" height="1.3"/><rect x="0.5" y="5.5" width="1.3" height="1.3"/></g></svg>
<svg class="a" style="left:162.7px;top:291.6px;" width="9" height="14" viewBox="0 0 9 14"><path d="M0.6 0.6V10.8L3 8.6L4.8 12.8L6.4 12.1L4.6 8H7.8Z" fill="#fff" stroke="#000" stroke-width="0.8"/></svg>
</body></html>
